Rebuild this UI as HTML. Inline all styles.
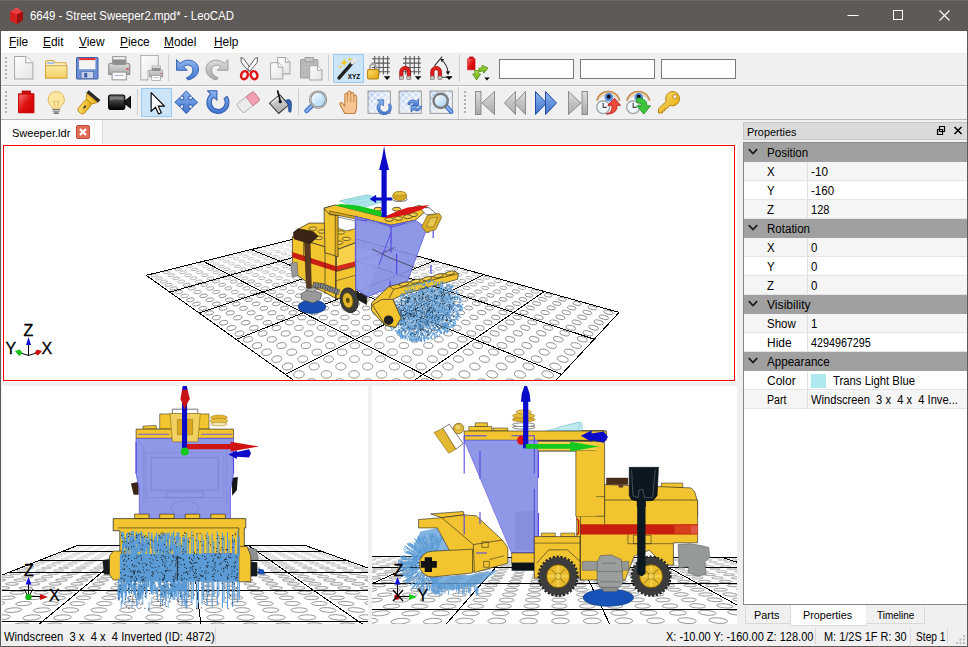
<!DOCTYPE html>
<html><head><meta charset="utf-8"><title>LeoCAD</title>
<style>
*{box-sizing:border-box;margin:0;padding:0}
html,body{width:968px;height:647px;overflow:hidden;background:#f0f0f0;font-family:"Liberation Sans","DejaVu Sans",sans-serif;font-size:12px;color:#000}
.abs{position:absolute}
#win{position:absolute;left:0;top:0;width:968px;height:647px;background:#f0f0f0;overflow:hidden}
.tx{position:absolute;white-space:nowrap;transform-origin:0 50%;transform:scaleX(.915);font-size:12.5px;line-height:15px}
#title{left:0;top:0;width:968px;height:31px;background:#5e5a58;color:#fff}
#menu{left:1px;top:31px;width:966px;height:21px;background:#fff}
.hl{position:absolute;left:1px;width:966px;height:1px}
.sep{position:absolute;width:1px;height:26px;background:#cdcdcd}
.btn{position:absolute;background:#cce4f7;border:1px solid #99c9ef}
.inp{position:absolute;top:59px;height:20px;background:#fff;border:1px solid #7a7a7a}
.ic{position:absolute;overflow:visible}
.grip{position:absolute;width:2px;height:24px;background:repeating-linear-gradient(#b0b0b0 0 2px,transparent 2px 4px)}
.vp{position:absolute;background:#fff;overflow:hidden}
.vp svg{position:absolute;left:0;top:0}
.row{position:absolute;left:744px;width:223px;height:19px;white-space:nowrap;border-bottom:1px solid #e4e4e4}
.row .k{left:23px;top:2px}
.row .v{left:67px;top:2px}
.row.h{background:#a0a0a0;border-bottom:1px solid #a0a0a0}
.row.a{background:#f5f5f5}
.row.b{background:#fff}
.row i{position:absolute;left:63px;top:0;width:1px;height:19px;background:#e0e0e0}
</style></head><body>

<svg width="0" height="0" style="position:absolute"><defs>
<linearGradient id="gPage" x1="0" y1="0" x2="1" y2="1"><stop offset="0" stop-color="#ffffff"/><stop offset="1" stop-color="#e4e4e4"/></linearGradient>
<linearGradient id="gFold" x1="0" y1="0" x2="0" y2="1"><stop offset="0" stop-color="#fbe9a4"/><stop offset="1" stop-color="#f3cf63"/></linearGradient>
<linearGradient id="gBlue" x1="0" y1="0" x2="0" y2="1"><stop offset="0" stop-color="#8db4ec"/><stop offset="1" stop-color="#3f74cf"/></linearGradient>
<linearGradient id="gGray" x1="0" y1="0" x2="0" y2="1"><stop offset="0" stop-color="#dcdcdc"/><stop offset="1" stop-color="#a9a9a9"/></linearGradient>
<linearGradient id="gRed" x1="0" y1="0" x2="1" y2="1"><stop offset="0" stop-color="#f87878"/><stop offset=".5" stop-color="#e01010"/><stop offset="1" stop-color="#c80000"/></linearGradient>
<linearGradient id="gGold" x1="0" y1="0" x2="1" y2="1"><stop offset="0" stop-color="#ffe27a"/><stop offset="1" stop-color="#e2a400"/></linearGradient>
<linearGradient id="gBlk" x1="0" y1="0" x2="0" y2="1"><stop offset="0" stop-color="#6a6a6a"/><stop offset="1" stop-color="#000"/></linearGradient>
<linearGradient id="gLens" x1="0" y1="0" x2="1" y2="1"><stop offset="0" stop-color="#ffffff"/><stop offset="1" stop-color="#9fd0f5"/></linearGradient>
<linearGradient id="gGrn" x1="0" y1="0" x2="0" y2="1"><stop offset="0" stop-color="#b6e34a"/><stop offset="1" stop-color="#5faa12"/></linearGradient>
<pattern id="chk" width="6" height="6" patternUnits="userSpaceOnUse"><rect width="6" height="6" fill="#eef4fc"/><rect width="3" height="3" fill="#a9c6f0"/><rect x="3" y="3" width="3" height="3" fill="#a9c6f0"/></pattern>
<linearGradient id="gFade" x1="0" y1="0" x2="1" y2="1"><stop offset="0" stop-color="#fff" stop-opacity="0"/><stop offset=".75" stop-color="#f4f4f4" stop-opacity=".9"/></linearGradient>
</defs></svg>

<div id="win">
<div id="title" class="abs">
<svg class="ic" style="left:8px;top:7px" width="18" height="18" viewBox="0 0 18 18"><path d="M2,5L8,2.500L15,4.500V13L9,17L2,13.500Z" fill="#c81818"/><path d="M2,5L9,7.500L15,4.500L8,2.500Z" fill="#e84040"/><path d="M9,7.500V17L2,13.500V5Z" fill="#d42020"/><path d="M9,7.500V17L15,13V4.500Z" fill="#a01010"/><ellipse cx="6" cy="3.500" rx="2" ry="1" fill="#e84040"/><ellipse cx="10.500" cy="3" rx="2" ry="1" fill="#e84040"/><ellipse cx="8.500" cy="1.800" rx="2" ry="1" fill="#f05050"/></svg>
<span class="tx" style="left:30px;top:9px;transform:scaleX(0.9146);">6649 - Street Sweeper2.mpd* - LeoCAD</span>
<svg class="ic" style="left:830px;top:0" width="138" height="31" viewBox="0 0 138 31"><path d="M17.500,15.500h11" stroke="#fff" stroke-width="1"/><rect x="63.500" y="10.500" width="9" height="9" fill="none" stroke="#fff"/><path d="M109.500,10.500l10,10m0,-10l-10,10" stroke="#fff" stroke-width="1.100"/></svg>
</div>
<div id="menu" class="abs">
<span class="tx" style="left:8px;top:4px;transform:scaleX(0.95);"><u>F</u>ile</span>
<span class="tx" style="left:42px;top:4px;transform:scaleX(0.95);"><u>E</u>dit</span>
<span class="tx" style="left:78px;top:4px;transform:scaleX(0.95);"><u>V</u>iew</span>
<span class="tx" style="left:119px;top:4px;transform:scaleX(0.95);"><u>P</u>iece</span>
<span class="tx" style="left:163px;top:4px;transform:scaleX(0.95);"><u>M</u>odel</span>
<span class="tx" style="left:213px;top:4px;transform:scaleX(0.95);"><u>H</u>elp</span>
</div>
<div class="hl" style="top:52px;background:#fafafa"></div>
<div class="hl" style="top:85px;background:#b9b9b9"></div>
<div class="hl" style="top:86px;background:#fbfbfb"></div>
<div class="hl" style="top:119px;background:#b9b9b9"></div>
<div class="grip" style="left:5px;top:57px"></div><div class="grip" style="left:5px;top:91px"></div>
<div class="btn" style="left:333px;top:54px;width:31px;height:29px"></div>
<div class="btn" style="left:141px;top:88px;width:31px;height:29px"></div>
<svg class="ic" style="left:11.75px;top:55.75px" width="24.5" height="24.5" viewBox="0 0 24 24"><path d="M2.5,.5H13.5L20.5,6.5V22.5H2.5Z" fill="url(#gPage)" stroke="#a8a8a8"/><path d="M13.5,.5V6.5H20.5" fill="#fff" stroke="#a8a8a8"/></svg>
<svg class="ic" style="left:44.25px;top:55.75px" width="24.5" height="24.5" viewBox="0 0 24 24"><path d="M1.5,6.5Q1.5,4.5 3.5,4.5H9L11,6.5H21.5V21.5H1.5Z" fill="#fdf3c8" stroke="#d1a640"/><rect x="3" y="6" width="7" height="2" fill="#9fc0ee"/><path d="M1.5,9.5H22.5V21.5H1.5Z" fill="url(#gFold)" stroke="#d1a640"/></svg>
<svg class="ic" style="left:75.25px;top:55.75px" width="24.5" height="24.5" viewBox="0 0 24 24"><path d="M1.5,2.5Q1.5,1.5 2.5,1.5H21.5Q22.5,1.5 22.5,2.5V21.5Q22.5,22.5 21.5,22.5H2.5Q1.5,22.5 1.5,21.5Z" fill="#6d8fd6" stroke="#3e5fa8"/><rect x="4" y="2" width="16" height="11" fill="#f4f4f4"/><rect x="4" y="2" width="16" height="2" fill="#e03030"/><rect x="6" y="15" width="12" height="7" fill="#c9d3e6" stroke="#3e5fa8" stroke-width=".6"/><rect x="9" y="16.5" width="3" height="4.5" fill="#3e5fa8"/></svg>
<svg class="ic" style="left:105.75px;top:54.75px" width="26.5" height="26.5" viewBox="0 0 24 24"><rect x="6" y="1.5" width="12" height="8" fill="#f4f4f4" stroke="#9a9a9a"/><path d="M2.5,9.5Q2.5,7.5 4.5,7.5H19.5Q21.5,7.5 21.5,9.5V17.5H2.5Z" fill="url(#gGray)" stroke="#8a8a8a"/><rect x="6" y="4" width="12" height="5" fill="#8f8f8f"/><rect x="5.5" y="15.5" width="13" height="7" fill="#fafafa" stroke="#9a9a9a"/><rect x="8" y="18" width="8" height="1" fill="#a9b7d0"/><rect x="18.5" y="12" width="2" height="1.2" fill="#e02020"/></svg>
<svg class="ic" style="left:137.75px;top:54.75px" width="26.5" height="26.5" viewBox="0 0 24 24"><path d="M2.5,.5H18.5V14H9V22.5H2.5Z" fill="url(#gPage)" stroke="#b4b4b4"/><g transform="translate(9,9) scale(.62)"><rect x="6" y="1.5" width="12" height="8" fill="#f4f4f4" stroke="#9a9a9a"/><path d="M2.5,9.5Q2.5,7.5 4.5,7.5H19.5Q21.5,7.5 21.5,9.5V17.5H2.5Z" fill="url(#gGray)" stroke="#8a8a8a"/><rect x="6" y="4" width="12" height="5" fill="#8f8f8f"/><rect x="5.5" y="15.5" width="13" height="7" fill="#fafafa" stroke="#9a9a9a"/><rect x="8" y="18" width="8" height="1" fill="#a9b7d0"/><rect x="18.5" y="12" width="2" height="1.2" fill="#e02020"/></g></svg>
<svg class="ic" style="left:175.25px;top:55.75px" width="24.5" height="24.5" viewBox="0 0 24 24"><path d="M1.500,3.500L1.500,14L12,14L8.300,10.500C12,7.500 18,9 17.500,14.500C17.200,17.500 14.500,20 11,21.500L13,23.500C19,22 23,18 23,13C23,4.500 12,1 5,7.200Z" fill="url(#gBlue)" stroke="#2e5cb0" stroke-width=".9" stroke-linejoin="round"/></svg>
<svg class="ic" style="left:205.25px;top:55.75px" width="24.5" height="24.5" viewBox="0 0 24 24"><g transform="translate(24,0) scale(-1,1)"><path d="M1.500,3.500L1.500,14L12,14L8.300,10.500C12,7.500 18,9 17.500,14.500C17.200,17.500 14.500,20 11,21.500L13,23.500C19,22 23,18 23,13C23,4.500 12,1 5,7.200Z" fill="url(#gGray)" stroke="#9a9a9a" stroke-width=".9" stroke-linejoin="round"/></g></svg>
<svg class="ic" style="left:236.75px;top:55.75px" width="24.5" height="24.5" viewBox="0 0 24 24"><path d="M3.800,1.500L6.500,2.500L13.500,12.500L11.500,15L4.300,6.500Z" fill="#f6f6f6" stroke="#444" stroke-width=".8" stroke-linejoin="round"/><path d="M20.200,1.500L17.500,2.500L10.500,12.500L12.500,15L19.700,6.500Z" fill="#fdfdfd" stroke="#444" stroke-width=".8" stroke-linejoin="round"/><ellipse cx="7.300" cy="18.800" rx="3.200" ry="4" fill="none" stroke="#e01414" stroke-width="2.400" transform="rotate(22 7.300 18.800)"/><ellipse cx="16.700" cy="18.800" rx="3.200" ry="4" fill="none" stroke="#e01414" stroke-width="2.400" transform="rotate(-22 16.700 18.800)"/></svg>
<svg class="ic" style="left:267.75px;top:55.75px" width="24.5" height="24.5" viewBox="0 0 24 24"><path d="M9.5,1.5H17L21.5,6V17.5H9.5Z" fill="url(#gPage)" stroke="#a8a8a8"/><path d="M17,1.5V6H21.5" fill="#fff" stroke="#a8a8a8"/><path d="M2.5,6.5H10L14.5,11V22.5H2.5Z" fill="url(#gPage)" stroke="#a8a8a8"/><path d="M10,6.5V11H14.5" fill="#fff" stroke="#a8a8a8"/></svg>
<svg class="ic" style="left:298.75px;top:55.75px" width="24.5" height="24.5" viewBox="0 0 24 24"><rect x="1.5" y="3.5" width="17" height="18" rx="1" fill="#b9b9b9" stroke="#a0a0a0"/><rect x="6" y="1.5" width="8" height="4" fill="#c9c9c9" stroke="#a0a0a0"/><path d="M10.5,9.5H18L22.5,14V23.5H10.5Z" fill="url(#gPage)" stroke="#a8a8a8"/><path d="M18,9.5V14H22.5" fill="#fff" stroke="#a8a8a8"/></svg>
<svg class="ic" style="left:336.25px;top:55.75px" width="24.5" height="24.5" viewBox="0 0 24 24"><path d="M3,21.5 L17,5.5" stroke="#222" stroke-width="3.4" stroke-linecap="round"/><path d="M16,6.6 L18.6,3.6" stroke="#e8e8e8" stroke-width="3.4" stroke-linecap="round"/><path d="M8,2.5l1,3 3,1 -3,1 -1,3 -1,-3 -3,-1 3,-1z" fill="#f7c518"/><path d="M13.5,1l.6,1.6 1.6,.6 -1.6,.6 -.6,1.6 -.6,-1.6 -1.600,-.6 1.600,-.6z" fill="#f7c518"/><path d="M4.5,9l.5,1.300 1.300,.5 -1.300,.5 -.5,1.300 -.5,-1.300 -1.300,-.5 1.300,-.5z" fill="#f7c518"/><text x="11.500" y="23" font-family="Liberation Sans,sans-serif" font-weight="bold" font-size="6.200" fill="#000">XYZ</text></svg>
<svg class="ic" style="left:366px;top:55px" width="26" height="26" viewBox="0 0 24 24"><path d="M5.500,3.500H22M5.500,7.500H22M5.500,11.500H22M5.500,15.500H22M8,1V18M12,1V18M16,1V18M20,1V18" stroke="#5a5a5a" stroke-width="1" fill="none"/><path d="M16.500,19.500h6l-3,3.500z" fill="#000"/><path d="M3.800,13.500V11a2.700,2.700 0 0 1 5.400,0V13.500" fill="none" stroke="#a8a8a8" stroke-width="1.700"/><rect x="1.500" y="13.500" width="10" height="8.500" rx="1" fill="url(#gGold)" stroke="#b8860b"/></svg>
<svg class="ic" style="left:396.5px;top:55px" width="26" height="26" viewBox="0 0 24 24"><path d="M5.500,3.500H22M5.500,7.500H22M5.500,11.500H22M5.500,15.500H22M8,1V18M12,1V18M16,1V18M20,1V18" stroke="#5a5a5a" stroke-width="1" fill="none"/><path d="M16.500,19.500h6l-3,3.500z" fill="#000"/><path d="M2.500,22V15.500a5,5 0 0 1 10,0V22H9.500V15.500a2,2 0 0 0 -4,0V22Z" fill="#e42020" stroke="#a00000" stroke-width=".7"/><rect x="2.200" y="19.500" width="3.600" height="3" fill="#c4c4c4" stroke="#777" stroke-width=".5"/><rect x="9.200" y="19.500" width="3.600" height="3" fill="#c4c4c4" stroke="#777" stroke-width=".5"/></svg>
<svg class="ic" style="left:428px;top:55px" width="26" height="26" viewBox="0 0 24 24"><path d="M6,10 L13,1.500 M12,20.500H22" stroke="#333" stroke-width="1" fill="none"/><path d="M12.500,4.500 Q18,9 18.500,16.500" stroke="#333" stroke-width="1" fill="none"/><path d="M11.500,3.500l3.500,.5 -2.500,2.500z M18.500,18.500l-2.200,-3.200 4.200,-.3z" fill="#111"/><path d="M16.500,19.500h6l-3,3.500z" fill="#000"/><path d="M2.500,22V15.500a5,5 0 0 1 10,0V22H9.500V15.500a2,2 0 0 0 -4,0V22Z" fill="#e42020" stroke="#a00000" stroke-width=".7"/><rect x="2.200" y="19.500" width="3.600" height="3" fill="#c4c4c4" stroke="#777" stroke-width=".5"/><rect x="9.200" y="19.500" width="3.600" height="3" fill="#c4c4c4" stroke="#777" stroke-width=".5"/></svg>
<svg class="ic" style="left:465px;top:55px" width="26" height="26" viewBox="0 0 24 24"><g transform="translate(.3,1.200) scale(.46,.56)"><rect x="8" y="1" width="8" height="3.500" fill="#d41010" stroke="#a00000" stroke-width=".8"/><rect x="4.500" y="3.800" width="15" height="18.500" rx=".3" fill="url(#gRed)" stroke="#c00000"/></g><path d="M7,17.500h2v-3.200h3.500v3.200h2l-3.750,5.500z" fill="url(#gGrn)" stroke="#4c8c10" stroke-width=".7" stroke-linejoin="round"/><path d="M13,11.500h3.500v-2.200l4.800,3.700 -4.800,3.700v-2.200h-3.500z" fill="url(#gGrn)" stroke="#4c8c10" stroke-width=".7" stroke-linejoin="round" transform="rotate(-12 17 13)"/><path d="M17.800,20.800h5l-2.500,2.700z" fill="#000"/></svg>
<div class="sep" style="left:168px;top:55px"></div>
<div class="sep" style="left:328px;top:55px"></div>
<div class="sep" style="left:459px;top:55px"></div>
<div class="inp" style="left:499px;width:75px"></div>
<div class="inp" style="left:580px;width:75px"></div>
<div class="inp" style="left:661px;width:75px"></div>
<svg class="ic" style="left:13.75px;top:90.25px" width="24.5" height="24.5" viewBox="0 0 24 24"><rect x="8" y="1" width="8" height="3.500" fill="#d41010" stroke="#a00000" stroke-width=".8"/><rect x="4.500" y="3.800" width="15" height="18.500" rx=".3" fill="url(#gRed)" stroke="#c00000"/></svg>
<svg class="ic" style="left:44.25px;top:90.25px" width="24.5" height="24.5" viewBox="0 0 24 24"><path d="M12,1.500a8,8 0 0 0 -4.500,14.500c.8,.8 1,2 1,3h7c0,-1 .2,-2.200 1,-3A8,8 0 0 0 12,1.500z" fill="#fbe7a0" stroke="#e0b050" stroke-width=".9"/><path d="M9.500,11l1.500,6M14.500,11l-1.500,6M9.500,11h5" stroke="#e6b85a" stroke-width=".8" fill="none"/><rect x="8.500" y="18.500" width="7" height="1.300" fill="#777"/><rect x="8.500" y="20.300" width="7" height="1.300" fill="#999"/><rect x="9.500" y="22" width="5" height="1.300" fill="#555"/></svg>
<svg class="ic" style="left:76.25px;top:90.75px" width="23.5" height="23.5" viewBox="0 0 24 24"><g transform="rotate(-50 12 12)"><rect x="-1" y="8.200" width="15.500" height="8" rx="3" fill="url(#gGold)" stroke="#b07a00" stroke-width=".8"/><path d="M14,8.200L19,5V19.500L14,16.200Z" fill="url(#gGold)" stroke="#b07a00" stroke-width=".8"/><rect x="19" y="4.500" width="3.500" height="15.500" fill="#2a2a2a"/><rect x="5" y="11.500" width="3.500" height="1.800" rx=".9" fill="#333"/></g></svg>
<svg class="ic" style="left:107.25px;top:90.25px" width="24.5" height="24.5" viewBox="0 0 24 24"><rect x="1.500" y="5" width="16" height="14" rx="2" fill="url(#gBlk)" stroke="#000"/><path d="M17.500,11L23,6.500V17.500L17.500,13.500Z" fill="#1a1a1a" stroke="#000"/><path d="M3,7Q9,6 16,7V10Q9,8.500 3,10Z" fill="#fff" opacity=".25"/></svg>
<svg class="ic" style="left:143.75px;top:90.25px" width="24.5" height="24.5" viewBox="0 0 24 24"><path transform="translate(.5,1)" d="M6.500,1.500V20L10.800,15.800L13.800,22.500L16.500,21.200L13.500,14.800H19.500Z" fill="#fff" stroke="#000" stroke-width="1.100" stroke-linejoin="round"/></svg>
<svg class="ic" style="left:173.75px;top:90.25px" width="24.5" height="24.5" viewBox="0 0 24 24"><path d="M12,.8L17,6.200H14.600V9.400H17.800V7L23.200,12L17.800,17V14.600H14.600V17.800H17L12,23.200L7,17.800H9.400V14.600H6.200V17L.8,12L6.200,7V9.400H9.400V6.200H7Z" fill="url(#gBlue)" stroke="#2e5cb0" stroke-width=".9" stroke-linejoin="round"/></svg>
<svg class="ic" style="left:203.5px;top:89px" width="27" height="27" viewBox="0 0 24 24"><path d="M3,1.500H11.500V10L8.700,7.200A6.200,6.200 0 1 0 17.800,8.500L20.500,6.500A9.800,9.800 0 1 1 6,4.500Z" fill="url(#gBlue)" stroke="#2e5cb0" stroke-width=".9" stroke-linejoin="round"/></svg>
<svg class="ic" style="left:236.25px;top:90.25px" width="24.5" height="24.5" viewBox="0 0 24 24"><g transform="rotate(-38 12 12)"><rect x="1.500" y="6.500" width="21" height="11" rx="2" fill="#ececec" stroke="#a8a8a8" stroke-width=".8"/><path d="M13.500,6.500H20.500a2,2 0 0 1 2,2v7a2,2 0 0 1 -2,2H13.500Z" fill="#f0a0b0" stroke="#d07888" stroke-width=".8"/></g></svg>
<svg class="ic" style="left:267.75px;top:90.25px" width="24.5" height="24.5" viewBox="0 0 24 24"><path d="M1.500,13L11.500,4.500L20.500,14.500L10.500,23Z" fill="url(#gGray)" stroke="#333" stroke-width="1"/><path d="M3.500,13L11.500,6" stroke="#fff" stroke-width="1.400" opacity=".8"/><path d="M17,10.500C21,7.500 23.500,10.500 23,15L22.500,21.500C20.500,22.500 20,20.500 20,18.500C20,15 19.500,13.500 18.500,12.500Z" fill="#2f5fb0" stroke="#1e4080" stroke-width=".6"/><path d="M9.500,1L12,11" stroke="#111" stroke-width="1.700" stroke-linecap="round"/><circle cx="12" cy="11.500" r="1.600" fill="#111"/></svg>
<svg class="ic" style="left:302.75px;top:90.25px" width="24.5" height="24.5" viewBox="0 0 24 24"><path d="M8.500,15.500L3.500,20.500" stroke="#3f74cf" stroke-width="4.600" stroke-linecap="round"/><path d="M8.500,15.500L3.500,20.500" stroke="#8db4ec" stroke-width="2" stroke-linecap="round"/><circle cx="14.800" cy="9.500" r="7.800" fill="url(#gLens)" stroke="#7a7a7a" stroke-width="2.200"/><circle cx="14.800" cy="9.500" r="7.800" fill="none" stroke="#dcdcdc" stroke-width=".8"/></svg>
<svg class="ic" style="left:336.25px;top:90.25px" width="24.5" height="24.5" viewBox="0 0 24 24"><g transform="translate(1.500,-1.200) scale(1.1)"><path d="M6.500,22C5,19 2.500,15.500 2,13.500C1.800,12 3.500,11.800 4.500,13L6.500,15.500V5.500C6.500,3.500 9,3.500 9,5.500V3.500C9,1.500 11.800,1.500 11.800,3.500V4.500C11.800,2.800 14.500,2.800 14.500,4.800V6.500C14.500,5 17,5 17,7V16C17,19 16,20.500 15.500,22Z" fill="#f6c592" stroke="#c08040" stroke-width=".9" stroke-linejoin="round"/><path d="M9,5.500V12M11.800,4.500V12M14.500,6.500V12" stroke="#c08040" stroke-width=".7"/></g></svg>
<svg class="ic" style="left:366.5px;top:89.5px" width="26" height="26" viewBox="0 0 24 24"><rect x="1" y="1" width="20.500" height="20.500" fill="url(#chk)" stroke="#9a9a9a"/><rect x="1.500" y="1.500" width="19.500" height="19.500" fill="url(#gFade)"/><g transform="translate(7.500,8) scale(.68)"><path d="M3,1.500H11.500V10L8.700,7.200A6.200,6.200 0 1 0 17.800,8.500L20.500,6.500A9.800,9.800 0 1 1 6,4.500Z" fill="url(#gBlue)" stroke="#2e5cb0" stroke-width=".9" stroke-linejoin="round"/></g></svg>
<svg class="ic" style="left:397.5px;top:89.5px" width="26" height="26" viewBox="0 0 24 24"><rect x="1" y="1" width="20.500" height="20.500" fill="url(#chk)" stroke="#9a9a9a"/><rect x="1.500" y="1.500" width="19.500" height="19.500" fill="url(#gFade)"/><path d="M9,13C10,9 14,8 17,10.500L19,8V14.500H12.500L15,12.500C13,11 11.500,12 11,14Z" fill="url(#gBlue)" stroke="#2e5cb0" stroke-width=".7"/><path d="M22,15C21,19.500 17,20.500 14,18L12,20.500V14.500H18.500L16,16.500C18,18 19.500,16.500 20,14.800Z" fill="url(#gBlue)" stroke="#2e5cb0" stroke-width=".7"/></svg>
<svg class="ic" style="left:428.5px;top:89.5px" width="26" height="26" viewBox="0 0 24 24"><rect x="1" y="1" width="20.500" height="20.500" fill="url(#chk)" stroke="#9a9a9a"/><rect x="1.500" y="1.500" width="19.500" height="19.500" fill="url(#gFade)"/><path d="M16,15L20.500,20" stroke="#3f74cf" stroke-width="4.200" stroke-linecap="round"/><path d="M16,15L20.500,20" stroke="#8db4ec" stroke-width="1.800" stroke-linecap="round"/><circle cx="10.800" cy="10" r="6.600" fill="url(#gLens)" stroke="#7a7a7a" stroke-width="2.200"/></svg>
<svg class="ic" style="left:472.5px;top:90.5px" width="24" height="24" viewBox="0 0 24 24"><rect x="2.500" y=".5" width="5.500" height="23" fill="url(#gGray)" stroke="#8c8c8c"/><path d="M21.500,.5V23.500L9,12Z" fill="url(#gGray)" stroke="#8c8c8c"/></svg>
<svg class="ic" style="left:503px;top:90.5px" width="24" height="24" viewBox="0 0 24 24"><path d="M12.500,.5V23.500L1.500,12Z" fill="url(#gGray)" stroke="#8c8c8c"/><path d="M22.500,.5V23.500L11.500,12Z" fill="url(#gGray)" stroke="#8c8c8c"/></svg>
<svg class="ic" style="left:533.5px;top:90.5px" width="24" height="24" viewBox="0 0 24 24"><path d="M1.500,.5V23.500L12.500,12Z" fill="url(#gBlue)" stroke="#2448a8"/><path d="M11.500,.5V23.500L22.500,12Z" fill="url(#gBlue)" stroke="#2448a8"/></svg>
<svg class="ic" style="left:566px;top:90.5px" width="24" height="24" viewBox="0 0 24 24"><rect x="16" y=".5" width="5.500" height="23" fill="url(#gGray)" stroke="#8c8c8c"/><path d="M2.500,.5V23.500L15,12Z" fill="url(#gGray)" stroke="#8c8c8c"/></svg>
<svg class="ic" style="left:595.75px;top:90.25px" width="24.5" height="24.5" viewBox="0 0 24 24"><path d="M.8,10.500C3,-1.500 21,-1.500 23.200,10.500" fill="#f6dcb4" stroke="#c48a50" stroke-width="1.500"/><path d="M2,10.500C5,3 19,3 22,10.500C18,14 6,14 2,10.500Z" fill="#f4f8fc" stroke="#b0b0b0" stroke-width=".5"/><circle cx="12.500" cy="7" r="4.200" fill="#5b8fdc"/><circle cx="12.500" cy="6.500" r="2" fill="#0a1020"/><circle cx="7" cy="16.800" r="6.300" fill="#f0f7fc" stroke="#a4a4a4" stroke-width="1.300"/><path d="M7,12.500V17H10.500" stroke="#444" stroke-width="1.100" fill="none"/><path d="M10,23.500C15,22.500 16,19 15.500,15H11.500L18,8L24,15H20.500C21,20.500 17,24 10,23.500Z" fill="#ec4c3c" stroke="#b01010" stroke-width=".8" stroke-linejoin="round"/></svg>
<svg class="ic" style="left:626.25px;top:90.25px" width="24.5" height="24.5" viewBox="0 0 24 24"><path d="M.8,10.500C3,-1.500 21,-1.500 23.200,10.500" fill="#f6dcb4" stroke="#c48a50" stroke-width="1.500"/><path d="M2,10.500C5,3 19,3 22,10.500C18,14 6,14 2,10.500Z" fill="#f4f8fc" stroke="#b0b0b0" stroke-width=".5"/><circle cx="12.500" cy="7" r="4.200" fill="#5b8fdc"/><circle cx="12.500" cy="6.500" r="2" fill="#0a1020"/><circle cx="7" cy="16.800" r="6.300" fill="#f0f7fc" stroke="#a4a4a4" stroke-width="1.300"/><path d="M7,12.500V17H10.500" stroke="#444" stroke-width="1.100" fill="none"/><path d="M10.500,8C16,7 20.500,10 20.500,15.500H24L17.500,23.500L10.500,15.500H15C15,13 13.500,12 10.500,12.500Z" fill="#3cc43c" stroke="#1c8c1c" stroke-width=".8" stroke-linejoin="round"/></svg>
<svg class="ic" style="left:656.75px;top:90.25px" width="24.5" height="24.5" viewBox="0 0 24 24"><path d="M15.500,1.500a7,7 0 0 0 -6.500,9.500L1.500,18.500V22.500H5.500V20.500H7.500V18.500H9.500L12.500,15a7,7 0 1 0 3,-13.500z" fill="url(#gGold)" stroke="#b07a00" stroke-width=".9" stroke-linejoin="round"/><circle cx="17.500" cy="6.500" r="2" fill="#f0f0f0" stroke="#b07a00" stroke-width=".8"/></svg>
<div class="sep" style="left:137px;top:89px"></div>
<div class="sep" style="left:298px;top:89px"></div>
<div class="sep" style="left:458px;top:87px;height:32px;background:#c4c4c4"></div><div class="sep" style="left:459px;top:87px;height:32px;background:#fbfbfb"></div><div class="grip" style="left:464px;top:91px"></div>
<div class="abs" style="left:1px;top:120px;width:102px;height:24px;background:#fbfbfb;border-right:1px solid #dcdcdc"></div>
<span class="tx" style="left:12px;top:125.8px;font-size:11.3px;transform:scaleX(0.9773);">Sweeper.ldr</span>
<svg class="ic" style="left:76px;top:125px" width="14" height="14" viewBox="0 0 14 14"><rect x=".5" y=".5" width="13" height="13" rx="1.500" fill="#e06c58" stroke="#c24a38"/><path d="M4,4l6,6m0,-6l-6,6" stroke="#fff" stroke-width="2.200"/></svg>
<div class="vp" style="left:2px;top:144px;width:735px;height:238px"><svg width="735" height="238" viewBox="2 144 735 238"><clipPath id="ct"><rect x="4" y="146" width="730" height="234"/></clipPath><g clip-path="url(#ct)"><g fill="none" stroke="#8c8c8c" stroke-width="0.9" opacity="0.17"><ellipse cx="326.9" cy="232.5" rx="2.4" ry="0.8"/></g><g fill="none" stroke="#8c8c8c" stroke-width="0.9" opacity="0.33"><ellipse cx="258.3" cy="249.5" rx="2.8" ry="1.0" transform="rotate(176 258.3 249.5)"/><ellipse cx="266.9" cy="247.4" rx="2.7" ry="0.9"/><ellipse cx="272.5" cy="249.5" rx="2.7" ry="1.0"/><ellipse cx="275.2" cy="245.4" rx="2.7" ry="0.9"/><ellipse cx="280.8" cy="247.4" rx="2.7" ry="1.0"/><ellipse cx="286.6" cy="249.5" rx="2.7" ry="1.0"/><ellipse cx="283.3" cy="243.4" rx="2.6" ry="0.9"/><ellipse cx="288.9" cy="245.3" rx="2.6" ry="0.9"/><ellipse cx="294.7" cy="247.3" rx="2.7" ry="1.0"/><ellipse cx="300.7" cy="249.4" rx="2.7" ry="1.0"/><ellipse cx="291.1" cy="241.4" rx="2.6" ry="0.9"/><ellipse cx="296.8" cy="243.3" rx="2.6" ry="0.9"/><ellipse cx="302.6" cy="245.3" rx="2.6" ry="0.9"/><ellipse cx="308.7" cy="247.3" rx="2.7" ry="1.0"/><ellipse cx="314.9" cy="249.4" rx="2.7" ry="1.0"/><ellipse cx="298.7" cy="239.5" rx="2.5" ry="0.8"/><ellipse cx="304.4" cy="241.4" rx="2.5" ry="0.9"/><ellipse cx="310.3" cy="243.3" rx="2.6" ry="0.9"/><ellipse cx="316.3" cy="245.2" rx="2.6" ry="0.9"/><ellipse cx="322.6" cy="247.3" rx="2.7" ry="1.0"/><ellipse cx="329.1" cy="249.4" rx="2.7" ry="1.0"/><ellipse cx="306.1" cy="237.7" rx="2.5" ry="0.8"/><ellipse cx="311.8" cy="239.5" rx="2.5" ry="0.9"/><ellipse cx="317.7" cy="241.3" rx="2.5" ry="0.9"/><ellipse cx="323.8" cy="243.2" rx="2.6" ry="0.9"/><ellipse cx="330.1" cy="245.2" rx="2.6" ry="0.9"/><ellipse cx="336.5" cy="247.2" rx="2.7" ry="1.0"/><ellipse cx="343.2" cy="249.3" rx="2.7" ry="1.0"/><ellipse cx="313.2" cy="235.9" rx="2.4" ry="0.8"/><ellipse cx="319.0" cy="237.7" rx="2.5" ry="0.8"/><ellipse cx="324.9" cy="239.5" rx="2.5" ry="0.9"/><ellipse cx="331.0" cy="241.3" rx="2.5" ry="0.9"/><ellipse cx="337.3" cy="243.2" rx="2.6" ry="0.9"/><ellipse cx="343.8" cy="245.2" rx="2.6" ry="0.9"/><ellipse cx="350.5" cy="247.2" rx="2.7" ry="1.0"/><ellipse cx="357.4" cy="249.3" rx="2.7" ry="1.0"/><ellipse cx="320.2" cy="234.2" rx="2.4" ry="0.8"/><ellipse cx="325.9" cy="235.9" rx="2.4" ry="0.8"/><ellipse cx="331.9" cy="237.6" rx="2.5" ry="0.8"/><ellipse cx="338.0" cy="239.4" rx="2.5" ry="0.9"/><ellipse cx="344.3" cy="241.3" rx="2.5" ry="0.9"/><ellipse cx="350.8" cy="243.2" rx="2.6" ry="0.9"/><ellipse cx="357.5" cy="245.1" rx="2.6" ry="0.9"/><ellipse cx="364.4" cy="247.2" rx="2.7" ry="1.0"/><ellipse cx="371.6" cy="249.3" rx="2.7" ry="1.0"/><ellipse cx="332.7" cy="234.2" rx="2.4" ry="0.8"/><ellipse cx="338.7" cy="235.9" rx="2.4" ry="0.8"/><ellipse cx="344.8" cy="237.6" rx="2.5" ry="0.8"/><ellipse cx="351.1" cy="239.4" rx="2.5" ry="0.9"/><ellipse cx="357.6" cy="241.2" rx="2.5" ry="0.9"/><ellipse cx="364.3" cy="243.1" rx="2.6" ry="0.9"/><ellipse cx="371.2" cy="245.1" rx="2.6" ry="0.9"/><ellipse cx="378.4" cy="247.1" rx="2.7" ry="1.0"/><ellipse cx="385.8" cy="249.2" rx="2.7" ry="1.0"/></g><g fill="none" stroke="#8c8c8c" stroke-width="0.9" opacity="0.50"><ellipse cx="189.6" cy="266.6" rx="3.3" ry="1.2" transform="rotate(173 189.6 266.6)"/><ellipse cx="200.5" cy="263.9" rx="3.2" ry="1.1" transform="rotate(173 200.5 263.9)"/><ellipse cx="205.5" cy="266.6" rx="3.2" ry="1.2" transform="rotate(173 205.5 266.6)"/><ellipse cx="211.0" cy="261.3" rx="3.1" ry="1.1" transform="rotate(174 211.0 261.3)"/><ellipse cx="216.1" cy="263.9" rx="3.1" ry="1.2" transform="rotate(174 216.1 263.9)"/><ellipse cx="221.1" cy="258.8" rx="3.0" ry="1.1" transform="rotate(174 221.1 258.8)"/><ellipse cx="226.3" cy="261.3" rx="3.1" ry="1.1" transform="rotate(174 226.3 261.3)"/><ellipse cx="231.7" cy="263.8" rx="3.1" ry="1.2" transform="rotate(174 231.7 263.8)"/><ellipse cx="230.9" cy="256.4" rx="3.0" ry="1.1" transform="rotate(174 230.9 256.4)"/><ellipse cx="236.2" cy="258.7" rx="3.0" ry="1.1" transform="rotate(174 236.2 258.7)"/><ellipse cx="241.7" cy="261.2" rx="3.0" ry="1.1" transform="rotate(175 241.7 261.2)"/><ellipse cx="247.3" cy="263.8" rx="3.1" ry="1.2" transform="rotate(175 247.3 263.8)"/><ellipse cx="240.3" cy="254.0" rx="2.9" ry="1.0" transform="rotate(175 240.3 254.0)"/><ellipse cx="245.7" cy="256.3" rx="2.9" ry="1.1" transform="rotate(175 245.7 256.3)"/><ellipse cx="251.3" cy="258.7" rx="3.0" ry="1.1" transform="rotate(175 251.3 258.7)"/><ellipse cx="257.0" cy="261.2" rx="3.0" ry="1.1" transform="rotate(175 257.0 261.2)"/><ellipse cx="263.0" cy="263.8" rx="3.1" ry="1.2" transform="rotate(175 263.0 263.8)"/><ellipse cx="249.5" cy="251.7" rx="2.8" ry="1.0" transform="rotate(175 249.5 251.7)"/><ellipse cx="254.9" cy="254.0" rx="2.9" ry="1.0" transform="rotate(175 254.9 254.0)"/><ellipse cx="260.5" cy="256.3" rx="2.9" ry="1.1" transform="rotate(175 260.5 256.3)"/><ellipse cx="266.4" cy="258.7" rx="2.9" ry="1.1" transform="rotate(176 266.4 258.7)"/><ellipse cx="272.4" cy="261.2" rx="3.0" ry="1.2" transform="rotate(176 272.4 261.2)"/><ellipse cx="278.6" cy="263.7" rx="3.0" ry="1.2" transform="rotate(176 278.6 263.7)"/><ellipse cx="263.8" cy="251.7" rx="2.8" ry="1.0" transform="rotate(176 263.8 251.7)"/><ellipse cx="269.5" cy="253.9" rx="2.8" ry="1.0" transform="rotate(176 269.5 253.9)"/><ellipse cx="275.4" cy="256.2" rx="2.9" ry="1.1"/><ellipse cx="281.5" cy="258.6" rx="2.9" ry="1.1"/><ellipse cx="287.8" cy="261.1" rx="3.0" ry="1.2"/><ellipse cx="294.3" cy="263.7" rx="3.0" ry="1.2"/><ellipse cx="278.2" cy="251.7" rx="2.8" ry="1.0"/><ellipse cx="284.1" cy="253.9" rx="2.8" ry="1.1"/><ellipse cx="290.2" cy="256.2" rx="2.9" ry="1.1"/><ellipse cx="296.6" cy="258.6" rx="2.9" ry="1.1"/><ellipse cx="303.1" cy="261.1" rx="3.0" ry="1.2"/><ellipse cx="310.0" cy="263.7" rx="3.0" ry="1.2"/><ellipse cx="292.6" cy="251.6" rx="2.8" ry="1.0"/><ellipse cx="298.7" cy="253.9" rx="2.8" ry="1.1"/><ellipse cx="305.1" cy="256.2" rx="2.9" ry="1.1"/><ellipse cx="311.7" cy="258.6" rx="2.9" ry="1.1"/><ellipse cx="318.5" cy="261.1" rx="2.9" ry="1.2"/><ellipse cx="325.6" cy="263.6" rx="3.0" ry="1.2"/><ellipse cx="306.9" cy="251.6" rx="2.8" ry="1.0"/><ellipse cx="313.4" cy="253.8" rx="2.8" ry="1.1"/><ellipse cx="320.0" cy="256.1" rx="2.8" ry="1.1"/><ellipse cx="326.8" cy="258.5" rx="2.9" ry="1.1"/><ellipse cx="334.0" cy="261.0" rx="2.9" ry="1.2"/><ellipse cx="341.3" cy="263.6" rx="3.0" ry="1.2"/><ellipse cx="321.3" cy="251.6" rx="2.7" ry="1.0"/><ellipse cx="328.0" cy="253.8" rx="2.8" ry="1.1"/><ellipse cx="334.9" cy="256.1" rx="2.8" ry="1.1"/><ellipse cx="342.0" cy="258.5" rx="2.9" ry="1.1"/><ellipse cx="349.4" cy="261.0" rx="2.9" ry="1.2"/><ellipse cx="357.0" cy="263.6" rx="3.0" ry="1.2"/><ellipse cx="335.7" cy="251.5" rx="2.7" ry="1.0"/><ellipse cx="342.6" cy="253.8" rx="2.8" ry="1.1"/><ellipse cx="349.8" cy="256.1" rx="2.8" ry="1.1"/><ellipse cx="357.1" cy="258.5" rx="2.9" ry="1.1"/><ellipse cx="364.8" cy="260.9" rx="2.9" ry="1.2"/><ellipse cx="372.7" cy="263.5" rx="3.0" ry="1.2"/><ellipse cx="350.1" cy="251.5" rx="2.7" ry="1.0"/><ellipse cx="357.3" cy="253.7" rx="2.8" ry="1.1"/><ellipse cx="364.7" cy="256.0" rx="2.8" ry="1.1"/><ellipse cx="372.3" cy="258.4" rx="2.9" ry="1.1"/><ellipse cx="380.2" cy="260.9" rx="2.9" ry="1.2"/><ellipse cx="388.4" cy="263.5" rx="3.0" ry="1.2"/><ellipse cx="364.5" cy="251.5" rx="2.7" ry="1.0"/><ellipse cx="371.9" cy="253.7" rx="2.8" ry="1.1"/><ellipse cx="379.6" cy="256.0" rx="2.8" ry="1.1"/><ellipse cx="387.5" cy="258.4" rx="2.9" ry="1.1"/><ellipse cx="395.7" cy="260.9" rx="2.9" ry="1.2"/><ellipse cx="404.2" cy="263.4" rx="3.0" ry="1.2"/><ellipse cx="379.0" cy="251.4" rx="2.7" ry="1.0"/><ellipse cx="386.6" cy="253.7" rx="2.8" ry="1.1"/><ellipse cx="394.5" cy="256.0" rx="2.8" ry="1.1"/><ellipse cx="402.7" cy="258.4" rx="2.9" ry="1.1"/><ellipse cx="411.1" cy="260.8" rx="3.0" ry="1.2"/><ellipse cx="419.9" cy="263.4" rx="3.0" ry="1.2"/><ellipse cx="393.4" cy="251.4" rx="2.8" ry="1.0"/><ellipse cx="401.3" cy="253.6" rx="2.8" ry="1.1"/><ellipse cx="409.4" cy="255.9" rx="2.9" ry="1.1"/><ellipse cx="417.9" cy="258.3" rx="2.9" ry="1.1"/><ellipse cx="426.6" cy="260.8" rx="3.0" ry="1.2"/><ellipse cx="435.7" cy="263.4" rx="3.0" ry="1.2"/></g><g fill="none" stroke="#8c8c8c" stroke-width="0.9" opacity="0.67"><ellipse cx="154.6" cy="275.3" rx="3.6" ry="1.3" transform="rotate(171 154.6 275.3)"/><ellipse cx="159.1" cy="278.4" rx="3.6" ry="1.3" transform="rotate(171 159.1 278.4)"/><ellipse cx="163.8" cy="281.6" rx="3.7" ry="1.4" transform="rotate(171 163.8 281.6)"/><ellipse cx="166.7" cy="272.3" rx="3.5" ry="1.2" transform="rotate(172 166.7 272.3)"/><ellipse cx="171.3" cy="275.2" rx="3.5" ry="1.3" transform="rotate(172 171.3 275.2)"/><ellipse cx="176.2" cy="278.3" rx="3.6" ry="1.3" transform="rotate(172 176.2 278.3)"/><ellipse cx="181.2" cy="281.6" rx="3.6" ry="1.4" transform="rotate(171 181.2 281.6)"/><ellipse cx="178.4" cy="269.4" rx="3.4" ry="1.2" transform="rotate(172 178.4 269.4)"/><ellipse cx="183.2" cy="272.2" rx="3.4" ry="1.3" transform="rotate(172 183.2 272.2)"/><ellipse cx="188.1" cy="275.2" rx="3.5" ry="1.3" transform="rotate(172 188.1 275.2)"/><ellipse cx="193.3" cy="278.3" rx="3.5" ry="1.4" transform="rotate(172 193.3 278.3)"/><ellipse cx="198.7" cy="281.5" rx="3.6" ry="1.4" transform="rotate(172 198.7 281.5)"/><ellipse cx="194.5" cy="269.3" rx="3.3" ry="1.2" transform="rotate(173 194.5 269.3)"/><ellipse cx="199.6" cy="272.2" rx="3.4" ry="1.3" transform="rotate(173 199.6 272.2)"/><ellipse cx="204.9" cy="275.2" rx="3.4" ry="1.3" transform="rotate(173 204.9 275.2)"/><ellipse cx="210.4" cy="278.3" rx="3.5" ry="1.4" transform="rotate(173 210.4 278.3)"/><ellipse cx="210.7" cy="269.3" rx="3.3" ry="1.2" transform="rotate(173 210.7 269.3)"/><ellipse cx="216.1" cy="272.2" rx="3.3" ry="1.3" transform="rotate(173 216.1 272.2)"/><ellipse cx="221.8" cy="275.2" rx="3.4" ry="1.3" transform="rotate(173 221.8 275.2)"/><ellipse cx="227.6" cy="278.2" rx="3.4" ry="1.4" transform="rotate(173 227.6 278.2)"/><ellipse cx="221.4" cy="266.5" rx="3.2" ry="1.2" transform="rotate(174 221.4 266.5)"/><ellipse cx="226.9" cy="269.3" rx="3.2" ry="1.3" transform="rotate(174 226.9 269.3)"/><ellipse cx="232.6" cy="272.1" rx="3.3" ry="1.3" transform="rotate(174 232.6 272.1)"/><ellipse cx="238.6" cy="275.1" rx="3.3" ry="1.4" transform="rotate(174 238.6 275.1)"/><ellipse cx="244.8" cy="278.2" rx="3.4" ry="1.4" transform="rotate(174 244.8 278.2)"/><ellipse cx="237.3" cy="266.5" rx="3.2" ry="1.2" transform="rotate(174 237.3 266.5)"/><ellipse cx="243.1" cy="269.2" rx="3.2" ry="1.3" transform="rotate(174 243.1 269.2)"/><ellipse cx="249.2" cy="272.1" rx="3.3" ry="1.3" transform="rotate(174 249.2 272.1)"/><ellipse cx="255.4" cy="275.1" rx="3.3" ry="1.4" transform="rotate(175 255.4 275.1)"/><ellipse cx="261.9" cy="278.2" rx="3.4" ry="1.4" transform="rotate(175 261.9 278.2)"/><ellipse cx="253.2" cy="266.4" rx="3.1" ry="1.2" transform="rotate(175 253.2 266.4)"/><ellipse cx="259.3" cy="269.2" rx="3.2" ry="1.3" transform="rotate(175 259.3 269.2)"/><ellipse cx="265.7" cy="272.1" rx="3.2" ry="1.3" transform="rotate(175 265.7 272.1)"/><ellipse cx="272.3" cy="275.1" rx="3.3" ry="1.4" transform="rotate(175 272.3 275.1)"/><ellipse cx="279.1" cy="278.1" rx="3.3" ry="1.5" transform="rotate(176 279.1 278.1)"/><ellipse cx="269.2" cy="266.4" rx="3.1" ry="1.2" transform="rotate(175 269.2 266.4)"/><ellipse cx="275.6" cy="269.2" rx="3.2" ry="1.3" transform="rotate(176 275.6 269.2)"/><ellipse cx="282.2" cy="272.0" rx="3.2" ry="1.3" transform="rotate(176 282.2 272.0)"/><ellipse cx="289.1" cy="275.0" rx="3.3" ry="1.4"/><ellipse cx="296.3" cy="278.1" rx="3.3" ry="1.5"/><ellipse cx="285.1" cy="266.4" rx="3.1" ry="1.3"/><ellipse cx="291.8" cy="269.1" rx="3.1" ry="1.3"/><ellipse cx="298.8" cy="272.0" rx="3.2" ry="1.4"/><ellipse cx="306.0" cy="275.0" rx="3.2" ry="1.4"/><ellipse cx="313.5" cy="278.1" rx="3.3" ry="1.5"/><ellipse cx="301.0" cy="266.3" rx="3.1" ry="1.3"/><ellipse cx="308.1" cy="269.1" rx="3.1" ry="1.3"/><ellipse cx="315.3" cy="272.0" rx="3.2" ry="1.4"/><ellipse cx="322.9" cy="275.0" rx="3.2" ry="1.4"/><ellipse cx="330.8" cy="278.0" rx="3.3" ry="1.5"/><ellipse cx="317.0" cy="266.3" rx="3.1" ry="1.3"/><ellipse cx="324.3" cy="269.1" rx="3.1" ry="1.3"/><ellipse cx="331.9" cy="271.9" rx="3.2" ry="1.4"/><ellipse cx="339.8" cy="274.9" rx="3.2" ry="1.4"/><ellipse cx="348.0" cy="278.0" rx="3.3" ry="1.5"/><ellipse cx="333.0" cy="266.3" rx="3.0" ry="1.3"/><ellipse cx="340.6" cy="269.0" rx="3.1" ry="1.3"/><ellipse cx="348.5" cy="271.9" rx="3.2" ry="1.4"/><ellipse cx="356.7" cy="274.9" rx="3.2" ry="1.4"/><ellipse cx="365.3" cy="278.0" rx="3.3" ry="1.5"/><ellipse cx="348.9" cy="266.2" rx="3.0" ry="1.3"/><ellipse cx="356.9" cy="269.0" rx="3.1" ry="1.3"/><ellipse cx="365.1" cy="271.9" rx="3.2" ry="1.4"/><ellipse cx="373.6" cy="274.9" rx="3.2" ry="1.4"/><ellipse cx="382.5" cy="278.0" rx="3.3" ry="1.5"/><ellipse cx="364.9" cy="266.2" rx="3.0" ry="1.3"/><ellipse cx="373.2" cy="269.0" rx="3.1" ry="1.3"/><ellipse cx="381.7" cy="271.8" rx="3.2" ry="1.4"/><ellipse cx="390.6" cy="274.8" rx="3.2" ry="1.4"/><ellipse cx="399.8" cy="277.9" rx="3.3" ry="1.5"/><ellipse cx="380.9" cy="266.2" rx="3.0" ry="1.3"/><ellipse cx="389.5" cy="268.9" rx="3.1" ry="1.3"/><ellipse cx="398.3" cy="271.8" rx="3.2" ry="1.4"/><ellipse cx="407.5" cy="274.8" rx="3.2" ry="1.4"/><ellipse cx="417.1" cy="277.9" rx="3.3" ry="1.5"/><ellipse cx="396.9" cy="266.1" rx="3.1" ry="1.3"/><ellipse cx="405.8" cy="268.9" rx="3.1" ry="1.3"/><ellipse cx="414.9" cy="271.8" rx="3.2" ry="1.4"/><ellipse cx="424.5" cy="274.8" rx="3.3" ry="1.4"/><ellipse cx="434.4" cy="277.9" rx="3.3" ry="1.5"/><ellipse cx="413.0" cy="266.1" rx="3.1" ry="1.3"/><ellipse cx="422.1" cy="268.9" rx="3.1" ry="1.3"/><ellipse cx="431.6" cy="271.7" rx="3.2" ry="1.4"/><ellipse cx="441.4" cy="274.7" rx="3.3" ry="1.4" transform="rotate(-176 441.4 274.7)"/><ellipse cx="451.7" cy="277.8" rx="3.4" ry="1.5" transform="rotate(-175 451.7 277.8)"/><ellipse cx="429.0" cy="266.1" rx="3.1" ry="1.3"/><ellipse cx="438.4" cy="268.8" rx="3.2" ry="1.3"/><ellipse cx="448.2" cy="271.7" rx="3.2" ry="1.3" transform="rotate(-176 448.2 271.7)"/><ellipse cx="458.4" cy="274.7" rx="3.3" ry="1.4" transform="rotate(-175 458.4 274.7)"/><ellipse cx="469.0" cy="277.8" rx="3.4" ry="1.4" transform="rotate(-175 469.0 277.8)"/><ellipse cx="445.0" cy="266.0" rx="3.1" ry="1.3"/><ellipse cx="454.8" cy="268.8" rx="3.2" ry="1.3" transform="rotate(-176 454.8 268.8)"/><ellipse cx="464.9" cy="271.7" rx="3.3" ry="1.3" transform="rotate(-175 464.9 271.7)"/><ellipse cx="475.4" cy="274.7" rx="3.4" ry="1.4" transform="rotate(-174 475.4 274.7)"/><ellipse cx="486.3" cy="277.8" rx="3.4" ry="1.4" transform="rotate(-174 486.3 277.8)"/></g><g fill="none" stroke="#8c8c8c" stroke-width="0.9" opacity="0.83"><ellipse cx="168.6" cy="284.9" rx="3.7" ry="1.4" transform="rotate(171 168.6 284.9)"/><ellipse cx="173.7" cy="288.4" rx="3.8" ry="1.5" transform="rotate(171 173.7 288.4)"/><ellipse cx="179.0" cy="292.1" rx="3.9" ry="1.6" transform="rotate(171 179.0 292.1)"/><ellipse cx="184.6" cy="295.9" rx="3.9" ry="1.7" transform="rotate(171 184.6 295.9)"/><ellipse cx="186.5" cy="284.9" rx="3.7" ry="1.5" transform="rotate(171 186.5 284.9)"/><ellipse cx="191.9" cy="288.4" rx="3.7" ry="1.5" transform="rotate(171 191.9 288.4)"/><ellipse cx="197.6" cy="292.0" rx="3.8" ry="1.6" transform="rotate(171 197.6 292.0)"/><ellipse cx="204.3" cy="284.9" rx="3.6" ry="1.5" transform="rotate(172 204.3 284.9)"/><ellipse cx="210.1" cy="288.4" rx="3.7" ry="1.6" transform="rotate(172 210.1 288.4)"/><ellipse cx="216.2" cy="292.0" rx="3.8" ry="1.6" transform="rotate(172 216.2 292.0)"/><ellipse cx="216.2" cy="281.5" rx="3.5" ry="1.5" transform="rotate(173 216.2 281.5)"/><ellipse cx="222.2" cy="284.8" rx="3.6" ry="1.5" transform="rotate(173 222.2 284.8)"/><ellipse cx="228.4" cy="288.3" rx="3.6" ry="1.6" transform="rotate(173 228.4 288.3)"/><ellipse cx="234.9" cy="292.0" rx="3.7" ry="1.7" transform="rotate(173 234.9 292.0)"/><ellipse cx="233.7" cy="281.5" rx="3.5" ry="1.5" transform="rotate(173 233.7 281.5)"/><ellipse cx="240.0" cy="284.8" rx="3.5" ry="1.5" transform="rotate(173 240.0 284.8)"/><ellipse cx="246.6" cy="288.3" rx="3.6" ry="1.6" transform="rotate(174 246.6 288.3)"/><ellipse cx="253.5" cy="292.0" rx="3.7" ry="1.7" transform="rotate(174 253.5 292.0)"/><ellipse cx="251.2" cy="281.4" rx="3.4" ry="1.5" transform="rotate(174 251.2 281.4)"/><ellipse cx="257.9" cy="284.8" rx="3.5" ry="1.6" transform="rotate(174 257.9 284.8)"/><ellipse cx="264.9" cy="288.3" rx="3.6" ry="1.6" transform="rotate(174 264.9 288.3)"/><ellipse cx="272.2" cy="291.9" rx="3.6" ry="1.7" transform="rotate(175 272.2 291.9)"/><ellipse cx="268.7" cy="281.4" rx="3.4" ry="1.5" transform="rotate(175 268.7 281.4)"/><ellipse cx="275.8" cy="284.8" rx="3.5" ry="1.6" transform="rotate(175 275.8 284.8)"/><ellipse cx="283.1" cy="288.2" rx="3.5" ry="1.6" transform="rotate(175 283.1 288.2)"/><ellipse cx="290.8" cy="291.9" rx="3.6" ry="1.7" transform="rotate(176 290.8 291.9)"/><ellipse cx="286.3" cy="281.4" rx="3.4" ry="1.5" transform="rotate(176 286.3 281.4)"/><ellipse cx="293.7" cy="284.7" rx="3.5" ry="1.6"/><ellipse cx="301.4" cy="288.2" rx="3.5" ry="1.7"/><ellipse cx="309.5" cy="291.9" rx="3.6" ry="1.7"/><ellipse cx="303.8" cy="281.3" rx="3.4" ry="1.5"/><ellipse cx="311.6" cy="284.7" rx="3.4" ry="1.6"/><ellipse cx="319.7" cy="288.2" rx="3.5" ry="1.7"/><ellipse cx="328.2" cy="291.8" rx="3.6" ry="1.7"/><ellipse cx="321.4" cy="281.3" rx="3.4" ry="1.5"/><ellipse cx="329.5" cy="284.7" rx="3.4" ry="1.6"/><ellipse cx="338.0" cy="288.2" rx="3.5" ry="1.7"/><ellipse cx="346.9" cy="291.8" rx="3.6" ry="1.7"/><ellipse cx="339.0" cy="281.3" rx="3.3" ry="1.5"/><ellipse cx="347.5" cy="284.6" rx="3.4" ry="1.6"/><ellipse cx="356.4" cy="288.1" rx="3.5" ry="1.7"/><ellipse cx="365.6" cy="291.8" rx="3.6" ry="1.7"/><ellipse cx="356.5" cy="281.2" rx="3.3" ry="1.5"/><ellipse cx="365.4" cy="284.6" rx="3.4" ry="1.6"/><ellipse cx="374.7" cy="288.1" rx="3.5" ry="1.7"/><ellipse cx="384.4" cy="291.7" rx="3.6" ry="1.7"/><ellipse cx="374.1" cy="281.2" rx="3.3" ry="1.5"/><ellipse cx="383.4" cy="284.6" rx="3.4" ry="1.6"/><ellipse cx="393.0" cy="288.1" rx="3.5" ry="1.7"/><ellipse cx="403.1" cy="291.7" rx="3.6" ry="1.7"/><ellipse cx="391.8" cy="281.2" rx="3.4" ry="1.5"/><ellipse cx="401.4" cy="284.5" rx="3.4" ry="1.6"/><ellipse cx="411.4" cy="288.0" rx="3.5" ry="1.7"/><ellipse cx="421.9" cy="291.7" rx="3.6" ry="1.7"/><ellipse cx="409.4" cy="281.1" rx="3.4" ry="1.5"/><ellipse cx="419.4" cy="284.5" rx="3.5" ry="1.6"/><ellipse cx="429.8" cy="288.0" rx="3.5" ry="1.7"/><ellipse cx="440.7" cy="291.6" rx="3.6" ry="1.7" transform="rotate(-175 440.7 291.6)"/><ellipse cx="427.0" cy="281.1" rx="3.4" ry="1.5"/><ellipse cx="437.4" cy="284.5" rx="3.5" ry="1.6" transform="rotate(-176 437.4 284.5)"/><ellipse cx="448.2" cy="288.0" rx="3.6" ry="1.6" transform="rotate(-175 448.2 288.0)"/><ellipse cx="459.5" cy="291.6" rx="3.7" ry="1.7" transform="rotate(-174 459.5 291.6)"/><ellipse cx="444.7" cy="281.1" rx="3.4" ry="1.5" transform="rotate(-176 444.7 281.1)"/><ellipse cx="455.4" cy="284.4" rx="3.5" ry="1.6" transform="rotate(-175 455.4 284.4)"/><ellipse cx="466.6" cy="287.9" rx="3.6" ry="1.6" transform="rotate(-174 466.6 287.9)"/><ellipse cx="478.3" cy="291.6" rx="3.7" ry="1.7" transform="rotate(-174 478.3 291.6)"/><ellipse cx="462.3" cy="281.0" rx="3.5" ry="1.5" transform="rotate(-175 462.3 281.0)"/><ellipse cx="473.4" cy="284.4" rx="3.6" ry="1.6" transform="rotate(-174 473.4 284.4)"/><ellipse cx="485.0" cy="287.9" rx="3.7" ry="1.6" transform="rotate(-173 485.0 287.9)"/><ellipse cx="497.1" cy="291.6" rx="3.8" ry="1.7" transform="rotate(-173 497.1 291.6)"/><ellipse cx="480.0" cy="281.0" rx="3.5" ry="1.5" transform="rotate(-174 480.0 281.0)"/><ellipse cx="491.5" cy="284.4" rx="3.6" ry="1.5" transform="rotate(-173 491.5 284.4)"/><ellipse cx="503.4" cy="287.9" rx="3.7" ry="1.6" transform="rotate(-173 503.4 287.9)"/><ellipse cx="515.9" cy="291.5" rx="3.8" ry="1.6" transform="rotate(-172 515.9 291.5)"/><ellipse cx="497.7" cy="281.0" rx="3.5" ry="1.5" transform="rotate(-173 497.7 281.0)"/><ellipse cx="509.5" cy="284.3" rx="3.7" ry="1.5" transform="rotate(-173 509.5 284.3)"/><ellipse cx="521.9" cy="287.8" rx="3.8" ry="1.6" transform="rotate(-172 521.9 287.8)"/><ellipse cx="534.8" cy="291.5" rx="3.9" ry="1.6" transform="rotate(-171 534.8 291.5)"/></g><g fill="none" stroke="#8c8c8c" stroke-width="0.9" opacity="1.00"><ellipse cx="190.4" cy="299.8" rx="4.0" ry="1.8" transform="rotate(171 190.4 299.8)"/><ellipse cx="196.4" cy="304.0" rx="4.1" ry="1.8" transform="rotate(171 196.4 304.0)"/><ellipse cx="202.8" cy="308.3" rx="4.2" ry="1.9" transform="rotate(171 202.8 308.3)"/><ellipse cx="209.4" cy="312.9" rx="4.2" ry="2.0" transform="rotate(171 209.4 312.9)"/><ellipse cx="216.4" cy="317.7" rx="4.3" ry="2.2" transform="rotate(171 216.4 317.7)"/><ellipse cx="223.7" cy="322.7" rx="4.4" ry="2.3" transform="rotate(171 223.7 322.7)"/><ellipse cx="231.4" cy="328.0" rx="4.5" ry="2.4" transform="rotate(171 231.4 328.0)"/><ellipse cx="239.5" cy="333.6" rx="4.6" ry="2.5" transform="rotate(171 239.5 333.6)"/><ellipse cx="248.1" cy="339.4" rx="4.7" ry="2.7" transform="rotate(171 248.1 339.4)"/><ellipse cx="257.1" cy="345.6" rx="4.8" ry="2.9" transform="rotate(171 257.1 345.6)"/><ellipse cx="266.7" cy="352.2" rx="4.9" ry="3.1" transform="rotate(171 266.7 352.2)"/><ellipse cx="276.8" cy="359.1" rx="5.0" ry="3.3" transform="rotate(172 276.8 359.1)"/><ellipse cx="287.6" cy="366.5" rx="5.2" ry="3.5" transform="rotate(172 287.6 366.5)"/><ellipse cx="299.0" cy="374.4" rx="5.3" ry="3.7" transform="rotate(173 299.0 374.4)"/><ellipse cx="311.2" cy="382.7" rx="5.5" ry="4.0" transform="rotate(174 311.2 382.7)"/><ellipse cx="203.6" cy="295.8" rx="3.9" ry="1.7" transform="rotate(171 203.6 295.8)"/><ellipse cx="209.8" cy="299.8" rx="3.9" ry="1.8" transform="rotate(171 209.8 299.8)"/><ellipse cx="216.3" cy="304.0" rx="4.0" ry="1.9" transform="rotate(171 216.3 304.0)"/><ellipse cx="223.1" cy="308.3" rx="4.1" ry="2.0" transform="rotate(171 223.1 308.3)"/><ellipse cx="230.2" cy="312.9" rx="4.2" ry="2.1" transform="rotate(172 230.2 312.9)"/><ellipse cx="237.7" cy="317.7" rx="4.3" ry="2.2" transform="rotate(172 237.7 317.7)"/><ellipse cx="245.6" cy="322.7" rx="4.3" ry="2.3" transform="rotate(172 245.6 322.7)"/><ellipse cx="253.9" cy="328.0" rx="4.4" ry="2.4" transform="rotate(172 253.9 328.0)"/><ellipse cx="262.6" cy="333.5" rx="4.5" ry="2.6" transform="rotate(172 262.6 333.5)"/><ellipse cx="271.8" cy="339.4" rx="4.6" ry="2.7" transform="rotate(173 271.8 339.4)"/><ellipse cx="281.5" cy="345.6" rx="4.7" ry="2.9" transform="rotate(173 281.5 345.6)"/><ellipse cx="291.8" cy="352.2" rx="4.9" ry="3.1" transform="rotate(173 291.8 352.2)"/><ellipse cx="302.7" cy="359.1" rx="5.0" ry="3.3" transform="rotate(174 302.7 359.1)"/><ellipse cx="314.2" cy="366.5" rx="5.1" ry="3.5" transform="rotate(175 314.2 366.5)"/><ellipse cx="326.5" cy="374.4" rx="5.3" ry="3.8"/><ellipse cx="339.6" cy="382.7" rx="5.4" ry="4.0"/><ellipse cx="222.6" cy="295.8" rx="3.8" ry="1.7" transform="rotate(172 222.6 295.8)"/><ellipse cx="229.2" cy="299.8" rx="3.9" ry="1.8" transform="rotate(172 229.2 299.8)"/><ellipse cx="236.2" cy="303.9" rx="4.0" ry="1.9" transform="rotate(172 236.2 303.9)"/><ellipse cx="243.5" cy="308.3" rx="4.0" ry="2.0" transform="rotate(172 243.5 308.3)"/><ellipse cx="251.1" cy="312.8" rx="4.1" ry="2.1" transform="rotate(173 251.1 312.8)"/><ellipse cx="259.1" cy="317.6" rx="4.2" ry="2.2" transform="rotate(173 259.1 317.6)"/><ellipse cx="267.5" cy="322.7" rx="4.3" ry="2.3" transform="rotate(173 267.5 322.7)"/><ellipse cx="276.4" cy="328.0" rx="4.4" ry="2.5" transform="rotate(173 276.4 328.0)"/><ellipse cx="285.7" cy="333.5" rx="4.5" ry="2.6" transform="rotate(174 285.7 333.5)"/><ellipse cx="295.5" cy="339.4" rx="4.6" ry="2.8" transform="rotate(174 295.5 339.4)"/><ellipse cx="305.9" cy="345.6" rx="4.7" ry="3.0" transform="rotate(175 305.9 345.6)"/><ellipse cx="316.9" cy="352.2" rx="4.8" ry="3.1" transform="rotate(176 316.9 352.2)"/><ellipse cx="328.6" cy="359.1" rx="4.9" ry="3.3"/><ellipse cx="340.9" cy="366.5" rx="5.1" ry="3.6"/><ellipse cx="354.1" cy="374.4" rx="5.2" ry="3.8"/><ellipse cx="368.1" cy="382.7" rx="5.4" ry="4.0"/><ellipse cx="241.6" cy="295.8" rx="3.8" ry="1.7" transform="rotate(173 241.6 295.8)"/><ellipse cx="248.7" cy="299.8" rx="3.8" ry="1.8" transform="rotate(173 248.7 299.8)"/><ellipse cx="256.1" cy="303.9" rx="3.9" ry="1.9" transform="rotate(173 256.1 303.9)"/><ellipse cx="263.9" cy="308.3" rx="4.0" ry="2.0" transform="rotate(174 263.9 308.3)"/><ellipse cx="272.0" cy="312.8" rx="4.1" ry="2.1" transform="rotate(174 272.0 312.8)"/><ellipse cx="280.5" cy="317.6" rx="4.2" ry="2.2" transform="rotate(174 280.5 317.6)"/><ellipse cx="289.5" cy="322.6" rx="4.2" ry="2.4" transform="rotate(175 289.5 322.6)"/><ellipse cx="298.9" cy="327.9" rx="4.3" ry="2.5" transform="rotate(175 298.9 327.9)"/><ellipse cx="308.8" cy="333.5" rx="4.4" ry="2.7" transform="rotate(176 308.8 333.5)"/><ellipse cx="319.3" cy="339.4" rx="4.5" ry="2.8"/><ellipse cx="330.4" cy="345.6" rx="4.7" ry="3.0"/><ellipse cx="342.1" cy="352.2" rx="4.8" ry="3.2"/><ellipse cx="354.5" cy="359.1" rx="4.9" ry="3.4"/><ellipse cx="367.6" cy="366.5" rx="5.1" ry="3.6"/><ellipse cx="381.6" cy="374.4" rx="5.3" ry="3.8"/><ellipse cx="396.6" cy="382.7" rx="5.4" ry="4.0" transform="rotate(-176 396.6 382.7)"/><ellipse cx="260.7" cy="295.8" rx="3.7" ry="1.8" transform="rotate(174 260.7 295.8)"/><ellipse cx="268.2" cy="299.7" rx="3.8" ry="1.9" transform="rotate(174 268.2 299.7)"/><ellipse cx="276.1" cy="303.9" rx="3.9" ry="1.9" transform="rotate(174 276.1 303.9)"/><ellipse cx="284.3" cy="308.2" rx="4.0" ry="2.0" transform="rotate(175 284.3 308.2)"/><ellipse cx="292.9" cy="312.8" rx="4.0" ry="2.2" transform="rotate(175 292.9 312.8)"/><ellipse cx="301.9" cy="317.6" rx="4.1" ry="2.3" transform="rotate(176 301.9 317.6)"/><ellipse cx="311.4" cy="322.6" rx="4.2" ry="2.4"/><ellipse cx="321.4" cy="327.9" rx="4.3" ry="2.5"/><ellipse cx="332.0" cy="333.5" rx="4.4" ry="2.7"/><ellipse cx="343.1" cy="339.4" rx="4.5" ry="2.8"/><ellipse cx="354.8" cy="345.6" rx="4.7" ry="3.0"/><ellipse cx="367.2" cy="352.1" rx="4.8" ry="3.2"/><ellipse cx="380.4" cy="359.1" rx="4.9" ry="3.3"/><ellipse cx="394.4" cy="366.5" rx="5.1" ry="3.5"/><ellipse cx="409.2" cy="374.4" rx="5.3" ry="3.8" transform="rotate(-175 409.2 374.4)"/><ellipse cx="425.1" cy="382.7" rx="5.5" ry="4.0" transform="rotate(-172 425.1 382.7)"/><ellipse cx="279.8" cy="295.7" rx="3.7" ry="1.8" transform="rotate(175 279.8 295.7)"/><ellipse cx="287.7" cy="299.7" rx="3.8" ry="1.9" transform="rotate(175 287.7 299.7)"/><ellipse cx="296.0" cy="303.9" rx="3.8" ry="2.0" transform="rotate(176 296.0 303.9)"/><ellipse cx="304.7" cy="308.2" rx="3.9" ry="2.1"/><ellipse cx="313.8" cy="312.8" rx="4.0" ry="2.2"/><ellipse cx="323.4" cy="317.6" rx="4.1" ry="2.3"/><ellipse cx="333.4" cy="322.6" rx="4.2" ry="2.4"/><ellipse cx="344.0" cy="327.9" rx="4.3" ry="2.5"/><ellipse cx="355.2" cy="333.5" rx="4.4" ry="2.7"/><ellipse cx="366.9" cy="339.3" rx="4.5" ry="2.8"/><ellipse cx="379.3" cy="345.6" rx="4.7" ry="3.0"/><ellipse cx="392.5" cy="352.1" rx="4.8" ry="3.2"/><ellipse cx="406.4" cy="359.1" rx="5.0" ry="3.3" transform="rotate(-175 406.4 359.1)"/><ellipse cx="421.1" cy="366.5" rx="5.2" ry="3.5" transform="rotate(-174 421.1 366.5)"/><ellipse cx="436.9" cy="374.4" rx="5.4" ry="3.7" transform="rotate(-172 436.9 374.4)"/><ellipse cx="453.6" cy="382.8" rx="5.6" ry="3.9" transform="rotate(-170 453.6 382.8)"/><ellipse cx="298.8" cy="295.7" rx="3.7" ry="1.8"/><ellipse cx="307.2" cy="299.7" rx="3.7" ry="1.9"/><ellipse cx="316.0" cy="303.8" rx="3.8" ry="2.0"/><ellipse cx="325.1" cy="308.2" rx="3.9" ry="2.1"/><ellipse cx="334.8" cy="312.8" rx="4.0" ry="2.2"/><ellipse cx="344.8" cy="317.5" rx="4.1" ry="2.3"/><ellipse cx="355.4" cy="322.6" rx="4.2" ry="2.4"/><ellipse cx="366.6" cy="327.9" rx="4.3" ry="2.5"/><ellipse cx="378.3" cy="333.4" rx="4.4" ry="2.7"/><ellipse cx="390.7" cy="339.3" rx="4.5" ry="2.8"/><ellipse cx="403.8" cy="345.6" rx="4.7" ry="3.0"/><ellipse cx="417.7" cy="352.1" rx="4.9" ry="3.1" transform="rotate(-175 417.7 352.1)"/><ellipse cx="432.4" cy="359.1" rx="5.0" ry="3.3" transform="rotate(-173 432.4 359.1)"/><ellipse cx="447.9" cy="366.5" rx="5.2" ry="3.5" transform="rotate(-171 447.9 366.5)"/><ellipse cx="464.5" cy="374.4" rx="5.5" ry="3.6" transform="rotate(-169 464.5 374.4)"/><ellipse cx="482.2" cy="382.8" rx="5.7" ry="3.8" transform="rotate(-167 482.2 382.8)"/><ellipse cx="317.9" cy="295.7" rx="3.7" ry="1.8"/><ellipse cx="326.7" cy="299.6" rx="3.7" ry="1.9"/><ellipse cx="335.9" cy="303.8" rx="3.8" ry="2.0"/><ellipse cx="345.6" cy="308.2" rx="3.9" ry="2.1"/><ellipse cx="355.7" cy="312.7" rx="4.0" ry="2.2"/><ellipse cx="366.3" cy="317.5" rx="4.1" ry="2.3"/><ellipse cx="377.5" cy="322.6" rx="4.2" ry="2.4"/><ellipse cx="389.2" cy="327.9" rx="4.3" ry="2.5"/><ellipse cx="401.6" cy="333.4" rx="4.4" ry="2.7"/><ellipse cx="414.6" cy="339.3" rx="4.6" ry="2.8" transform="rotate(-175 414.6 339.3)"/><ellipse cx="428.4" cy="345.5" rx="4.7" ry="2.9" transform="rotate(-174 428.4 345.5)"/><ellipse cx="442.9" cy="352.1" rx="4.9" ry="3.1" transform="rotate(-173 442.9 352.1)"/><ellipse cx="458.4" cy="359.1" rx="5.1" ry="3.2" transform="rotate(-171 458.4 359.1)"/><ellipse cx="474.8" cy="366.5" rx="5.3" ry="3.4" transform="rotate(-169 474.8 366.5)"/><ellipse cx="492.2" cy="374.4" rx="5.6" ry="3.6" transform="rotate(-167 492.2 374.4)"/><ellipse cx="510.8" cy="382.8" rx="5.9" ry="3.7" transform="rotate(-166 510.8 382.8)"/><ellipse cx="337.0" cy="295.6" rx="3.6" ry="1.8"/><ellipse cx="346.3" cy="299.6" rx="3.7" ry="1.9"/><ellipse cx="355.9" cy="303.8" rx="3.8" ry="2.0"/><ellipse cx="366.1" cy="308.1" rx="3.9" ry="2.1"/><ellipse cx="376.7" cy="312.7" rx="4.0" ry="2.2"/><ellipse cx="387.8" cy="317.5" rx="4.1" ry="2.3"/><ellipse cx="399.5" cy="322.5" rx="4.2" ry="2.4"/><ellipse cx="411.8" cy="327.8" rx="4.3" ry="2.5" transform="rotate(-176 411.8 327.8)"/><ellipse cx="424.8" cy="333.4" rx="4.5" ry="2.6" transform="rotate(-175 424.8 333.4)"/><ellipse cx="438.5" cy="339.3" rx="4.6" ry="2.8" transform="rotate(-174 438.5 339.3)"/><ellipse cx="452.9" cy="345.5" rx="4.8" ry="2.9" transform="rotate(-172 452.9 345.5)"/><ellipse cx="468.2" cy="352.1" rx="5.0" ry="3.0" transform="rotate(-171 468.2 352.1)"/><ellipse cx="484.4" cy="359.1" rx="5.2" ry="3.2" transform="rotate(-169 484.4 359.1)"/><ellipse cx="501.6" cy="366.5" rx="5.5" ry="3.3" transform="rotate(-167 501.6 366.5)"/><ellipse cx="519.9" cy="374.4" rx="5.7" ry="3.5" transform="rotate(-166 519.9 374.4)"/><ellipse cx="539.5" cy="382.8" rx="6.1" ry="3.6" transform="rotate(-164 539.5 382.8)"/><ellipse cx="356.2" cy="295.6" rx="3.6" ry="1.8"/><ellipse cx="365.8" cy="299.6" rx="3.7" ry="1.9"/><ellipse cx="376.0" cy="303.7" rx="3.8" ry="2.0"/><ellipse cx="386.6" cy="308.1" rx="3.9" ry="2.1"/><ellipse cx="397.7" cy="312.7" rx="4.0" ry="2.2"/><ellipse cx="409.3" cy="317.5" rx="4.1" ry="2.3"/><ellipse cx="421.6" cy="322.5" rx="4.2" ry="2.4" transform="rotate(-175 421.6 322.5)"/><ellipse cx="434.5" cy="327.8" rx="4.4" ry="2.5" transform="rotate(-174 434.5 327.8)"/><ellipse cx="448.0" cy="333.4" rx="4.5" ry="2.6" transform="rotate(-173 448.0 333.4)"/><ellipse cx="462.4" cy="339.3" rx="4.7" ry="2.7" transform="rotate(-172 462.4 339.3)"/><ellipse cx="477.5" cy="345.5" rx="4.9" ry="2.9" transform="rotate(-170 477.5 345.5)"/><ellipse cx="493.5" cy="352.1" rx="5.1" ry="3.0" transform="rotate(-169 493.5 352.1)"/><ellipse cx="510.5" cy="359.1" rx="5.3" ry="3.1" transform="rotate(-168 510.5 359.1)"/><ellipse cx="528.5" cy="366.5" rx="5.6" ry="3.3" transform="rotate(-166 528.5 366.5)"/><ellipse cx="547.7" cy="374.4" rx="5.9" ry="3.4" transform="rotate(-165 547.7 374.4)"/><ellipse cx="375.3" cy="295.6" rx="3.6" ry="1.8"/><ellipse cx="385.4" cy="299.6" rx="3.7" ry="1.9"/><ellipse cx="396.0" cy="303.7" rx="3.8" ry="2.0"/><ellipse cx="407.1" cy="308.1" rx="3.9" ry="2.1"/><ellipse cx="418.7" cy="312.7" rx="4.0" ry="2.2" transform="rotate(-176 418.7 312.7)"/><ellipse cx="430.9" cy="317.4" rx="4.2" ry="2.3" transform="rotate(-175 430.9 317.4)"/><ellipse cx="443.7" cy="322.5" rx="4.3" ry="2.4" transform="rotate(-174 443.7 322.5)"/><ellipse cx="457.1" cy="327.8" rx="4.4" ry="2.5" transform="rotate(-173 457.1 327.8)"/><ellipse cx="471.3" cy="333.4" rx="4.6" ry="2.6" transform="rotate(-172 471.3 333.4)"/><ellipse cx="486.3" cy="339.3" rx="4.8" ry="2.7" transform="rotate(-170 486.3 339.3)"/><ellipse cx="502.1" cy="345.5" rx="5.0" ry="2.8" transform="rotate(-169 502.1 345.5)"/><ellipse cx="518.9" cy="352.1" rx="5.2" ry="2.9" transform="rotate(-168 518.9 352.1)"/><ellipse cx="536.6" cy="359.1" rx="5.5" ry="3.1" transform="rotate(-166 536.6 359.1)"/><ellipse cx="555.4" cy="366.5" rx="5.8" ry="3.2" transform="rotate(-165 555.4 366.5)"/><ellipse cx="394.5" cy="295.5" rx="3.7" ry="1.8"/><ellipse cx="405.0" cy="299.5" rx="3.7" ry="1.9"/><ellipse cx="416.0" cy="303.7" rx="3.8" ry="2.0"/><ellipse cx="427.6" cy="308.1" rx="4.0" ry="2.1" transform="rotate(-176 427.6 308.1)"/><ellipse cx="439.7" cy="312.6" rx="4.1" ry="2.2" transform="rotate(-175 439.7 312.6)"/><ellipse cx="452.4" cy="317.4" rx="4.2" ry="2.2" transform="rotate(-174 452.4 317.4)"/><ellipse cx="465.8" cy="322.5" rx="4.4" ry="2.3" transform="rotate(-173 465.8 322.5)"/><ellipse cx="479.8" cy="327.8" rx="4.5" ry="2.4" transform="rotate(-171 479.8 327.8)"/><ellipse cx="494.6" cy="333.4" rx="4.7" ry="2.5" transform="rotate(-170 494.6 333.4)"/><ellipse cx="510.2" cy="339.3" rx="4.9" ry="2.6" transform="rotate(-169 510.2 339.3)"/><ellipse cx="526.8" cy="345.5" rx="5.1" ry="2.8" transform="rotate(-168 526.8 345.5)"/><ellipse cx="544.2" cy="352.1" rx="5.3" ry="2.9" transform="rotate(-167 544.2 352.1)"/><ellipse cx="562.7" cy="359.1" rx="5.6" ry="3.0" transform="rotate(-165 562.7 359.1)"/><ellipse cx="413.6" cy="295.5" rx="3.7" ry="1.8"/><ellipse cx="424.6" cy="299.5" rx="3.8" ry="1.9"/><ellipse cx="436.1" cy="303.7" rx="3.9" ry="2.0" transform="rotate(-175 436.1 303.7)"/><ellipse cx="448.1" cy="308.0" rx="4.0" ry="2.0" transform="rotate(-174 448.1 308.0)"/><ellipse cx="460.7" cy="312.6" rx="4.1" ry="2.1" transform="rotate(-173 460.7 312.6)"/><ellipse cx="474.0" cy="317.4" rx="4.3" ry="2.2" transform="rotate(-172 474.0 317.4)"/><ellipse cx="487.9" cy="322.4" rx="4.4" ry="2.3" transform="rotate(-171 487.9 322.4)"/><ellipse cx="502.5" cy="327.8" rx="4.6" ry="2.4" transform="rotate(-170 502.5 327.8)"/><ellipse cx="517.9" cy="333.3" rx="4.8" ry="2.5" transform="rotate(-169 517.9 333.3)"/><ellipse cx="534.2" cy="339.2" rx="5.0" ry="2.6" transform="rotate(-168 534.2 339.2)"/><ellipse cx="551.4" cy="345.5" rx="5.2" ry="2.7" transform="rotate(-167 551.4 345.5)"/><ellipse cx="569.6" cy="352.1" rx="5.5" ry="2.8" transform="rotate(-166 569.6 352.1)"/><ellipse cx="432.8" cy="295.5" rx="3.7" ry="1.8" transform="rotate(-176 432.8 295.5)"/><ellipse cx="444.2" cy="299.5" rx="3.8" ry="1.9" transform="rotate(-175 444.2 299.5)"/><ellipse cx="456.2" cy="303.6" rx="3.9" ry="1.9" transform="rotate(-174 456.2 303.6)"/><ellipse cx="468.7" cy="308.0" rx="4.0" ry="2.0" transform="rotate(-173 468.7 308.0)"/><ellipse cx="481.8" cy="312.6" rx="4.2" ry="2.1" transform="rotate(-172 481.8 312.6)"/><ellipse cx="495.6" cy="317.4" rx="4.3" ry="2.2" transform="rotate(-171 495.6 317.4)"/><ellipse cx="510.0" cy="322.4" rx="4.5" ry="2.3" transform="rotate(-170 510.0 322.4)"/><ellipse cx="525.3" cy="327.7" rx="4.7" ry="2.4" transform="rotate(-169 525.3 327.7)"/><ellipse cx="541.3" cy="333.3" rx="4.9" ry="2.4" transform="rotate(-168 541.3 333.3)"/><ellipse cx="558.2" cy="339.2" rx="5.1" ry="2.5" transform="rotate(-167 558.2 339.2)"/><ellipse cx="576.1" cy="345.5" rx="5.4" ry="2.6" transform="rotate(-166 576.1 345.5)"/><ellipse cx="452.0" cy="295.5" rx="3.7" ry="1.8" transform="rotate(-175 452.0 295.5)"/><ellipse cx="463.9" cy="299.4" rx="3.9" ry="1.9" transform="rotate(-174 463.9 299.4)"/><ellipse cx="476.3" cy="303.6" rx="4.0" ry="1.9" transform="rotate(-173 476.3 303.6)"/><ellipse cx="489.3" cy="308.0" rx="4.1" ry="2.0" transform="rotate(-172 489.3 308.0)"/><ellipse cx="502.9" cy="312.6" rx="4.3" ry="2.1" transform="rotate(-171 502.9 312.6)"/><ellipse cx="517.2" cy="317.4" rx="4.4" ry="2.1" transform="rotate(-170 517.2 317.4)"/><ellipse cx="532.2" cy="322.4" rx="4.6" ry="2.2" transform="rotate(-169 532.2 322.4)"/><ellipse cx="548.0" cy="327.7" rx="4.8" ry="2.3" transform="rotate(-168 548.0 327.7)"/><ellipse cx="564.7" cy="333.3" rx="5.0" ry="2.4" transform="rotate(-167 564.7 333.3)"/><ellipse cx="582.2" cy="339.2" rx="5.2" ry="2.5" transform="rotate(-167 582.2 339.2)"/><ellipse cx="471.2" cy="295.4" rx="3.8" ry="1.8" transform="rotate(-174 471.2 295.4)"/><ellipse cx="483.5" cy="299.4" rx="3.9" ry="1.8" transform="rotate(-173 483.5 299.4)"/><ellipse cx="496.4" cy="303.6" rx="4.0" ry="1.9" transform="rotate(-172 496.4 303.6)"/><ellipse cx="509.8" cy="307.9" rx="4.2" ry="2.0" transform="rotate(-171 509.8 307.9)"/><ellipse cx="524.0" cy="312.5" rx="4.3" ry="2.0" transform="rotate(-170 524.0 312.5)"/><ellipse cx="538.8" cy="317.3" rx="4.5" ry="2.1" transform="rotate(-169 538.8 317.3)"/><ellipse cx="554.4" cy="322.4" rx="4.7" ry="2.2" transform="rotate(-169 554.4 322.4)"/><ellipse cx="570.8" cy="327.7" rx="4.9" ry="2.3" transform="rotate(-168 570.8 327.7)"/><ellipse cx="588.0" cy="333.3" rx="5.1" ry="2.3" transform="rotate(-167 588.0 333.3)"/><ellipse cx="490.4" cy="295.4" rx="3.8" ry="1.7" transform="rotate(-173 490.4 295.4)"/><ellipse cx="503.2" cy="299.4" rx="4.0" ry="1.8" transform="rotate(-172 503.2 299.4)"/><ellipse cx="516.5" cy="303.6" rx="4.1" ry="1.9" transform="rotate(-171 516.5 303.6)"/><ellipse cx="530.5" cy="307.9" rx="4.3" ry="1.9" transform="rotate(-170 530.5 307.9)"/><ellipse cx="545.1" cy="312.5" rx="4.4" ry="2.0" transform="rotate(-170 545.1 312.5)"/><ellipse cx="560.4" cy="317.3" rx="4.6" ry="2.1" transform="rotate(-169 560.4 317.3)"/><ellipse cx="576.6" cy="322.4" rx="4.8" ry="2.1" transform="rotate(-168 576.6 322.4)"/><ellipse cx="593.6" cy="327.7" rx="5.0" ry="2.2" transform="rotate(-167 593.6 327.7)"/><ellipse cx="509.7" cy="295.4" rx="3.9" ry="1.7" transform="rotate(-172 509.7 295.4)"/><ellipse cx="522.9" cy="299.4" rx="4.0" ry="1.8" transform="rotate(-171 522.9 299.4)"/><ellipse cx="536.6" cy="303.5" rx="4.2" ry="1.8" transform="rotate(-171 536.6 303.5)"/><ellipse cx="551.1" cy="307.9" rx="4.3" ry="1.9" transform="rotate(-170 551.1 307.9)"/><ellipse cx="566.2" cy="312.5" rx="4.5" ry="2.0" transform="rotate(-169 566.2 312.5)"/><ellipse cx="582.1" cy="317.3" rx="4.7" ry="2.0" transform="rotate(-168 582.1 317.3)"/><ellipse cx="598.8" cy="322.3" rx="4.9" ry="2.1" transform="rotate(-167 598.8 322.3)"/><ellipse cx="528.9" cy="295.3" rx="4.0" ry="1.7" transform="rotate(-171 528.9 295.3)"/><ellipse cx="542.6" cy="299.3" rx="4.1" ry="1.7" transform="rotate(-171 542.6 299.3)"/><ellipse cx="556.8" cy="303.5" rx="4.3" ry="1.8" transform="rotate(-170 556.8 303.5)"/><ellipse cx="571.7" cy="307.9" rx="4.4" ry="1.9" transform="rotate(-169 571.7 307.9)"/><ellipse cx="587.4" cy="312.5" rx="4.6" ry="1.9" transform="rotate(-168 587.4 312.5)"/><ellipse cx="603.8" cy="317.3" rx="4.8" ry="2.0" transform="rotate(-168 603.8 317.3)"/><ellipse cx="548.2" cy="295.3" rx="4.0" ry="1.7" transform="rotate(-171 548.2 295.3)"/><ellipse cx="562.3" cy="299.3" rx="4.2" ry="1.7" transform="rotate(-170 562.3 299.3)"/><ellipse cx="577.0" cy="303.5" rx="4.3" ry="1.8" transform="rotate(-169 577.0 303.5)"/><ellipse cx="592.4" cy="307.8" rx="4.5" ry="1.8" transform="rotate(-169 592.4 307.8)"/><ellipse cx="608.5" cy="312.4" rx="4.7" ry="1.9" transform="rotate(-168 608.5 312.4)"/></g><path d="M146.2,275.3L451.6,492.8M203.3,261.3L516.8,422.6M251.3,249.6L561.6,374.4M292.2,239.5L594.2,339.2M327.4,230.9L619.1,312.4M146.2,275.3L327.4,230.9M169.7,292.1L357.7,239.4M199.0,312.9L392.9,249.2M236.2,339.4L434.3,260.8M285.3,374.4L483.9,274.6M352.8,422.4L544.2,291.5M451.6,492.8L619.1,312.4" stroke="#000" stroke-width="1.0" fill="none" shape-rendering="crispEdges"/></g><polygon points="292.4,237.1 298.9,228.7 309.2,223.1 355.7,223.1 355.7,242.7 336.1,250.1" fill="#f2c530" stroke="#2a2a2a" stroke-width="0.7" stroke-linejoin="round" /><polygon points="292.4,237.1 336.1,250.1 336.1,298.4 312.9,286.4 292.4,271.5" fill="#f2c530" stroke="#2a2a2a" stroke-width="0.7" stroke-linejoin="round" /><polygon points="336.1,250.1 355.7,242.7 355.7,292.9 336.1,298.4" fill="#f7d24a" stroke="#2a2a2a" stroke-width="0.7" stroke-linejoin="round" /><polygon points="292.4,252.0 336.1,266.3 336.1,271.5 292.4,257.5" fill="#c81e14" stroke="none" stroke-width="0.7" stroke-linejoin="round" /><polygon points="336.1,266.3 355.7,261.3 355.7,266.3 336.1,271.5" fill="#d42a1c" stroke="none" stroke-width="0.7" stroke-linejoin="round" /><ellipse cx="312.9" cy="228.7" rx="4.1" ry="1.7" fill="#f7d24a" stroke="#1c1c1c" stroke-width="0.6" /><ellipse cx="322.2" cy="231.5" rx="4.1" ry="1.7" fill="#f7d24a" stroke="#1c1c1c" stroke-width="0.6" /><ellipse cx="331.5" cy="234.3" rx="4.1" ry="1.7" fill="#f7d24a" stroke="#1c1c1c" stroke-width="0.6" /><ellipse cx="340.8" cy="232.4" rx="4.1" ry="1.7" fill="#f7d24a" stroke="#1c1c1c" stroke-width="0.6" /><ellipse cx="346.4" cy="238.9" rx="4.1" ry="1.7" fill="#f7d24a" stroke="#1c1c1c" stroke-width="0.6" /><ellipse cx="338.9" cy="242.7" rx="4.1" ry="1.7" fill="#f7d24a" stroke="#1c1c1c" stroke-width="0.6" /><ellipse cx="318.5" cy="238.0" rx="4.1" ry="1.7" fill="#f7d24a" stroke="#1c1c1c" stroke-width="0.6" /><ellipse cx="307.3" cy="233.4" rx="4.1" ry="1.7" fill="#f7d24a" stroke="#1c1c1c" stroke-width="0.6" /><ellipse cx="348.2" cy="228.7" rx="4.1" ry="1.7" fill="#f7d24a" stroke="#1c1c1c" stroke-width="0.6" /><polyline points="325.0,247.3 325.0,293.8" fill="none" stroke="#1c1c1c" stroke-width="0.6" /><polyline points="336.1,250.1 336.1,298.4" fill="none" stroke="#1c1c1c" stroke-width="0.7" /><polyline points="303.6,241.7 303.6,256.6" fill="none" stroke="#1c1c1c" stroke-width="0.5" /><polygon points="336.1,271.5 355.7,266.3 355.7,291.9 366.8,296.6 366.8,303.1 357.5,299.4 336.1,298.4" fill="#f2c530" stroke="#2a2a2a" stroke-width="0.7" stroke-linejoin="round" /><polyline points="336.1,280.8 355.7,275.2" fill="none" stroke="#1c1c1c" stroke-width="0.5" /><ellipse cx="349.2" cy="300.3" rx="8.9" ry="12.6" fill="#3c3c3c" stroke="#222" stroke-width="0.8" transform="rotate(-12 349.2 300.3)" /><ellipse cx="347.8" cy="300.3" rx="5.2" ry="7.8" fill="#e0b428" stroke="#5a4500" stroke-width="0.8" transform="rotate(-12 347.8 300.3)" /><ellipse cx="347.8" cy="300.3" rx="1.9" ry="2.6" fill="#5a4500" stroke="none" stroke-width="0" transform="rotate(-12 347.8 300.3)" /><polygon points="355.7,291.9 366.8,296.6 366.8,305.0 358.4,300.3" fill="#1c1c1c" stroke="none" stroke-width="0.7" stroke-linejoin="round" /><polygon points="338.0,217.1 355.3,220.9 355.3,228.7 346.4,230.9 338.0,228.3" fill="#fff" stroke="#1c1c1c" stroke-width="0.5" stroke-linejoin="round" /><polygon points="324.0,208.2 335.2,205.4 338.0,256.6 325.0,252.8" fill="#f2c530" stroke="#2a2a2a" stroke-width="0.7" stroke-linejoin="round" /><polygon points="335.2,205.4 338.0,206.4 338.0,256.6 335.2,256.6" fill="#d9a91f" stroke="#1c1c1c" stroke-width="0.5" stroke-linejoin="round" /><polygon points="324.0,208.2 335.2,204.9 383.5,217.1 418.9,205.4 429.1,208.2 415.2,220.3 391.0,225.3 355.7,216.6 329.6,214.7" fill="#f2c530" stroke="#2a2a2a" stroke-width="0.7" stroke-linejoin="round" /><polygon points="329.6,211.0 355.7,216.6 391.0,225.3 415.2,220.3 415.2,222.2 391.0,227.7 355.7,219.0 329.6,213.8" fill="#d9a91f" stroke="#1c1c1c" stroke-width="0.5" stroke-linejoin="round" /><ellipse cx="396.6" cy="209.2" rx="4.1" ry="1.9" fill="#f7d24a" stroke="#1c1c1c" stroke-width="0.7" /><ellipse cx="405.9" cy="211.9" rx="4.1" ry="1.9" fill="#f7d24a" stroke="#1c1c1c" stroke-width="0.7" /><ellipse cx="413.3" cy="214.7" rx="4.1" ry="1.9" fill="#f7d24a" stroke="#1c1c1c" stroke-width="0.7" /><ellipse cx="389.1" cy="219.4" rx="4.1" ry="1.9" fill="#f7d24a" stroke="#1c1c1c" stroke-width="0.7" /><ellipse cx="398.4" cy="218.4" rx="4.1" ry="1.9" fill="#f7d24a" stroke="#1c1c1c" stroke-width="0.7" /><ellipse cx="407.7" cy="216.6" rx="4.1" ry="1.9" fill="#f7d24a" stroke="#1c1c1c" stroke-width="0.7" /><ellipse cx="378.0" cy="209.2" rx="4.1" ry="1.9" fill="#f7d24a" stroke="#1c1c1c" stroke-width="0.7" /><polygon points="339.9,200.8 367.7,194.8 386.3,200.8 359.4,208.6" fill="#a9e4ea" stroke="#5fb3bd" stroke-width="0.6" stroke-linejoin="round" opacity=".95"/><polyline points="346.4,201.7 370.5,197.1" fill="none" stroke="#7cc6cf" stroke-width="0.5" /><polyline points="351.9,204.5 378.0,199.3" fill="none" stroke="#7cc6cf" stroke-width="0.5" /><ellipse cx="399.7" cy="199.3" rx="7.4" ry="2.2" fill="#fff" stroke="#333" stroke-width="0.7" /><ellipse cx="399.7" cy="196.1" rx="7.1" ry="4.5" fill="#d8a820" stroke="#8a6a10" stroke-width="0.7" /><ellipse cx="399.7" cy="193.7" rx="6.3" ry="2.2" fill="#e8c040" stroke="#8a6a10" stroke-width="0.5" /><polygon points="355.3,216.6 391.0,225.3 415.2,220.3 426.3,227.7 429.1,232.4 425.4,232.4 413.3,265.0 407.7,280.8 367.7,296.6 355.7,289.2 355.7,215.7" fill="#8690e4" fill-opacity=".93" stroke="#5a5ae0" stroke-width=".8"/><polyline points="372.4,249.2 389.1,257.5 415.2,267.8" fill="none" stroke="#222" stroke-width="0.9" opacity=".7"/><polyline points="377.0,255.7 394.7,247.3" fill="none" stroke="#222" stroke-width="0.8" opacity=".6"/><polyline points="391.0,225.3 391.0,252.8" fill="none" stroke="#5548e0" stroke-width="1.2" /><polyline points="391.0,232.4 378.9,264.9" fill="none" stroke="#5548e0" stroke-width="0.9" /><polyline points="396.6,253.8 396.6,274.3" fill="none" stroke="#5548e0" stroke-width="1.2" /><polyline points="390.1,280.8 390.1,287.3" fill="none" stroke="#5548e0" stroke-width="1.2" /><polyline points="431.0,265.0 431.0,273.7" fill="none" stroke="#5548e0" stroke-width="1.2" /><polyline points="433.2,223.1 433.2,238.0" fill="none" stroke="#5548e0" stroke-width="1.2" /><polyline points="355.3,216.6 355.3,264.0" fill="none" stroke="#6a60e0" stroke-width="0.8" /><polyline points="355.7,219.4 366.8,220.9 366.8,218.4" fill="none" stroke="#5548e0" stroke-width="0.9" /><polyline points="378.9,222.7 391.9,226.8 405.9,223.1" fill="none" stroke="#5548e0" stroke-width="0.9" /><polygon points="356.6,247.3 381.7,252.9 366.8,294.7 356.6,288.2" fill="#9aa2ee" stroke="none" stroke-width="0" stroke-linejoin="round" opacity=".5"/><polygon points="418.9,207.3 429.1,207.8 436.5,213.8 426.3,214.7" fill="#fff" stroke="#1c1c1c" stroke-width="0.6" stroke-linejoin="round" /><polygon points="421.7,226.8 427.2,215.7 439.3,213.4 441.6,217.5 435.6,229.6 426.3,232.4" fill="#d9ae2a" stroke="#7a5c10" stroke-width="0.7" stroke-linejoin="round" /><polygon points="426.3,226.8 430.0,218.4 437.5,217.1 433.8,226.8" fill="#e8c850" stroke="#7a5c10" stroke-width="0.5" stroke-linejoin="round" /><polygon points="383.5,217.1 372.4,214.2 335.2,205.2 340.8,204.1 357.5,205.6 380.8,211.2" fill="#14c81e" stroke="none" stroke-width="0.7" stroke-linejoin="round" /><polygon points="383.5,217.5 396.6,211.6 407.7,207.5 429.1,204.9 421.7,209.7 405.9,214.7 389.1,217.9" fill="#d81414" stroke="none" stroke-width="0.7" stroke-linejoin="round" /><polygon points="381.5,217.1 381.5,170.1 379.1,170.1 382.4,156.2 384.1,145.9 385.8,156.2 389.1,170.1 386.7,170.1 386.7,217.1" fill="#0a0ac8" stroke="none" stroke-width="0.7" stroke-linejoin="round" /><polygon points="369.6,198.9 376.1,194.8 376.1,197.4 391.9,197.4 391.9,200.4 376.1,200.4 376.1,203.0" fill="#0a0ac8" stroke="none" stroke-width="0.7" stroke-linejoin="round" /><polygon points="371.5,303.1 389.1,286.4 455.1,271.1 458.3,273.7 457.6,279.3 404.0,294.2 392.8,299.4 396.6,306.8 401.2,318.0 395.6,327.3 385.4,325.4 378.0,318.0 371.5,310.5" fill="#f2c530" stroke="#2a2a2a" stroke-width="0.7" stroke-linejoin="round" /><polyline points="389.1,286.4 393.8,289.2 458.3,273.7" fill="none" stroke="#1c1c1c" stroke-width="0.6" /><polyline points="393.8,289.2 389.1,298.4" fill="none" stroke="#1c1c1c" stroke-width="0.6" /><ellipse cx="404.0" cy="284.1" rx="4.8" ry="1.7" fill="#f7d24a" stroke="#1c1c1c" stroke-width="0.6" transform="rotate(-12 404.0 284.1)" /><ellipse cx="415.5" cy="281.3" rx="4.8" ry="1.7" fill="#f7d24a" stroke="#1c1c1c" stroke-width="0.6" transform="rotate(-12 415.5 281.3)" /><ellipse cx="427.1" cy="278.6" rx="4.8" ry="1.7" fill="#f7d24a" stroke="#1c1c1c" stroke-width="0.6" transform="rotate(-12 427.1 278.6)" /><ellipse cx="438.6" cy="275.8" rx="4.8" ry="1.7" fill="#f7d24a" stroke="#1c1c1c" stroke-width="0.6" transform="rotate(-12 438.6 275.8)" /><ellipse cx="450.1" cy="273.0" rx="4.8" ry="1.7" fill="#f7d24a" stroke="#1c1c1c" stroke-width="0.6" transform="rotate(-12 450.1 273.0)" /><ellipse cx="425.4" cy="308.7" rx="30" ry="19" fill="#5b9bd5" opacity=".55" transform="rotate(-22 425.4 308.7)"/><g transform="rotate(-22 424.8 310.9)"><path d="M447.9,330.0l1.7,1.9M400.4,311.4l-1.9,0.2M429.3,313.1l2.0,1.8M424.9,310.0l0.4,-1.0M429.4,308.5l0.7,0.1M445.6,304.8l1.1,0.1M441.1,313.1l1.6,0.9M429.7,328.8l0.7,1.7M439.2,293.6l0.6,-1.3M459.8,309.7l1.0,0.4M419.2,288.1l-0.6,-1.8M439.5,291.2l0.7,-0.5M450.5,293.7l1.3,-0.5M441.9,313.7l2.2,0.9M437.5,328.7l0.7,2.5M407.8,323.5l-1.4,1.5M419.4,311.2l-0.9,0.5M453.2,308.7l1.4,0.1M387.2,310.5l-2.2,0.5M435.7,301.3l1.5,-0.3M403.0,302.3l-1.1,-0.0M427.0,310.5l2.2,0.6M434.4,292.7l0.6,-1.1M457.9,319.9l1.8,0.8M399.3,310.3l-1.4,0.7M406.0,299.1l-0.8,0.2M437.3,329.6l0.5,2.9M434.7,286.9l0.7,-0.5M420.3,304.6l-0.6,0.1M425.5,297.9l0.1,-0.4M419.9,316.3l-0.6,1.5M418.9,293.3l-0.4,-0.7M447.1,313.4l1.5,0.4M452.6,327.6l1.5,1.3M398.0,295.5l-0.8,0.4M444.0,329.5l0.5,1.6M413.0,292.9l-0.1,-0.6M429.8,332.7l0.2,2.1M412.1,330.5l-0.3,1.5M459.4,305.7l1.3,0.7M411.2,336.0l-0.7,2.6M424.8,312.9l0.8,2.8M440.5,286.1l0.3,-1.2M450.1,290.5l1.4,-0.9M409.5,321.8l-0.9,1.3M410.8,315.6l-0.9,0.9M408.8,334.0l-0.2,3.0M431.1,325.3l0.2,3.2M416.2,321.0l-1.5,2.0M447.7,295.6l1.6,0.0M427.9,334.3l0.3,1.5M438.6,304.6l1.9,-0.4M414.5,322.9l-1.4,2.5M459.0,303.5l1.0,0.3M429.9,313.8l0.5,1.4M409.1,328.9l-1.0,2.6M409.8,305.6l-0.9,0.4M446.3,298.0l1.9,-1.0M426.4,308.7l0.3,-1.4M451.5,328.2l0.8,1.0M448.4,309.6l1.0,0.3M453.6,326.9l0.8,1.9M441.1,303.2l1.0,-0.1M449.1,323.9l0.8,0.8M404.7,300.6l-1.3,0.3M456.8,296.7l1.7,-1.3M431.2,331.9l0.5,3.1M423.3,330.9l0.2,1.9M441.3,317.7l2.3,1.8M407.6,293.0l-1.6,-1.3M410.7,334.2l-0.6,2.9M411.1,328.2l-1.1,2.1M425.0,314.2l0.5,1.8M451.2,320.8l1.0,1.5M389.8,312.0l-1.1,0.6M427.4,304.3l0.1,-1.9M433.6,297.4l0.4,-0.3M441.8,304.0l1.7,-1.1M429.7,308.7l1.3,0.3M442.3,290.8l0.6,-1.3M412.3,315.1l-2.0,1.2M424.7,317.1l-0.7,3.0M439.4,296.3l0.7,-0.7M424.6,314.5l0.0,2.6M417.4,308.3l-1.4,0.4M435.7,296.1l0.8,-0.7M425.1,312.8l0.2,2.3M410.5,296.6l-0.9,-1.2M408.2,312.5l-1.5,0.7M455.1,296.2l1.2,0.0M433.3,312.9l1.4,1.6M439.7,301.0l1.8,-0.3M403.2,327.5l-1.6,2.0M447.0,290.2l1.7,-1.3M432.8,322.6l0.5,1.7M425.2,305.4l0.4,-1.4M409.6,326.8l-0.8,1.4M435.3,290.6l0.8,-0.4M437.3,308.5l2.2,0.6M408.0,291.5l-0.4,-1.0M432.6,294.2l0.2,-0.5M450.1,329.8l2.2,1.8M406.1,300.8l-0.9,0.1M440.1,311.2l1.5,0.0M404.8,295.6l-1.9,-0.6M418.9,330.4l-0.4,1.8M433.5,286.8l0.7,-1.8M390.0,312.4l-2.2,0.6M410.7,320.3l-0.9,1.1M389.1,303.2l-1.7,-0.7M441.8,325.4l1.4,1.8M403.3,310.6l-1.6,1.2M417.1,326.8l-1.0,2.5M394.9,312.0l-1.4,1.0M443.6,311.2l1.8,1.2M449.6,309.4l2.3,0.2M423.6,283.1l-0.4,-0.7M405.3,297.4l-1.4,0.1M395.8,325.4l-1.7,1.3M450.8,296.6l1.5,-0.1M405.8,293.9l-1.3,-0.8M455.5,301.5l2.3,0.2M436.3,291.4l0.3,-0.8M415.6,285.8l-0.9,-0.9M437.5,294.6l0.3,-1.0M392.6,309.4l-1.6,0.7M422.4,308.2l-0.4,-1.1M414.0,291.2l-0.7,-0.4M438.8,302.0l0.8,0.2M403.1,308.6l-1.6,0.0M417.1,286.5l-0.2,-0.7M427.9,331.2l-0.1,1.7M438.6,299.6l1.1,0.1M460.0,315.9l1.9,0.7M395.1,320.9l-1.7,2.0M414.9,303.5l-1.9,-1.1M410.5,302.6l-1.6,-0.0M445.3,328.7l0.7,1.9M426.7,334.2l0.4,2.6M414.1,311.3l-1.0,1.0M395.7,295.8l-1.2,0.3M415.1,286.9l-0.5,-1.9M405.9,332.1l-0.7,1.4M443.8,320.4l1.5,1.4M433.2,321.8l1.2,2.6M420.3,296.1l0.2,-1.3M431.8,310.7l2.2,1.2M415.3,325.9l-1.3,1.9M425.6,301.0l-0.8,-1.7M443.4,328.6l0.6,1.3M441.9,324.3l1.0,2.7M428.5,306.7l0.3,-0.6M429.3,313.0l1.4,2.0M411.4,287.4l-0.9,-1.2M399.4,290.7l-1.6,-0.5M458.9,320.9l1.8,1.1M403.0,298.4l-1.7,0.1M435.9,335.7l0.3,2.1M417.5,287.7l-0.1,-1.5M424.5,338.5l-0.4,1.6M446.1,290.6l0.3,-0.2M434.5,293.9l1.0,-0.4M450.8,315.8l1.6,0.5M428.5,308.4l0.8,-0.9M427.9,304.0l0.2,-0.2M422.6,296.2l0.1,-0.4M417.0,327.4l-0.5,1.8M414.7,324.4l-1.7,2.0M415.3,306.8l-1.7,-0.3M440.7,291.1l1.3,-0.6M434.3,298.5l0.4,-0.4M414.4,309.9l-1.4,0.3M413.1,298.9l-0.9,-0.4M410.1,332.2l-0.8,2.1M446.3,332.3l1.0,1.6M458.9,322.5l1.2,1.7M458.4,298.8l2.3,0.3M454.5,299.3l0.9,0.1M391.2,298.2l-1.8,-0.7M424.4,294.9l0.2,-1.9M404.4,321.5l-2.1,2.0M414.2,292.1l-1.5,-1.3M397.8,323.4l-0.6,1.3M407.2,307.1l-1.0,0.5M432.8,314.0l1.9,1.9M441.0,333.8l0.5,1.3M443.0,291.9l1.0,-0.2M443.4,300.0l1.6,-0.6M456.4,302.5l2.1,0.4M442.8,310.8l1.1,0.8M401.8,312.3l-2.4,0.2M419.2,308.5l-2.0,-0.5M432.1,324.3l1.4,2.1M449.4,295.4l2.0,-1.0M400.2,302.1l-1.5,-0.2M440.3,286.1l0.8,-0.7M417.8,324.5l-0.7,2.2M389.2,302.4l-1.0,0.2M456.9,310.1l1.8,0.3M449.0,297.2l2.3,-0.2M437.6,297.3l1.2,-0.5M402.2,328.0l-1.0,1.9M413.6,313.2l-1.4,1.1M439.2,312.1l1.2,1.1M408.6,303.4l-2.4,-0.3M416.2,294.4l-0.8,-1.4M419.3,292.4l-0.1,-1.9M435.2,315.8l2.4,1.5M388.1,314.4l-1.5,0.5M429.9,304.5l1.5,-0.5M399.2,304.8l-1.1,-0.3M402.5,305.2l-2.0,0.5M423.0,324.7l-0.5,2.2M445.7,291.8l0.7,-1.3M401.4,325.2l-1.0,1.4M434.5,306.1l1.4,-1.2M397.6,328.3l-0.9,1.3M394.0,324.0l-2.0,2.3M389.1,312.2l-1.7,1.1M426.1,295.5l-0.5,-1.0M458.2,298.5l1.2,0.1M394.4,319.7l-1.9,1.9M420.0,333.8l0.2,2.1M394.6,295.0l-1.3,-0.5M438.7,324.8l0.6,1.8M423.1,322.8l-0.1,2.1M439.7,334.6l0.8,2.5M444.0,316.3l1.8,1.5M438.4,286.6l0.5,-0.7M418.9,318.8l-0.3,1.6M447.8,321.4l1.7,1.8M418.1,299.6l-0.4,-0.5M429.3,311.0l1.3,0.8M439.2,317.1l1.2,2.2M409.3,328.7l-0.3,2.3M424.7,335.2l0.7,2.5M453.0,321.9l0.9,0.9M423.9,316.2l0.1,1.4M413.6,301.1l-1.6,-0.7M404.6,309.5l-2.5,0.7M434.7,290.2l0.9,-1.5M412.2,291.5l-0.7,-1.0M402.6,307.2l-2.3,-0.2M417.6,309.2l-1.7,0.5M407.8,307.2l-1.2,0.2M402.1,313.7l-1.0,0.9M409.5,294.4l-0.6,-1.1M444.4,313.7l2.0,0.4M435.9,306.0l1.7,-1.1M443.7,289.4l1.1,-0.3M443.5,332.5l0.9,1.8M446.0,325.2l0.8,1.6M433.6,290.7l0.5,-0.0M404.7,324.9l-1.7,2.3M430.1,290.1l0.8,-0.7M400.6,322.5l-0.7,1.1M431.5,310.9l1.0,0.3M403.3,310.1l-1.2,0.1M450.1,298.9l2.1,-0.1M426.6,331.3l0.5,2.0M430.9,284.6l0.6,-0.6M407.7,329.2l-1.9,2.4M411.0,320.9l-1.5,2.3M415.5,290.2l-1.1,-0.8M408.2,287.6l-0.4,-0.4M403.9,312.1l-2.0,-0.0M460.3,314.5l1.4,1.2M439.2,331.7l0.6,1.4M430.2,293.0l0.3,-1.0M429.4,287.7l0.1,-0.5M397.9,305.5l-2.1,-0.7M428.8,313.3l0.8,1.0M427.9,288.6l-0.2,-1.6M445.8,333.8l0.5,2.8M447.5,312.9l1.9,1.2M447.9,300.5l0.9,-0.6M437.3,284.8l1.1,-1.6M415.3,321.6l-1.8,1.9M439.0,308.3l1.8,0.2M394.8,321.8l-2.4,1.3M415.3,289.2l-0.6,-1.3M425.3,335.3l-0.1,1.6M403.9,324.2l-1.5,1.9M461.8,313.0l1.4,0.5M400.2,321.6l-2.4,1.5M413.6,328.9l-0.7,2.1M406.9,321.1l-1.1,1.1M416.3,318.5l-1.5,1.6M430.4,289.7l0.1,-1.5M413.8,322.2l-0.6,2.1M437.0,320.5l0.6,1.6M409.7,308.2l-1.4,-0.2M412.8,318.1l-1.0,2.2M426.6,305.2l0.3,-1.5M413.1,291.8l-0.4,-0.4M410.8,320.4l-1.9,1.3M403.4,330.8l-0.9,1.4M409.3,327.1l-0.7,1.2M416.4,335.0l-0.6,2.4M425.4,297.7l0.3,-0.3M411.2,333.8l-1.2,2.8M452.6,326.4l1.8,1.4M431.7,329.5l-0.1,1.6M415.9,286.7l0.1,-0.9M445.9,328.3l1.1,1.1M436.2,318.9l1.7,1.9M396.0,313.3l-1.3,0.6M390.0,310.4l-2.5,0.0M408.5,317.4l-1.0,0.8M443.8,325.7l1.5,1.3M389.5,304.5l-2.4,0.8M421.9,306.5l-0.7,-0.8M452.4,305.3l1.1,0.3M402.3,331.0l-2.0,2.2M457.9,321.4l1.3,1.6M430.7,319.7l1.4,2.6M459.2,309.4l1.4,1.1M434.8,286.5l0.4,-1.3M445.7,300.6l2.1,-0.7M399.4,320.2l-1.0,1.5M395.4,297.3l-0.9,-0.4M432.5,287.2l0.9,-0.6M432.0,290.9l0.3,-0.4M460.6,313.3l1.4,0.6M396.7,304.0l-1.8,0.0M400.3,317.2l-1.7,2.1M435.7,323.7l0.3,1.7M431.5,317.5l0.8,1.7M442.1,293.8l0.2,-0.2M401.6,292.5l-0.5,-0.6M398.2,304.5l-1.9,0.6M423.8,318.0l-0.4,1.9M423.5,322.8l-0.1,1.9M423.3,296.5l0.7,-1.7M410.3,335.5l-0.3,2.9M404.5,316.6l-1.6,2.0M411.9,332.8l-0.1,3.0M399.1,299.1l-2.1,-0.5M440.2,309.0l0.9,0.1M414.6,306.3l-1.2,0.2M405.9,334.5l-0.6,2.6M427.5,310.0l1.8,-1.2M424.3,331.1l-0.2,1.4M450.9,315.2l1.2,0.7M402.8,311.9l-1.5,0.5M429.8,321.2l1.0,2.4M420.1,311.5l-0.7,1.0M403.5,295.0l-1.9,-1.1M419.3,295.9l-0.3,-0.3M457.6,303.4l1.8,0.1M399.5,310.8l-2.0,0.5M440.1,296.8l1.3,-0.4M393.7,301.3l-1.9,0.2M414.2,330.6l-0.3,1.4M438.1,303.0l1.4,-0.2M409.0,299.2l-1.0,-0.6M404.2,330.1l-0.6,1.1M423.8,296.3l-0.1,-0.2M435.8,302.3l0.4,-0.3M454.6,309.4l1.0,0.7M452.8,305.5l1.2,0.7M427.5,291.8l-0.0,-1.2M418.4,327.6l-0.4,2.3M430.9,305.9l1.0,0.1M412.8,301.5l-1.3,-0.2M446.7,333.6l0.7,2.6M456.2,311.1l1.4,0.6M405.9,325.6l-1.7,2.3M413.0,330.2l-0.5,2.4M407.0,306.8l-0.8,0.5M389.6,310.7l-2.1,0.2M443.1,310.0l1.4,0.2M445.9,322.6l1.6,1.2M426.3,311.4l0.7,1.1M430.0,305.9l0.5,-0.0M422.7,313.6l-0.2,1.4M407.9,306.8l-1.2,0.5M437.9,302.6l1.3,-0.6M413.5,325.8l-0.2,1.4M427.7,321.5l1.2,2.7M434.7,285.9l0.6,-0.3M428.8,314.9l0.9,1.6M433.0,289.4l0.0,-0.4M424.5,302.3l0.6,-1.9M428.4,324.7l0.3,1.8M424.7,322.3l0.0,2.0M446.1,295.1l1.7,-0.3M406.8,322.4l-1.1,1.1M415.7,305.7l-0.6,-0.1M445.0,297.9l2.3,-0.3M425.5,294.7l-0.1,-1.0M437.0,311.9l1.1,0.8M446.6,294.1l0.7,-0.2M416.0,304.2l-0.6,-0.1M441.3,333.5l0.7,1.8M391.0,302.8l-2.0,-0.8M421.3,305.0l-0.4,-0.5M432.5,325.7l0.9,3.0M448.8,292.2l1.7,-0.8M414.2,297.5l-0.2,-0.4M396.7,292.9l-1.0,0.0M436.7,298.5l0.7,-0.7M459.8,319.2l2.0,0.4M435.2,316.3l0.9,1.8M435.5,320.5l0.9,1.7M446.8,299.3l2.0,-0.7M402.8,301.9l-1.6,-0.1M416.5,313.6l-1.1,0.8M435.5,319.7l0.8,1.3M401.1,296.5l-2.2,-0.2M415.2,301.9l-0.8,-0.6M440.8,291.8l0.4,-1.9M432.1,312.2l1.4,1.0M430.6,315.7l0.7,1.8M390.2,299.5l-1.4,-0.7M402.0,302.6l-1.5,0.4M452.7,319.5l2.3,0.6M433.6,324.6l0.2,1.9M388.0,313.0l-1.3,0.6M447.7,316.2l2.5,0.8M406.2,328.3l-1.2,2.0M415.4,325.1l-0.7,1.9M392.6,300.3l-1.4,0.0M443.4,287.0l0.8,-0.3M425.3,334.6l0.0,1.5M396.6,301.1l-1.9,-0.9M401.0,303.5l-0.7,0.3M439.2,328.9l0.3,1.4M435.3,294.9l1.1,-1.1M421.5,317.9l-0.5,2.7M443.3,287.2l1.4,-0.5M436.7,327.7l0.5,1.2M430.6,306.8l1.4,-0.8M437.8,320.3l2.1,2.1M440.1,335.0l1.1,2.2M402.4,305.0l-1.5,-0.0M452.2,305.1l2.0,-0.4M426.2,312.3l2.0,2.2M402.9,326.1l-1.7,1.9M392.6,319.9l-0.9,0.8M443.3,320.4l1.5,1.2M391.8,319.0l-0.7,1.1M449.0,308.2l1.5,0.9M427.2,300.4l-0.2,-1.3M429.3,290.9l-0.4,-1.6M439.1,296.4l0.7,-1.7M448.4,317.0l2.4,1.4M410.8,310.4l-1.8,0.6M411.6,312.3l-1.0,0.4M412.0,303.0l-2.0,-0.4M390.9,318.3l-0.8,1.2M437.6,314.1l1.4,0.9M424.1,313.6l-0.2,2.3M423.7,296.4l-0.4,-1.2M400.5,312.1l-1.6,0.7M405.2,307.6l-1.9,-0.7M397.2,303.0l-2.0,0.1M402.2,312.5l-1.7,1.2M425.7,322.4l0.5,2.4M431.7,284.9l0.1,-1.6M444.6,305.4l1.4,0.2M412.5,296.4l-0.6,-1.5M420.8,322.9l-0.6,2.0M397.4,327.9l-2.1,2.1M431.3,285.9l-0.2,-0.6M407.6,300.2l-1.8,-0.5M444.2,320.4l0.9,1.2M420.8,283.3l-0.8,-1.4M399.8,318.6l-1.9,1.1M428.4,320.7l1.3,2.8M436.4,309.2l1.6,-0.3M438.7,322.3l1.2,2.5M415.7,319.2l-0.8,1.6M388.6,312.8l-1.0,0.6M412.9,307.1l-1.4,0.4M448.0,318.3l1.3,1.8M421.8,299.4l-1.4,-1.4M422.7,306.3l-1.2,-1.3M426.3,302.7l-0.3,-0.9M417.4,283.5l-0.1,-1.1M418.3,302.6l-0.9,-0.6M406.4,325.8l-0.4,1.7M425.2,314.2l0.2,2.6M404.1,297.2l-0.5,-0.1M394.7,321.3l-1.5,0.8M414.6,289.9l-0.3,-1.8M418.7,308.2l-1.3,-0.4M404.6,331.6l-0.8,1.5M412.5,314.7l-0.6,1.1M418.8,328.9l0.1,1.4M402.1,318.7l-1.4,1.9M395.1,305.5l-2.3,-0.3M402.5,306.1l-2.3,-0.1M416.9,313.3l-1.9,0.8M417.7,316.6l-0.9,1.1M447.9,325.2l0.7,1.2M414.6,330.9l-0.7,2.3M419.7,313.9l-1.2,2.0M407.3,298.7l-0.5,-0.6M398.2,313.7l-1.2,1.1M418.1,293.4l-0.9,-1.0M394.7,309.5l-2.1,0.2M404.1,300.2l-1.7,-0.2M437.1,314.7l1.9,2.3M433.2,299.1l1.5,-1.1M454.5,328.3l1.5,2.7M394.7,318.8l-2.3,1.3M451.3,330.5l1.0,2.1M418.8,306.6l-1.5,-0.0M421.1,338.2l-0.3,2.6M448.4,325.6l1.3,2.0M397.4,317.8l-1.7,1.0M418.3,300.8l-0.6,-0.1M451.3,316.3l1.2,1.2M431.5,305.3l1.1,-0.3M407.9,305.7l-0.9,0.1M425.2,336.6l-0.4,1.8M453.5,313.8l1.3,0.8M393.7,320.6l-1.1,0.8M453.8,315.5l2.3,1.0M402.7,331.9l-2.0,2.2M429.6,337.8l-0.2,2.0M417.7,321.8l-0.7,1.6M448.9,325.1l1.5,2.5M444.9,311.1l2.2,1.0M460.6,310.3l2.2,0.9M420.4,313.9l-1.5,2.1M433.1,304.0l1.7,-1.0M448.4,295.8l1.2,-0.4M411.7,306.0l-1.2,-0.2M395.2,296.1l-1.3,-0.3M396.1,322.2l-1.9,0.9M432.5,317.9l0.7,1.7M414.7,302.0l-0.8,-0.4M421.7,336.1l-0.3,1.5M442.9,330.0l0.6,2.7M428.9,308.8l1.9,0.0M428.0,292.9l-0.1,-1.5M430.0,310.2l1.6,-0.3M428.6,283.5l0.6,-1.0M425.4,314.8l0.4,2.8M432.7,306.7l1.4,-0.7M433.5,312.7l0.9,0.7M415.2,329.5l-1.2,2.1M400.3,292.2l-0.8,-0.4M454.3,309.3l2.0,0.1M459.1,309.7l1.4,0.3M450.2,311.5l2.3,1.2M435.3,321.2l0.8,1.3M429.0,320.8l-0.1,2.4M410.3,335.2l-0.1,1.8M431.9,334.9l0.7,2.5M430.4,332.4l-0.1,2.3M440.2,316.3l1.4,1.6M422.0,310.1l-2.4,-0.2M410.0,308.1l-1.2,0.6M422.9,326.5l0.4,1.9M457.9,312.5l2.4,-0.2M446.6,319.3l1.3,1.0M437.1,335.8l0.4,2.5M422.3,307.6l-2.0,-1.0M428.4,329.3l-0.5,2.9M437.5,311.8l2.4,0.0M409.8,308.1l-0.8,0.5M423.3,330.9l-0.2,3.0M435.6,327.8l0.2,2.1M426.1,314.5l0.4,1.4M429.3,327.4l0.0,3.0M431.0,306.6l1.0,-1.2M405.7,319.8l-0.8,1.6M435.6,332.6l0.1,3.1M434.5,329.1l1.1,2.0M446.4,320.7l0.6,1.3M427.7,309.1l2.0,-0.3M410.4,312.6l-2.3,0.8M438.8,286.0l1.3,-1.6M430.6,306.5l1.0,-0.4M436.4,291.9l0.9,-1.6M444.9,305.2l2.5,-0.2M403.9,325.9l-0.8,1.2M445.8,318.9l1.8,0.8M427.7,284.6l0.6,-1.2M448.0,304.7l1.7,0.5M397.0,298.0l-2.2,-0.0M440.2,330.7l0.7,2.6M402.4,312.0l-2.4,1.3M450.1,321.9l1.9,1.2M423.9,300.3l0.1,-0.9M429.0,293.1l0.3,-1.6M399.3,303.1l-2.5,0.5M430.9,311.4l1.3,0.8M402.1,295.6l-0.4,-0.1M405.2,331.9l-0.5,2.6M402.1,309.6l-2.6,1.0M413.3,317.5l-0.7,1.1M433.5,300.5l1.6,-1.3M448.6,307.7l2.3,0.4M419.7,294.2l-0.7,-1.0M455.1,322.9l2.1,1.1M393.6,321.6l-1.6,1.3M410.4,310.7l-2.5,0.0M415.6,285.9l-0.8,-1.0M407.6,326.4l-1.8,2.2M425.5,314.1l0.7,2.5M458.4,310.3l1.1,0.1M429.7,303.4l0.4,-0.4M429.7,317.7l0.6,2.3M448.7,316.8l2.1,0.8M415.5,306.2l-1.5,-1.3M445.7,304.4l0.9,0.5M396.6,321.1l-1.8,1.6M423.4,320.7l-0.4,1.4M433.3,309.6l1.8,0.9M444.2,329.4l1.9,1.9M435.3,337.0l0.2,1.8M451.6,298.7l1.7,-0.8M404.1,322.0l-1.1,2.3M444.4,318.3l0.8,1.4M398.2,318.2l-1.6,0.7M450.1,321.3l1.5,2.2M401.3,304.5l-1.1,0.6M443.4,313.0l2.1,0.8M460.6,306.4l1.2,0.3M442.8,321.2l0.8,1.5M413.0,331.9l-0.4,1.3M429.5,285.3l0.7,-1.7M398.6,318.7l-1.9,1.7M449.6,294.5l1.8,-0.4M457.0,318.8l1.4,1.3M411.0,296.7l-0.7,-1.4M428.9,310.8l2.4,1.1M411.5,324.8l-0.7,1.1M434.1,292.7l1.1,-0.9M438.9,328.7l0.9,2.5M410.6,288.9l-0.1,-0.9M413.6,316.0l-0.9,1.3M460.9,308.7l2.4,0.7M395.0,310.4l-1.8,-0.1M407.1,321.3l-1.9,1.5M423.9,300.7l-0.5,-1.3M436.6,311.4l1.9,1.2M453.7,327.8l1.0,1.9M434.0,312.7l2.3,0.5M447.4,315.6l2.3,0.5M444.7,288.7l1.6,-1.4M430.8,301.7l1.2,-0.7M435.7,296.1l1.2,-0.7M414.7,297.7l-0.4,-1.7M427.5,305.9l0.3,-0.2M429.7,307.1l0.7,-0.5M458.4,299.7l2.0,-0.4M452.4,329.3l0.8,1.5M429.5,291.9l1.2,-1.5M403.9,328.2l-0.6,1.4M416.1,298.8l-0.4,-0.8M435.4,320.4l1.5,1.8M436.4,297.4l0.7,-0.2M398.5,320.4l-0.7,1.3M429.9,322.1l1.2,2.6M404.7,332.2l-1.9,2.4M445.6,329.6l0.4,1.5M422.1,322.9l0.2,2.2M407.8,289.1l-0.6,-1.3M434.7,322.5l1.5,2.4M434.6,320.8l0.8,2.9M421.6,309.3l-0.5,-0.1M434.2,289.0l0.7,-0.4M416.5,295.9l-1.3,-1.2M460.4,304.6l1.3,0.1M430.7,296.0l0.8,-1.1M421.4,326.5l-0.4,1.5M434.2,300.7l0.7,-0.9M423.7,314.8l-1.0,2.2M428.7,291.3l0.2,-1.7M418.6,306.5l-0.7,-0.2M438.6,295.4l1.3,-1.5M456.3,298.3l1.5,-0.7M414.9,329.8l-0.2,1.4M429.0,298.2l0.2,-1.4M416.7,323.4l-1.0,1.6M401.8,302.3l-1.2,0.2M431.2,296.3l0.2,-0.4M437.7,294.4l0.8,-0.1M452.2,316.0l2.5,0.9M405.2,308.8l-1.5,0.9M427.0,312.6l0.9,1.4M395.9,320.2l-1.2,1.8M449.0,313.0l1.0,1.0M412.9,303.0l-1.9,-0.6M428.1,314.9l0.3,2.1M412.7,290.5l-0.7,-0.7M410.6,329.0l-0.5,2.2M414.8,310.4l-2.2,0.6M406.1,290.8l-0.3,-0.6M450.3,309.4l0.9,0.6M417.7,300.0l-1.3,-1.2M424.2,318.1l-0.5,2.4M422.6,316.3l-0.1,1.7M426.5,315.6l0.9,1.8M423.4,310.9l-1.4,1.0M454.6,321.7l1.7,1.7M393.6,306.4l-1.2,0.5M426.7,311.1l1.5,0.9M459.0,319.7l1.5,1.0M430.3,317.2l0.8,2.0M443.0,293.0l0.8,-0.3M420.1,323.7l0.0,3.1M410.2,299.1l-1.4,-1.0M431.6,336.2l1.0,2.1M427.6,321.2l0.6,1.8M407.1,294.1l-1.1,-0.4M410.2,298.6l-0.9,-1.4M413.8,335.2l-0.9,1.9M410.7,301.4l-0.7,-0.5M411.4,311.9l-1.7,1.3M427.3,299.2l-0.5,-1.7M423.8,312.1l-1.2,2.2M432.1,286.5l0.4,-1.8M405.5,326.7l-0.8,2.1M404.1,317.8l-1.7,2.3M420.3,288.0l-0.2,-1.8M430.1,307.0l0.9,-1.1M428.9,333.5l-0.0,2.1M426.8,318.5l0.3,2.0M398.3,329.7l-1.0,2.1M394.1,310.4l-2.1,1.2M452.0,307.4l0.8,0.3M413.2,331.8l-0.5,1.5M409.2,303.7l-2.2,0.1M436.3,333.5l1.0,2.2M397.7,326.9l-0.6,1.5M409.0,311.0l-2.0,1.0M435.6,330.8l0.8,3.0M425.1,290.3l-0.5,-0.8M410.3,309.0l-1.8,0.4M398.5,303.7l-1.4,-0.6M448.9,295.1l1.0,-0.4M403.8,304.5l-1.4,-0.8M459.1,319.5l2.1,2.1M395.3,316.0l-1.6,1.1M433.6,320.5l1.1,1.8M432.4,331.5l-0.0,1.9M410.3,316.4l-2.0,1.7M439.5,315.3l2.0,1.1M419.9,322.2l-0.4,1.3M445.4,322.7l1.1,2.4M428.5,309.7l1.5,-0.1M402.2,305.6l-2.3,-0.3M422.2,310.7l-1.7,-0.3M415.9,301.4l-1.9,-0.7M432.1,303.3l0.8,-1.6M393.8,310.3l-1.6,1.1M457.4,302.6l1.1,-0.3M393.5,325.7l-1.7,2.5M437.1,337.0l0.2,2.0M455.7,300.0l2.1,-0.2M430.9,299.1l0.3,-1.8M457.4,309.6l1.8,-0.1M410.3,309.0l-1.8,0.4M442.1,326.4l1.1,2.5M444.5,304.3l2.0,-1.0M396.8,325.8l-0.7,1.2M441.0,311.6l1.4,1.1M434.2,287.9l0.0,-0.8M421.3,284.0l-0.3,-0.6M406.4,334.8l-0.1,1.5M435.1,327.6l1.8,2.4M432.7,292.1l1.5,-1.3M421.3,298.1l-1.4,-1.4M420.4,336.8l-0.1,2.3M416.8,327.2l-0.4,1.8M408.0,316.2l-0.6,1.1M436.7,306.4l2.4,0.2M403.0,333.0l-2.0,2.2M391.8,301.8l-1.1,0.5M444.8,328.5l2.0,2.1M448.0,330.7l2.0,1.9M443.2,313.8l1.3,0.4M447.6,318.0l1.8,1.7M420.2,319.5l-0.4,2.1M406.5,315.5l-1.7,0.5M440.0,295.4l0.6,-1.5M426.2,310.8l2.1,0.0M416.8,286.8l0.3,-1.5M430.8,336.2l0.8,2.3M426.8,318.2l0.8,2.9M418.0,318.1l-1.4,2.4M392.3,305.3l-2.0,0.2M402.7,331.6l-0.4,1.7M444.3,293.2l1.7,-1.2M452.8,319.6l1.2,1.0M410.9,322.0l-1.3,1.8M457.1,322.2l1.1,1.4M418.1,318.1l-0.5,1.9M414.7,332.1l-0.2,2.6M416.8,290.3l-0.2,-0.5M422.0,331.7l-0.6,3.0M398.8,303.6l-1.2,0.2M449.1,317.3l2.4,1.5M413.5,307.2l-2.4,-0.5M417.4,313.6l-2.1,1.0M410.1,308.7l-2.1,0.7M395.3,307.2l-1.8,0.8M426.4,323.0l-0.5,2.3M405.3,289.5l-0.8,0.1M408.6,307.5l-1.3,-0.0M454.2,325.4l1.2,1.6M432.8,312.5l2.0,0.4M413.3,336.9l-0.4,2.9M410.3,320.4l-1.0,1.0M406.4,292.0l-1.2,-0.4M456.4,296.9l1.8,-1.2M414.8,335.6l-0.5,2.1M421.2,299.3l-0.9,-0.8M419.7,289.7l-0.4,-0.5M458.0,297.4l1.9,0.3M397.5,326.6l-1.3,2.2M428.0,309.6l1.1,-0.0M444.6,304.9l1.0,0.4M419.1,303.3l-1.1,-1.1M443.4,286.9l0.9,-1.3M415.7,317.7l-0.7,1.3M440.0,328.4l0.6,1.6M442.3,304.3l1.0,0.3M397.0,320.0l-1.6,1.4M414.1,320.1l-1.2,2.9M440.1,285.5l0.5,-1.3M430.6,306.3l1.6,-1.3M410.0,286.9l-0.3,-1.1M438.7,294.5l0.8,-1.7M442.2,330.2l1.4,2.4M448.3,314.2l1.2,0.4M400.5,327.9l-0.9,1.3M422.6,324.8l-0.3,1.6M418.8,332.9l-0.5,2.6M451.8,324.9l1.1,1.9M430.9,314.6l1.7,1.6M444.6,309.5l1.6,0.2M442.9,307.5l2.4,0.9M406.9,332.2l-0.4,3.0M446.9,307.9l1.4,0.7M428.9,310.3l1.9,0.3M394.8,323.0l-1.4,2.4M399.1,293.5l-1.4,-0.0M421.3,309.6l-1.3,-0.1M431.0,331.3l0.6,2.8M410.1,308.0l-0.8,0.4M444.7,321.6l1.1,1.9M458.6,319.3l0.8,1.3M438.3,286.6l0.1,-1.9M406.4,326.9l-1.0,1.5M435.7,302.4l1.2,-0.1M420.2,317.1l-0.7,2.6M393.7,301.0l-1.5,0.1M428.1,291.4l-0.2,-1.0M410.0,288.1l-0.5,-0.1M417.1,302.9l-1.9,-0.8M425.8,329.1l-0.3,1.6M402.2,310.2l-1.8,0.2M414.8,294.8l-0.9,-0.4M413.2,296.9l-1.7,-1.3M429.8,293.4l0.1,-0.5M415.2,321.0l-0.7,1.4M409.5,287.0l-0.9,-0.8M433.8,290.1l-0.1,-1.5M420.5,305.1l-0.6,0.1M433.7,314.2l2.1,1.7M460.0,321.4l1.4,1.4M413.6,297.4l-0.4,-1.7M406.7,319.4l-1.5,1.1M414.0,310.8l-0.8,0.5M411.7,303.9l-0.7,-0.0M444.9,334.3l1.1,1.9M434.6,290.7l1.1,-1.1M445.2,334.4l1.6,1.7M431.5,317.5l0.6,1.7M449.9,301.8l1.7,0.4M414.1,301.0l-1.8,-0.7M404.1,300.9l-0.6,-0.2M432.2,326.1l1.0,2.3M400.7,328.3l-1.6,1.4M446.8,330.3l0.8,3.1M421.6,318.4l-0.6,2.7M447.1,307.1l2.1,-0.9M418.0,328.7l-0.1,2.1M451.9,308.4l2.5,0.3M445.0,328.4l1.1,2.4M417.6,311.2l-2.2,-0.1M430.9,312.9l1.3,1.5M445.7,296.5l1.5,-0.5M413.9,319.4l-1.3,2.7M437.1,293.6l1.4,-1.0M408.7,333.3l-1.3,2.6M436.8,337.2l0.9,2.6M413.7,334.5l-0.5,2.5M456.3,295.5l1.9,-0.0M408.6,302.6l-1.6,-1.0M440.4,300.3l2.1,-0.8M391.7,318.0l-2.4,0.4M418.2,307.4l-1.1,0.1M439.0,323.6l0.5,2.4M392.6,303.7l-2.3,0.2M415.4,288.1l0.1,-0.8M427.2,309.3l1.6,-1.1M439.3,294.7l0.7,-0.5M436.9,295.7l1.2,-0.5M433.7,300.6l0.8,-0.9M435.7,317.7l1.4,1.4M423.2,303.4l0.3,-0.6M411.3,306.2l-2.3,0.5M403.6,320.6l-2.1,1.9M454.7,294.7l0.5,-0.1M432.0,297.6l0.8,-0.8M442.8,313.1l0.9,0.6M430.2,310.6l1.7,0.1M424.1,300.6l-0.1,-1.5M389.1,307.0l-1.7,0.4M455.2,299.2l1.9,-0.6M415.9,323.2l-0.4,3.1M452.8,292.4l1.7,-0.2M407.5,325.6l-1.0,2.6M417.8,294.2l-0.4,-0.2M412.1,289.4l-0.8,-0.6M405.4,321.5l-1.3,1.0M420.7,301.5l-0.3,-0.4M399.6,320.1l-1.5,1.7M432.0,296.3l0.1,-0.4M409.8,296.0l-0.8,-1.6M413.5,292.3l-1.6,-1.4M404.4,319.2l-1.2,1.1M440.5,296.2l0.4,-0.2M441.9,314.6l1.7,0.9M430.9,326.8l-0.0,1.6M414.0,327.5l-0.7,2.2M411.2,311.3l-0.9,0.5M408.5,331.4l-0.3,2.3M429.4,312.8l1.7,1.4M392.9,321.6l-2.4,1.0M424.5,302.2l0.3,-0.8M434.0,333.4l0.0,1.6M435.9,309.1l2.2,-0.3M422.4,320.4l-0.1,1.5M406.0,316.0l-0.8,0.6M433.6,318.4l1.4,1.5M421.6,322.8l-0.7,2.7M434.6,337.1l0.1,2.5M413.0,294.8l-0.9,-0.8M458.3,322.2l1.4,0.7M442.6,321.0l1.7,1.9M441.6,316.6l2.2,1.5M415.6,312.4l-1.9,0.7M430.9,303.7l1.3,-0.7M447.0,331.8l1.0,1.7M423.1,298.9l-0.1,-0.5M397.7,292.8l-0.6,-0.1M444.9,325.6l1.5,1.9M406.4,321.5l-2.1,1.5M394.0,318.1l-1.5,1.2M400.4,315.9l-2.2,1.5M415.8,304.1l-2.3,-0.5M427.5,300.7l-0.4,-1.3M399.1,321.0l-0.7,1.0M396.1,325.9l-0.8,1.9M427.0,336.9l0.2,2.3M417.3,323.9l-0.5,1.5M433.1,318.3l0.8,1.3M437.1,303.8l0.8,0.3M430.7,292.9l-0.3,-0.9M409.7,317.0l-1.4,0.9M397.9,292.5l-1.1,-1.3M445.2,323.2l1.4,2.4M434.9,295.0l0.5,-0.3M395.0,301.0l-1.1,-0.4M448.0,294.2l2.0,-0.2M442.8,319.4l1.4,1.4M414.0,295.0l-1.1,-0.4M417.3,322.1l-0.1,1.4M435.6,327.7l0.6,1.7M424.3,304.2l0.3,-1.3M427.4,315.5l0.7,2.4M448.5,299.2l1.3,-1.3M409.5,313.1l-1.0,1.2M434.4,287.6l0.3,-1.6M427.6,292.9l0.6,-1.8M454.5,294.6l1.0,-0.4M459.2,311.4l1.9,0.1M398.4,292.0l-1.0,-1.7M415.6,322.1l-0.2,1.4M461.3,312.0l1.9,1.2M419.1,330.1l0.2,3.0M436.6,315.5l1.1,0.9M405.9,316.4l-1.5,1.2M417.4,290.9l0.2,-1.9M446.2,299.3l1.0,-0.2M453.2,302.6l2.0,-0.9M413.2,300.5l-0.7,0.2M414.5,318.9l-0.5,1.9M420.9,292.4l0.4,-1.5M396.5,311.0l-1.2,0.7M424.5,286.4l-0.3,-0.4M401.1,315.2l-1.9,0.5M425.0,318.6l0.2,1.5M416.7,317.3l-1.4,2.4M446.7,296.4l1.2,-1.3M436.3,325.7l1.2,1.7M427.9,317.5l0.5,1.4M394.4,294.2l-1.5,-0.5M416.4,316.3l-1.5,2.0M412.5,296.8l-0.8,-0.3M439.6,307.5l1.9,0.7M408.2,319.5l-0.6,1.4M447.4,302.8l0.9,-0.4M392.3,311.1l-2.2,-0.0M424.2,321.0l0.1,1.6M416.4,320.5l-0.5,1.5M429.1,304.2l0.5,-0.8M401.9,324.2l-1.4,1.6M423.7,303.4l-0.2,-1.9M392.4,315.0l-1.4,0.8M443.4,296.7l1.4,-0.4M440.8,304.6l2.4,-0.2M423.4,327.9l0.0,2.7M433.9,313.2l2.5,0.6M454.5,295.6l1.7,-0.3M445.7,290.7l1.6,-0.8M440.2,304.9l1.5,0.2M415.5,295.4l-1.8,-1.2M405.4,333.8l-1.8,2.4M392.8,323.8l-1.2,1.2M420.5,295.5l0.3,-1.5M457.3,322.4l1.6,1.1M434.7,308.9l1.7,0.8M411.7,320.3l-1.3,1.6M453.5,298.5l1.5,-0.4M426.7,326.6l0.4,2.2M421.6,310.6l-2.1,-0.1M422.5,323.1l-0.9,2.2M403.3,330.7l-0.6,1.2M408.4,321.1l-1.8,1.4M400.1,309.9l-0.9,0.5M423.1,284.2l-0.0,-0.6M429.3,299.8l0.3,-0.7M417.2,331.4l-1.5,2.6M435.5,295.6l0.9,-1.2M403.3,309.4l-2.5,-0.1M409.3,334.0l-0.7,1.3M415.7,313.5l-1.6,0.8M449.4,316.8l2.0,1.1M413.5,308.5l-2.0,-0.7M389.4,305.2l-1.9,0.9M453.2,302.9l0.8,-0.1M445.4,327.5l0.8,2.2M405.2,300.1l-0.7,-0.6M432.8,309.1l2.6,0.4M407.5,293.4l-1.7,-1.1M436.2,292.2l1.1,-0.4M450.1,320.5l2.3,0.9M405.9,306.1l-2.2,0.5M403.0,312.4l-1.7,1.2M421.3,310.2l-1.8,-0.0M392.7,320.0l-2.5,1.3M429.6,295.1l1.3,-1.4M454.0,310.0l0.9,0.3M411.0,325.4l-0.6,2.7M441.6,313.2l2.0,0.6M448.9,302.3l1.6,-0.2M397.9,298.9l-0.9,-0.5M395.6,322.1l-0.7,0.9M438.2,306.3l0.5,0.0M430.8,332.7l0.9,2.7M446.9,297.8l1.1,-0.5M441.2,333.2l1.5,2.3M437.2,314.4l1.5,1.0M455.0,301.6l1.1,0.5M460.9,304.2l1.7,0.4M437.3,304.8l1.9,-1.2M414.6,321.3l-1.5,2.0M427.0,322.9l-0.3,3.2M417.9,294.1l-0.3,-1.9M418.1,337.0l-0.6,1.9M401.6,312.0l-1.2,0.7M427.8,330.7l0.1,2.2M427.5,284.1l0.3,-1.1M437.9,317.4l1.2,1.5M423.9,287.6l0.1,-1.7M425.3,289.0l0.1,-0.4M416.4,298.1l-1.2,-1.3M395.3,322.6l-0.9,1.4M430.9,305.2l1.5,-0.7M406.9,311.5l-0.9,0.7M430.2,324.4l0.7,1.6M406.5,333.1l-1.3,2.6M412.0,291.8l-0.9,-1.0M418.3,322.3l-0.8,1.9M457.0,316.7l2.1,1.4M418.0,303.0l-1.1,-0.3M394.5,327.3l-1.5,1.1M418.2,321.6l-0.5,2.0M414.7,310.4l-1.8,-0.2M416.5,316.6l-2.0,1.4M419.7,286.4l0.2,-1.7M399.9,314.8l-0.9,0.6M448.3,305.0l2.0,-0.3M433.7,301.8l0.3,-0.2M422.0,321.6l-0.6,2.2M426.5,312.8l0.6,1.8M426.8,314.2l0.1,1.9M421.7,321.2l-0.3,1.9M441.1,297.4l0.5,-0.4M452.1,317.7l1.4,0.9M419.8,314.3l-0.8,1.9M437.9,331.7l0.9,2.0M450.8,307.3l2.3,-0.4M408.1,307.4l-2.2,0.8M400.5,306.9l-1.2,-0.2M450.2,307.7l1.5,-0.2M411.4,316.0l-1.5,1.6M435.0,289.2l0.4,-0.6M411.8,326.0l-0.7,1.2M460.8,305.2l0.9,0.0M390.5,315.3l-1.9,0.7M430.6,312.1l2.4,1.2M400.7,315.6l-1.5,1.1M426.2,319.0l-0.0,2.2M451.9,297.6l1.6,-0.9M416.1,304.0l-1.1,-0.2M440.0,313.4l1.5,1.2M433.8,300.6l0.6,0.1M443.1,322.2l1.2,1.1M409.9,321.9l-2.1,1.8M457.5,319.1l1.1,0.7M395.8,313.6l-1.6,1.4M396.4,292.9l-1.8,-1.2M397.5,319.6l-1.5,2.1M416.9,293.2l-1.1,-0.9M414.1,334.5l-0.9,3.0M440.7,304.6l1.2,-0.2M420.9,314.2l-1.0,1.8M424.1,338.3l0.7,2.6M423.7,325.1l0.2,2.8M452.6,300.2l2.3,0.1M438.0,304.7l1.6,-0.4M418.7,330.7l-0.4,1.7M444.2,329.4l0.6,2.5M398.8,295.9l-1.0,-1.1M449.4,294.9l0.4,-0.2M432.5,285.1l0.5,-0.4M448.6,311.4l1.2,1.0M441.7,321.5l1.6,2.2M441.1,295.4l0.5,-0.2M452.5,310.3l1.6,0.7M409.8,321.8l-0.9,1.6M446.1,306.9l2.2,-0.1M417.3,296.7l-0.0,-0.5M412.0,333.3l-0.7,2.9M418.7,316.2l-0.9,2.6M445.0,329.2l1.1,1.2M436.9,320.1l2.2,2.0M433.4,320.5l1.0,1.7M396.2,300.3l-1.9,0.4M444.0,328.1l1.4,1.7M447.9,298.3l1.4,-0.4M421.4,288.2l-0.2,-1.2M393.3,298.2l-1.8,0.3M414.6,334.1l-0.1,1.8M438.8,332.5l0.3,2.7M401.9,292.2l-0.7,-0.4M393.9,312.6l-2.3,1.4M442.9,322.9l0.9,2.4M435.0,290.4l0.3,-1.6M436.5,304.5l1.0,-1.0M440.1,290.9l0.6,-1.0M412.3,293.1l-1.1,-1.0M440.4,326.2l1.6,1.9M433.6,310.9l1.7,1.2M458.4,318.6l1.9,1.2M397.9,316.1l-2.1,2.1M438.3,315.2l1.6,1.4M435.4,332.0l0.9,2.9M404.7,331.9l-1.4,2.6M452.8,326.5l1.6,1.3M433.9,306.9l1.3,0.3M404.6,296.7l-1.2,-0.7M425.9,293.1l0.2,-1.6M408.1,303.2l-0.9,-0.4M442.5,286.3l0.6,-0.0M419.5,292.4l0.1,-1.9M420.9,287.8l0.5,-1.3M403.6,302.6l-1.1,-0.0M424.1,333.6l0.2,2.8M444.2,302.7l1.0,0.5M414.4,326.2l-0.5,1.4M402.9,323.6l-1.8,1.8M425.4,301.7l1.0,-1.5M454.4,313.4l0.9,0.7M409.2,332.9l-1.5,2.0M420.4,289.6l-0.5,-0.5M399.5,326.5l-1.3,2.2M440.9,330.0l1.0,2.5M451.2,320.1l1.6,1.4M425.9,330.0l0.0,2.2M410.5,331.7l-0.4,2.0M445.0,321.1l0.7,1.3M442.6,310.2l1.7,0.2M415.4,295.9l-0.7,-0.8M400.9,316.8l-1.3,0.8M431.3,290.8l-0.1,-0.3M421.0,336.4l0.0,1.6M401.0,325.1l-2.2,1.8M406.5,293.6l-1.1,-0.4M455.3,313.1l1.7,0.2M415.7,315.6l-2.1,1.2M448.7,305.8l1.4,0.1M429.0,292.3l0.6,-0.8M431.6,320.9l0.9,1.8M458.4,299.4l1.6,-0.3M447.7,332.9l0.7,1.8M420.0,308.8l-1.6,-0.0M388.3,313.0l-2.1,0.3M425.2,294.4l0.0,-1.5M437.9,288.4l0.4,-0.9M440.4,300.3l0.8,-0.6M436.1,316.5l1.1,1.4M450.0,310.9l1.5,0.6M427.4,330.5l-0.4,2.3M427.5,310.4l2.3,0.1M406.2,305.2l-1.7,-0.8M445.2,295.3l0.8,-0.3M421.4,296.8l-0.5,-1.8M428.0,291.4l0.9,-1.6M413.8,301.1l-0.4,-0.3M412.1,303.2l-2.0,-0.3M428.3,305.7l1.0,-0.5M410.3,301.1l-0.7,0.0M437.6,329.0l0.7,2.7M393.0,311.1l-1.3,1.0M411.6,293.7l-0.5,-1.4M426.7,338.5l-0.4,2.0M405.9,329.5l-1.0,1.6M408.7,291.5l-0.4,-0.2M417.0,316.0l-0.4,1.3M429.7,318.4l0.6,1.9M405.2,321.3l-1.5,1.7M437.3,331.2l0.8,3.1M457.2,323.6l1.1,0.9M416.8,335.9l0.3,3.0M423.0,309.9l-2.0,0.1M445.5,301.5l0.9,-0.1M437.2,323.4l1.6,1.7M412.2,325.7l-0.6,2.6M399.8,310.8l-2.3,1.4M431.1,331.6l0.4,1.6M407.7,325.9l-0.8,2.2M435.2,312.5l1.4,1.3M434.8,293.1l0.0,-0.6M412.6,295.7l-1.2,-0.7M425.0,284.5l0.1,-1.6M420.0,323.1l-0.3,2.4M401.6,321.3l-1.8,1.0M429.5,291.4l0.1,-0.2M427.8,318.4l0.3,2.2M393.9,303.3l-1.4,-0.1M436.3,333.4l0.5,2.5M396.9,295.0l-0.5,-0.0M413.7,296.5l-1.1,-1.4M420.7,331.1l-0.4,2.7M403.5,315.8l-1.2,1.5M421.3,292.8l-0.8,-0.8M439.9,309.1l1.4,0.8M413.6,336.6l-0.2,2.7M420.7,301.2l-0.6,-1.7M410.7,287.1l-1.0,-0.5M416.1,294.7l-0.2,-1.0M400.7,298.7l-1.6,0.1M396.3,326.0l-1.4,2.2M412.9,292.2l-1.3,-1.5M435.6,291.5l0.4,-0.6M410.9,302.1l-0.5,-0.4M428.3,299.2l-0.1,-0.8M450.6,327.7l1.9,1.2M421.7,320.3l-0.6,2.3M413.4,308.3l-2.0,0.5M418.9,290.1l-0.1,-0.5M438.4,336.3l1.5,2.5M393.4,297.7l-1.3,0.4M404.3,293.2l-1.8,-0.9M402.4,306.8l-1.4,0.7M446.0,296.4l0.8,-0.2M413.7,314.0l-1.1,0.6M446.5,291.7l1.1,-1.2M405.4,328.9l-1.6,1.8M403.6,291.2l-1.2,-0.4M389.6,305.2l-1.9,0.6M407.7,289.6l-0.6,-1.3M455.7,318.6l2.0,2.0M422.6,305.3l-1.2,-1.0M431.0,310.7l1.4,0.9M437.8,334.0l1.3,2.0M402.7,297.0l-1.0,-1.0M413.8,293.7l-0.8,-1.2M425.5,319.1l0.4,1.9M446.7,300.0l1.1,-0.4M443.0,303.1l1.4,-0.2M453.9,319.5l1.3,1.2M438.1,312.8l1.0,1.1M405.5,299.2l-1.1,0.2M397.8,316.9l-1.9,2.1M452.8,317.1l0.8,1.0M395.7,326.0l-2.0,1.6M433.8,297.0l0.3,-0.3M413.2,330.2l-0.8,1.4M456.0,309.9l2.0,0.7M410.9,310.6l-1.0,0.2M397.2,301.9l-1.8,-0.3M394.1,320.6l-1.9,2.3M399.7,318.8l-1.6,1.3M422.8,288.6l-0.0,-1.7M438.2,336.8l0.2,2.7M409.8,335.7l-0.1,1.6M450.9,317.3l1.2,1.5M453.0,327.1l0.8,1.1M393.3,320.5l-1.3,1.6M413.6,309.2l-1.6,-0.4M445.6,319.5l1.7,0.9M438.6,328.9l0.7,2.2M437.8,294.1l1.6,-0.8M425.1,292.5l0.3,-0.5M424.2,313.5l-0.2,2.2M416.8,300.7l-1.5,-1.3M454.2,323.7l1.4,1.7M431.7,320.1l0.6,1.6M424.2,335.2l-0.1,1.7M443.8,305.1l2.2,0.5M428.4,332.5l0.3,1.5M414.3,295.2l-0.6,0.1M413.5,291.4l-1.0,-1.4M438.0,323.7l1.0,2.7M393.1,301.1l-2.3,-0.5M420.1,329.7l-0.0,1.9M445.5,316.4l0.9,0.9M420.0,333.8l-0.5,1.4M413.6,324.2l-1.8,1.9M446.0,318.0l1.3,1.6M404.3,320.1l-1.4,1.4M447.6,320.4l1.4,1.0M448.3,332.6l0.6,1.9M459.2,306.3l2.0,-0.5M435.4,300.7l0.7,-1.9M422.8,326.3l0.5,2.6M424.3,297.3l0.5,-0.9M459.1,310.6l2.3,0.3M400.7,294.5l-0.7,-0.4M438.6,330.9l0.3,3.1M433.9,301.7l0.8,-1.2M443.7,328.6l0.6,2.1M396.2,296.2l-1.7,-1.3M422.3,303.2l-0.6,-0.3M415.4,326.1l-0.3,1.7M418.4,336.6l0.1,1.8M437.2,307.8l2.2,-0.5M446.5,299.5l0.8,0.0M410.7,327.6l-1.4,1.6M405.9,309.2l-1.7,0.6M417.6,302.5l-0.8,-0.3M393.1,323.4l-1.2,1.1M399.9,292.7l-0.8,-1.2M417.5,312.9l-1.3,1.8M443.1,305.8l1.6,0.2M441.4,321.3l0.7,1.9M409.5,290.3l-1.1,-1.4M451.2,305.9l1.2,-0.2M444.0,323.7l1.9,1.4M427.7,311.9l1.3,2.0M396.8,292.9l-0.8,-0.3M403.0,305.2l-1.6,-0.3M429.1,306.1l0.7,0.1M412.3,295.3l-0.3,-0.2M431.2,295.1l0.9,-1.1M436.5,330.5l0.9,1.6M411.5,305.8l-1.7,-0.2M426.1,297.8l0.3,-1.8M436.2,320.2l1.0,1.6M405.8,330.6l-0.5,2.6M453.0,299.7l1.8,0.2M425.4,284.6l0.5,-0.6M398.2,291.2l-0.8,-1.0M401.8,302.0l-1.9,-0.8M404.0,313.6l-1.5,0.6M452.6,325.5l2.1,1.4M416.3,290.7l-1.1,-0.9M451.5,291.2l1.4,-1.1M431.8,312.6l1.8,1.9M448.8,294.8l1.2,0.0M397.5,299.9l-0.7,-0.1M410.4,325.9l-1.1,2.4M414.9,285.6l-1.5,-1.4M424.6,283.2l0.3,-1.7M428.7,317.3l0.4,2.4M420.9,308.5l-0.6,-0.4M421.9,328.2l-1.0,2.8M416.5,312.8l-0.9,1.3M395.5,324.3l-1.1,1.8M428.5,318.0l0.9,2.4M452.0,300.3l1.6,-0.1M443.6,311.6l1.4,0.1M404.0,327.4l-1.5,2.3M417.4,287.8l-0.0,-0.4M427.6,284.9l-0.1,-0.6M396.4,320.6l-1.6,2.2M441.4,319.1l1.7,2.5M418.6,316.4l-0.8,1.7M409.6,308.5l-2.5,0.4M401.7,299.0l-0.8,-0.7M412.4,297.3l-1.2,-0.8M431.4,302.7l0.6,-1.0M431.5,305.0l0.9,-0.8M397.7,326.1l-1.1,2.3M460.6,306.1l0.8,0.2M392.2,297.7l-1.1,0.4M412.8,317.9l-1.1,1.7M394.3,325.8l-1.1,1.1M404.3,326.0l-0.7,1.0M418.4,297.6l-1.1,-1.3M425.3,306.2l-0.5,-1.5M421.4,306.0l-0.9,-1.1M395.8,312.7l-1.2,0.5M461.3,307.3l0.9,0.5M416.1,301.7l-1.5,-0.6M425.8,314.0l-0.3,2.5M418.1,319.5l-0.9,1.7M410.9,299.9l-0.7,-0.9M443.8,333.7l1.1,2.4M456.3,299.7l1.1,0.2M395.6,324.2l-0.9,1.1M456.1,317.4l1.1,1.0M414.3,287.1l-0.7,-0.8M455.3,296.6l1.5,0.2M440.6,303.8l1.4,-1.3M394.3,300.8l-1.8,-0.3M438.8,313.0l2.4,1.4M421.7,311.5l-1.8,0.5M395.1,309.5l-1.8,0.0M455.6,306.5l2.0,0.2M408.9,331.1l-0.4,1.7M434.8,323.4l0.7,1.3M433.2,308.2l2.1,0.2M423.7,326.9l-0.1,1.6M410.5,309.0l-0.9,0.4M461.4,318.4l1.7,1.2M401.6,313.4l-1.7,1.4M392.5,310.3l-2.1,0.3M423.1,334.6l-0.4,1.9M417.2,329.4l-0.6,2.2M441.3,302.5l2.3,-0.6M405.3,325.8l-1.9,1.4M449.1,291.6l2.1,-0.9M408.1,310.6l-2.3,1.0M398.9,322.3l-0.7,1.4M420.2,293.5l0.0,-1.5M439.5,321.0l2.2,1.8M422.9,292.9l0.5,-1.6M397.1,311.1l-1.3,1.1M426.6,338.1l-0.2,1.5M459.7,321.4l2.0,1.1M401.8,294.4l-2.0,-0.5M432.6,307.8l2.4,-0.1M439.5,332.5l1.0,2.4M417.0,298.8l-0.5,-0.3M426.5,329.2l-0.5,2.4M410.3,302.0l-0.9,-0.4M457.4,298.7l1.5,-0.5M433.6,301.5l1.0,-1.6M428.0,313.8l1.1,1.7M417.8,285.6l0.2,-1.0M446.4,310.4l1.0,0.2M423.2,326.2l0.2,3.2M445.5,333.5l0.9,2.3M434.0,293.8l1.0,-1.4M427.1,312.0l2.2,1.0M428.1,294.9l-0.5,-1.8M434.9,334.0l0.3,1.7M433.4,329.7l0.6,2.6M437.8,299.6l1.3,-0.6M449.9,313.6l0.8,0.6M442.6,301.8l1.5,0.2M421.6,303.0l-0.4,-1.9M439.0,310.5l0.8,0.2M424.4,310.9l-2.1,1.2M429.9,296.8l-0.2,-1.0M419.7,308.3l-0.9,0.1M450.9,306.7l1.7,-0.1M429.5,311.1l1.6,1.3M400.5,331.6l-1.0,1.2M396.2,321.0l-1.2,1.8M448.1,329.0l1.2,2.1M456.9,301.0l1.5,0.5M396.2,311.6l-1.1,0.5M424.8,316.9l0.6,2.3M424.9,300.8l-0.2,-1.1M449.8,295.3l1.2,0.1M434.1,323.7l0.5,1.3M415.3,334.9l-0.6,1.4M430.8,334.6l0.3,2.0M412.8,328.9l-0.6,2.1M410.2,303.2l-1.4,-0.2M441.8,319.7l1.9,1.0M441.5,334.6l1.2,1.6M421.3,288.3l-0.9,-1.1M430.0,310.9l2.0,0.5M439.5,294.4l1.1,-0.6M445.0,301.6l1.4,-0.4M402.0,324.6l-1.6,1.5M418.0,304.7l-1.3,-1.1M431.8,334.1l0.1,2.0M417.8,304.8l-1.0,-1.0M388.2,312.1l-0.9,0.5M445.9,321.8l0.7,1.4M412.6,323.0l-0.7,1.5M431.4,331.9l0.9,2.1M454.6,317.2l1.6,1.2M395.1,298.4l-1.3,-1.0M410.7,289.6l-1.2,-0.7M399.9,321.4l-0.9,1.3M435.1,286.3l0.1,-1.6M401.2,329.8l-1.8,2.1M454.1,295.7l2.1,0.0M393.9,323.7l-1.0,1.1M406.9,297.6l-0.8,-0.4M425.6,291.8l0.4,-1.0M447.3,293.6l1.9,-0.8M442.4,309.4l1.0,0.2M458.6,320.2l1.8,0.6M399.9,311.1l-0.8,0.6M418.2,334.0l-0.8,2.1M447.0,289.3l1.1,-0.0M458.7,322.5l2.0,1.1M427.8,303.3l-0.0,-1.6M423.0,283.3l0.3,-0.3M430.5,322.8l1.3,2.1M407.3,333.5l-0.6,2.0M400.7,296.1l-1.7,-0.7M416.3,297.0l-1.6,-0.9M412.5,310.3l-0.8,0.3M455.5,308.5l2.0,1.2M401.0,289.8l-0.5,-0.8M387.6,306.6l-1.2,0.7M412.1,333.4l-1.3,2.3M423.1,327.6l-0.5,1.9M434.3,332.5l0.9,2.0M426.7,329.3l-0.6,2.6M445.6,307.0l2.3,0.8M412.2,326.2l-1.3,2.1M421.7,305.4l-1.1,-0.6M457.9,298.7l0.8,-0.1M435.1,323.3l0.3,2.1M454.3,312.8l2.1,0.4M416.1,308.6l-2.4,-0.0M390.9,299.2l-0.9,0.4M387.9,315.6l-1.1,1.0M398.6,312.5l-2.0,1.2M437.1,325.3l0.6,2.9M404.5,320.9l-1.6,1.9M440.1,311.0l1.4,0.2M449.3,315.2l1.1,1.0M408.9,310.5l-2.1,-0.2M397.2,307.5l-1.1,-0.0M427.0,313.0l0.9,2.6M430.7,319.4l0.6,1.5M424.0,310.6l-1.3,-0.7M439.4,286.3l0.4,-1.5M453.1,322.3l1.1,1.8M442.3,334.6l2.0,2.2M395.1,324.0l-1.6,1.4M429.3,318.0l0.3,2.4M420.7,299.7l-1.1,-0.8M440.7,286.5l1.0,-1.3M433.1,329.0l0.4,2.1M418.8,283.8l-0.3,-0.8M416.9,311.8l-1.4,0.6M411.4,318.6l-1.0,1.5M438.8,301.8l1.1,-1.2M396.8,305.7l-1.6,0.3M411.1,300.7l-0.7,-0.0M420.3,312.6l-1.0,1.4M444.0,329.0l0.9,1.8M426.9,294.8l0.3,-1.0M415.4,315.0l-0.7,1.3M461.6,313.4l0.9,0.7M411.2,306.2l-1.5,-0.2M437.2,304.7l1.5,-1.5M426.0,311.6l1.8,1.8M435.9,320.6l0.4,1.9M446.6,299.4l1.6,-0.5M447.4,304.5l1.8,0.5M438.9,306.0l1.7,0.5M432.3,326.9l0.5,1.9M450.2,293.4l0.6,-0.4M422.1,308.9l-0.8,-0.2M419.7,292.2l-0.6,-0.5M444.0,317.6l1.1,1.0" stroke="#5b9bd5" stroke-width=".9" fill="none"/><path d="M423.8,311.7h.8M440.1,312.0h.8M407.9,323.1h.8M428.5,311.4h.8M399.5,310.8h.8M418.6,315.4h.8M414.2,292.9h.8M409.9,315.6h.8M417.9,320.4h.8M440.0,304.0h.8M431.1,315.1h.8M445.4,299.1h.8M447.3,310.6h.8M451.0,323.1h.8M431.9,332.5h.8M406.8,292.3h.8M425.2,312.5h.8M428.5,306.3h.8M430.9,310.3h.8M424.9,317.3h.8M415.9,307.3h.8M409.5,296.6h.8M432.0,313.9h.8M407.8,328.7h.8M409.9,291.0h.8M405.1,301.8h.8M417.9,331.2h.8M409.2,321.3h.8M403.0,310.4h.8M444.9,311.3h.8M404.8,297.1h.8M406.3,294.4h.8M423.2,307.8h.8M401.8,309.2h.8M439.5,301.0h.8M416.5,304.4h.8M425.1,333.8h.8M433.5,320.7h.8M414.9,327.4h.8M440.0,322.5h.8M402.4,298.0h.8M450.4,316.7h.8M423.9,297.6h.8M417.3,307.7h.8M412.5,311.1h.8M403.1,320.1h.8M407.8,307.2h.8M443.3,293.4h.8M443.9,310.8h.8M430.5,323.5h.8M456.5,311.8h.8M408.7,304.3h.8M433.3,314.9h.8M401.1,303.2h.8M428.1,296.2h.8M418.8,334.0h.8M422.4,323.3h.8M419.7,299.3h.8M408.6,327.3h.8M423.5,318.0h.8M436.1,289.8h.8M416.4,308.9h.8M410.4,295.1h.8M435.3,291.3h.8M398.8,323.3h.8M449.1,300.1h.8M405.9,328.9h.8M441.1,332.3h.8M396.5,305.0h.8M405.8,323.1h.8M413.3,327.6h.8M429.0,288.8h.8M410.0,308.4h.8M411.4,290.8h.8M408.1,327.0h.8M396.7,315.0h.8M442.6,327.0h.8M452.4,304.1h.8M428.9,319.7h.8M447.3,300.5h.8M397.2,305.4h.8M432.8,319.5h.8M396.9,306.2h.8M424.6,294.8h.8M412.8,308.2h.8M422.6,332.4h.8M431.6,320.9h.8M420.1,297.1h.8M440.8,296.9h.8M439.8,303.8h.8M424.2,297.5h.8M453.6,304.3h.8M431.3,306.4h.8M456.9,309.2h.8M405.3,306.8h.8M447.6,324.5h.8M421.5,312.8h.8M414.0,326.8h.8M429.1,314.7h.8M427.4,322.9h.8M408.4,324.0h.8M425.1,294.6h.8M415.0,304.8h.8M423.3,305.9h.8M412.3,296.6h.8M446.6,300.8h.8M433.7,319.1h.8M440.1,291.7h.8M432.6,323.9h.8M406.6,329.0h.8M401.2,304.5h.8M420.2,317.6h.8M432.5,308.7h.8M401.1,305.5h.8M402.6,327.3h.8M431.0,289.8h.8M412.3,311.4h.8M424.7,295.1h.8M397.6,302.8h.8M421.5,321.6h.8M407.4,301.5h.8M401.7,320.4h.8M438.0,320.9h.8M414.4,306.5h.8M423.8,307.5h.8M419.3,302.2h.8M405.4,295.2h.8M418.8,308.6h.8M420.0,330.8h.8M402.4,307.1h.8M449.5,324.1h.8M406.6,300.6h.8M394.3,310.3h.8M433.4,298.3h.8M449.1,327.3h.8M450.0,314.9h.8M455.2,315.0h.8M419.6,321.9h.8M446.8,294.8h.8M429.2,292.5h.8M423.7,315.5h.8M416.6,328.2h.8M430.4,321.3h.8M430.2,330.7h.8M410.4,309.7h.8M448.1,318.1h.8M426.4,327.9h.8M423.4,330.0h.8M429.6,328.8h.8M433.7,332.9h.8M425.9,309.5h.8M430.7,306.0h.8M404.3,327.1h.8M448.7,303.8h.8M401.6,310.1h.8M429.7,294.4h.8M401.1,297.5h.8M413.8,316.1h.8M419.1,295.9h.8M409.5,310.0h.8M427.0,312.8h.8M430.8,315.9h.8M445.4,303.8h.8M433.6,311.5h.8M453.0,297.2h.8M399.9,319.8h.8M443.6,312.1h.8M413.5,331.1h.8M429.3,311.8h.8M440.8,327.7h.8M423.0,299.7h.8M432.1,313.3h.8M432.3,300.4h.8M425.9,304.2h.8M414.9,300.4h.8M397.7,320.5h.8M435.7,322.8h.8M432.5,289.7h.8M432.5,297.0h.8M422.4,315.9h.8M438.3,296.5h.8M427.6,297.5h.8M431.9,298.1h.8M405.7,309.6h.8M449.9,314.3h.8M414.3,292.5h.8M425.0,317.3h.8M422.0,311.7h.8M428.6,312.4h.8M444.3,292.0h.8M411.1,300.4h.8M409.6,311.0h.8M421.1,286.5h.8M428.0,319.9h.8M453.3,305.6h.8M437.5,332.7h.8M398.8,302.2h.8M430.7,330.4h.8M419.2,321.2h.8M401.9,307.4h.8M430.6,302.3h.8M429.4,300.2h.8M440.7,328.1h.8M441.5,310.0h.8M423.2,297.8h.8M409.1,317.0h.8M441.8,315.1h.8M404.6,314.4h.8M416.8,319.3h.8M446.3,293.0h.8M415.0,290.9h.8M450.1,318.9h.8M409.5,307.6h.8M433.3,311.8h.8M406.9,291.0h.8M419.3,301.2h.8M418.8,305.0h.8M441.6,328.3h.8M413.9,321.6h.8M446.9,314.6h.8M419.4,333.7h.8M444.8,308.4h.8M445.6,306.0h.8M409.2,308.5h.8M420.5,315.3h.8M402.4,310.8h.8M430.3,294.1h.8M435.0,289.7h.8M412.6,311.9h.8M434.4,288.8h.8M448.4,303.4h.8M430.5,325.3h.8M422.1,316.8h.8M453.1,309.0h.8M430.7,314.2h.8M438.6,295.0h.8M441.4,301.6h.8M437.3,325.4h.8M429.0,307.6h.8M432.5,299.5h.8M410.5,304.7h.8M431.7,299.1h.8M425.9,298.9h.8M414.5,323.8h.8M418.8,295.4h.8M421.3,302.2h.8M408.7,297.1h.8M441.3,296.0h.8M415.7,326.2h.8M428.5,312.0h.8M433.1,332.4h.8M407.3,316.5h.8M442.0,322.6h.8M432.5,302.1h.8M394.5,318.5h.8M426.8,298.8h.8M437.1,305.7h.8M412.2,294.9h.8M425.9,306.1h.8M411.3,312.6h.8M414.6,322.6h.8M434.7,314.2h.8M446.2,299.3h.8M412.6,317.9h.8M415.7,316.5h.8M426.9,316.7h.8M411.1,295.8h.8M448.3,301.4h.8M416.1,319.0h.8M424.7,302.2h.8M440.4,303.3h.8M414.3,294.0h.8M419.9,296.6h.8M410.8,322.0h.8M422.7,309.0h.8M410.2,320.7h.8M430.0,301.2h.8M403.5,307.6h.8M448.5,317.2h.8M454.2,302.4h.8M431.8,310.2h.8M451.5,320.6h.8M419.9,309.5h.8M452.9,310.4h.8M447.2,302.8h.8M437.6,307.6h.8M426.1,324.2h.8M401.7,311.2h.8M436.8,317.5h.8M417.8,299.6h.8M406.5,311.4h.8M412.7,291.3h.8M418.0,302.8h.8M413.2,311.7h.8M401.5,316.6h.8M422.1,323.2h.8M422.9,321.9h.8M418.4,315.9h.8M407.0,309.2h.8M412.9,316.6h.8M399.1,314.8h.8M416.5,305.9h.8M443.9,322.2h.8M397.7,314.6h.8M415.1,293.3h.8M422.8,313.6h.8M453.3,300.3h.8M444.7,330.2h.8M441.6,295.3h.8M445.8,308.6h.8M419.3,314.4h.8M433.8,320.4h.8M449.6,299.1h.8M395.8,313.2h.8M437.9,302.9h.8M441.5,326.7h.8M397.3,314.4h.8M404.9,296.5h.8M401.9,303.3h.8M416.3,325.9h.8M453.8,314.6h.8M424.3,331.9h.8M440.7,310.7h.8M430.8,289.2h.8M407.2,293.2h.8M446.8,305.0h.8M442.2,301.6h.8M427.1,330.0h.8M443.9,295.5h.8M413.1,301.7h.8M412.2,302.0h.8M412.6,293.4h.8M410.4,291.6h.8M404.3,321.2h.8M438.5,323.8h.8M430.0,333.0h.8M433.4,294.3h.8M420.2,324.0h.8M429.5,318.4h.8M401.7,315.2h.8M415.0,293.4h.8M413.3,292.4h.8M430.3,298.4h.8M413.9,309.5h.8M445.5,294.8h.8M406.4,329.1h.8M429.7,309.4h.8M412.7,295.6h.8M443.9,301.8h.8M406.0,297.8h.8M455.2,309.1h.8M445.0,321.3h.8M423.8,290.7h.8M444.9,306.1h.8M414.5,293.2h.8M420.2,328.0h.8M413.5,325.3h.8M448.1,318.5h.8M436.1,300.5h.8M433.5,302.7h.8M422.6,302.1h.8M437.5,308.2h.8M404.5,307.6h.8M440.0,322.6h.8M442.2,324.7h.8M401.6,305.9h.8M429.4,295.2h.8M427.3,298.5h.8M451.1,299.9h.8M402.0,302.0h.8M418.3,289.5h.8M419.2,308.1h.8M445.6,311.3h.8M417.3,316.7h.8M411.6,296.7h.8M413.1,316.6h.8M420.1,296.4h.8M395.5,310.9h.8M425.4,313.5h.8M440.4,302.1h.8M420.6,311.6h.8M409.5,332.7h.8M422.7,325.2h.8M402.4,314.8h.8M415.7,327.7h.8M422.1,292.9h.8M395.5,310.1h.8M403.5,295.4h.8M418.4,297.5h.8M426.2,296.5h.8M439.5,300.2h.8M423.1,304.3h.8M428.5,294.8h.8M430.1,310.2h.8M426.6,318.8h.8M435.0,322.0h.8M412.9,327.4h.8M437.8,295.3h.8M416.6,306.5h.8M430.0,330.4h.8M411.0,288.6h.8M406.9,297.9h.8M443.2,307.8h.8M417.4,334.5h.8M427.3,301.9h.8M411.5,311.3h.8M433.8,331.7h.8M412.9,326.1h.8M433.8,323.7h.8M438.3,324.2h.8M448.5,315.9h.8M427.4,311.9h.8M415.8,310.3h.8M397.7,303.8h.8M444.8,330.1h.8M426.9,311.9h.8M446.0,302.7h.8M443.7,316.6h.8" stroke="#111" stroke-width=".8" fill="none"/></g><polygon points="372.4,305.0 381.7,299.4 392.8,299.4 401.2,318.0 395.6,327.3 385.4,325.4" fill="#f2c530" stroke="#2a2a2a" stroke-width="0.7" stroke-linejoin="round" /><ellipse cx="388.6" cy="320.2" rx="4.8" ry="4.8" fill="#222" stroke="none" stroke-width="0" /><ellipse cx="312.0" cy="306.8" rx="13.9" ry="6.7" fill="#1a50b4" stroke="#0c3480" stroke-width="0.7" /><polygon points="300.8,293.8 309.2,289.2 321.3,292.9 320.3,299.4 312.9,303.1 301.7,299.4" fill="#9a9a9a" stroke="#444" stroke-width="0.6" stroke-linejoin="round" /><polygon points="305.5,290.1 311.0,287.3 317.5,289.2 312.9,291.9" fill="#b4b4b4" stroke="#444" stroke-width="0.5" stroke-linejoin="round" /><polyline points="312.9,284.9 322.2,286.0 331.5,289.7 339.3,292.3" fill="none" stroke="#4a4a4a" stroke-width="5.6" /><polyline points="312.9,284.9 322.2,286.0 331.5,289.7 339.3,292.3" fill="none" stroke="#8c8c8c" stroke-width="4.2" /><polyline points="312.9,284.9 322.2,286.0 331.5,289.7 339.3,292.3" fill="none" stroke="#3a3a3a" stroke-width="4.2" stroke-dasharray=".7 1.800"/><polygon points="290.6,263.1 297.1,262.2 298.0,275.2 292.4,277.4" fill="#9a9a9a" stroke="#555" stroke-width="0.5" stroke-linejoin="round" /><polygon points="304.5,241.7 310.1,242.7 311.4,288.2 306.4,288.2" fill="#5a3a22" stroke="#2a1a0c" stroke-width="0.5" stroke-linejoin="round" /><polygon points="293.4,232.4 298.0,228.7 312.9,231.5 318.1,236.2 310.1,243.6 294.3,238.9" fill="#3a2416" stroke="#1a0e06" stroke-width="0.6" stroke-linejoin="round" /><g font-family="Liberation Sans,sans-serif" font-size="16" fill="#000" stroke="#000" stroke-width=".3"><text x="23.500" y="336">Z</text><text x="5.500" y="354">Y</text><text x="41.500" y="354">X</text></g><path d="M28.500,355.500V340M28.500,355.500L16,351.500M28.500,355.500L41,351.500" stroke="#000" stroke-width="1" fill="none"/><path d="M26,345l2.500,-8 2.500,8z" fill="#1010d8"/><path d="M15,351l5,-1.500 2.500,3.500 -3.500,3z" fill="#18c018"/><path d="M42,351l-5,-1.500 -2.500,3.500 3.500,2.500z" fill="#c81010"/></svg><div class="abs" style="left:1px;top:1px;width:732px;height:236px;border:1px solid #f00"></div></div>
<div class="vp" style="left:2px;top:386px;width:366px;height:238px"><svg width="366" height="238" viewBox="2 386 366 238"><clipPath id="cf"><rect x="2" y="386" width="366" height="238"/></clipPath><g clip-path="url(#cf)"><g fill="none" stroke="#8c8c8c" stroke-width="0.9" opacity="0.17"><ellipse cx="81.9" cy="545.9" rx="3.3" ry="0.4"/><ellipse cx="79.2" cy="547.1" rx="3.4" ry="0.4"/><ellipse cx="76.2" cy="548.3" rx="3.5" ry="0.4"/><ellipse cx="73.1" cy="549.6" rx="3.6" ry="0.4"/><ellipse cx="69.8" cy="550.9" rx="3.7" ry="0.5"/><ellipse cx="93.5" cy="545.9" rx="3.3" ry="0.4"/><ellipse cx="91.0" cy="547.1" rx="3.4" ry="0.4"/><ellipse cx="88.4" cy="548.3" rx="3.5" ry="0.4"/><ellipse cx="85.6" cy="549.6" rx="3.6" ry="0.4"/><ellipse cx="82.7" cy="550.9" rx="3.7" ry="0.5"/><ellipse cx="105.0" cy="545.9" rx="3.3" ry="0.4"/><ellipse cx="102.8" cy="547.1" rx="3.4" ry="0.4"/><ellipse cx="100.5" cy="548.3" rx="3.4" ry="0.4"/><ellipse cx="98.1" cy="549.6" rx="3.6" ry="0.4"/><ellipse cx="95.6" cy="550.9" rx="3.7" ry="0.5"/><ellipse cx="116.5" cy="545.9" rx="3.3" ry="0.4"/><ellipse cx="114.7" cy="547.1" rx="3.3" ry="0.4"/><ellipse cx="112.7" cy="548.3" rx="3.4" ry="0.4"/><ellipse cx="110.6" cy="549.6" rx="3.5" ry="0.4"/><ellipse cx="108.5" cy="550.9" rx="3.6" ry="0.5"/><ellipse cx="128.1" cy="545.9" rx="3.2" ry="0.4"/><ellipse cx="126.5" cy="547.1" rx="3.3" ry="0.4"/><ellipse cx="124.9" cy="548.3" rx="3.4" ry="0.4"/><ellipse cx="123.1" cy="549.6" rx="3.5" ry="0.4"/><ellipse cx="121.3" cy="550.9" rx="3.6" ry="0.5"/><ellipse cx="139.6" cy="545.9" rx="3.2" ry="0.4"/><ellipse cx="138.3" cy="547.1" rx="3.3" ry="0.4"/><ellipse cx="137.0" cy="548.3" rx="3.4" ry="0.4"/><ellipse cx="135.7" cy="549.6" rx="3.5" ry="0.4"/><ellipse cx="134.2" cy="550.9" rx="3.6" ry="0.5"/><ellipse cx="151.1" cy="545.9" rx="3.2" ry="0.4"/><ellipse cx="150.2" cy="547.1" rx="3.3" ry="0.4"/><ellipse cx="149.2" cy="548.3" rx="3.4" ry="0.4"/><ellipse cx="148.2" cy="549.6" rx="3.5" ry="0.5"/><ellipse cx="147.0" cy="550.9" rx="3.6" ry="0.5"/><ellipse cx="162.6" cy="545.9" rx="3.2" ry="0.4"/><ellipse cx="162.0" cy="547.1" rx="3.3" ry="0.4"/><ellipse cx="161.4" cy="548.3" rx="3.4" ry="0.4"/><ellipse cx="160.7" cy="549.6" rx="3.5" ry="0.5"/><ellipse cx="159.9" cy="550.9" rx="3.6" ry="0.5"/><ellipse cx="174.2" cy="545.9" rx="3.2" ry="0.4"/><ellipse cx="173.9" cy="547.1" rx="3.3" ry="0.4"/><ellipse cx="173.5" cy="548.3" rx="3.4" ry="0.4"/><ellipse cx="173.2" cy="549.6" rx="3.5" ry="0.5"/><ellipse cx="172.8" cy="550.9" rx="3.6" ry="0.5"/><ellipse cx="185.7" cy="545.9" rx="3.2" ry="0.4"/><ellipse cx="185.7" cy="547.1" rx="3.3" ry="0.4"/><ellipse cx="185.7" cy="548.3" rx="3.4" ry="0.4"/><ellipse cx="185.7" cy="549.6" rx="3.5" ry="0.5"/><ellipse cx="185.6" cy="550.9" rx="3.6" ry="0.5"/><ellipse cx="197.2" cy="545.9" rx="3.2" ry="0.4"/><ellipse cx="197.5" cy="547.1" rx="3.3" ry="0.4"/><ellipse cx="197.8" cy="548.3" rx="3.4" ry="0.4"/><ellipse cx="198.1" cy="549.6" rx="3.5" ry="0.5"/><ellipse cx="198.5" cy="550.9" rx="3.6" ry="0.5"/><ellipse cx="208.7" cy="545.9" rx="3.2" ry="0.4"/><ellipse cx="209.3" cy="547.1" rx="3.3" ry="0.4"/><ellipse cx="210.0" cy="548.3" rx="3.4" ry="0.4"/><ellipse cx="210.6" cy="549.6" rx="3.5" ry="0.5"/><ellipse cx="211.3" cy="550.9" rx="3.6" ry="0.5"/><ellipse cx="220.3" cy="545.9" rx="3.2" ry="0.4"/><ellipse cx="221.2" cy="547.1" rx="3.3" ry="0.4"/><ellipse cx="222.1" cy="548.3" rx="3.4" ry="0.4"/><ellipse cx="223.1" cy="549.6" rx="3.5" ry="0.5"/><ellipse cx="224.2" cy="550.9" rx="3.6" ry="0.5"/><ellipse cx="231.8" cy="545.9" rx="3.2" ry="0.4"/><ellipse cx="233.0" cy="547.1" rx="3.3" ry="0.4"/><ellipse cx="234.3" cy="548.3" rx="3.4" ry="0.4"/><ellipse cx="235.6" cy="549.6" rx="3.5" ry="0.4"/><ellipse cx="237.1" cy="550.9" rx="3.6" ry="0.5"/><ellipse cx="243.3" cy="545.9" rx="3.2" ry="0.4"/><ellipse cx="244.8" cy="547.1" rx="3.3" ry="0.4"/><ellipse cx="246.4" cy="548.3" rx="3.4" ry="0.4"/><ellipse cx="248.1" cy="549.6" rx="3.5" ry="0.4"/><ellipse cx="249.9" cy="550.9" rx="3.6" ry="0.5"/><ellipse cx="254.8" cy="545.9" rx="3.2" ry="0.4"/><ellipse cx="256.6" cy="547.1" rx="3.3" ry="0.4"/><ellipse cx="258.6" cy="548.3" rx="3.4" ry="0.4"/><ellipse cx="260.6" cy="549.6" rx="3.5" ry="0.4"/><ellipse cx="262.8" cy="550.9" rx="3.6" ry="0.5"/><ellipse cx="266.3" cy="545.9" rx="3.3" ry="0.4"/><ellipse cx="268.5" cy="547.1" rx="3.3" ry="0.4"/><ellipse cx="270.7" cy="548.3" rx="3.4" ry="0.4"/><ellipse cx="273.1" cy="549.6" rx="3.5" ry="0.4"/><ellipse cx="275.6" cy="550.9" rx="3.6" ry="0.5"/><ellipse cx="277.8" cy="545.9" rx="3.3" ry="0.4"/><ellipse cx="280.3" cy="547.1" rx="3.4" ry="0.4"/><ellipse cx="282.9" cy="548.3" rx="3.5" ry="0.4"/><ellipse cx="285.6" cy="549.6" rx="3.6" ry="0.4"/><ellipse cx="288.5" cy="550.9" rx="3.7" ry="0.5"/><ellipse cx="289.4" cy="545.9" rx="3.3" ry="0.4"/><ellipse cx="292.1" cy="547.1" rx="3.4" ry="0.4"/><ellipse cx="295.0" cy="548.3" rx="3.5" ry="0.4"/><ellipse cx="298.1" cy="549.6" rx="3.6" ry="0.4"/><ellipse cx="301.3" cy="550.9" rx="3.7" ry="0.5"/><ellipse cx="300.9" cy="545.9" rx="3.3" ry="0.4"/><ellipse cx="303.9" cy="547.1" rx="3.4" ry="0.4"/><ellipse cx="307.1" cy="548.3" rx="3.5" ry="0.4"/><ellipse cx="310.5" cy="549.6" rx="3.6" ry="0.4"/><ellipse cx="314.1" cy="551.0" rx="3.7" ry="0.5"/></g><g fill="none" stroke="#8c8c8c" stroke-width="0.9" opacity="0.33"><ellipse cx="66.4" cy="552.4" rx="3.8" ry="0.5"/><ellipse cx="62.7" cy="553.9" rx="4.0" ry="0.5"/><ellipse cx="58.7" cy="555.5" rx="4.1" ry="0.6"/><ellipse cx="54.6" cy="557.3" rx="4.2" ry="0.6"/><ellipse cx="50.1" cy="559.1" rx="4.4" ry="0.6"/><ellipse cx="79.6" cy="552.4" rx="3.8" ry="0.5"/><ellipse cx="76.3" cy="553.9" rx="3.9" ry="0.5"/><ellipse cx="72.8" cy="555.5" rx="4.1" ry="0.6"/><ellipse cx="69.1" cy="557.3" rx="4.2" ry="0.6"/><ellipse cx="65.2" cy="559.1" rx="4.3" ry="0.6"/><ellipse cx="92.9" cy="552.4" rx="3.8" ry="0.5"/><ellipse cx="90.0" cy="553.9" rx="3.9" ry="0.5"/><ellipse cx="86.9" cy="555.5" rx="4.0" ry="0.6"/><ellipse cx="83.7" cy="557.3" rx="4.2" ry="0.6"/><ellipse cx="80.2" cy="559.1" rx="4.3" ry="0.6"/><ellipse cx="106.1" cy="552.4" rx="3.7" ry="0.5"/><ellipse cx="103.7" cy="553.9" rx="3.9" ry="0.5"/><ellipse cx="101.0" cy="555.5" rx="4.0" ry="0.6"/><ellipse cx="98.2" cy="557.3" rx="4.1" ry="0.6"/><ellipse cx="95.3" cy="559.1" rx="4.3" ry="0.6"/><ellipse cx="119.4" cy="552.4" rx="3.7" ry="0.5"/><ellipse cx="117.3" cy="553.9" rx="3.8" ry="0.5"/><ellipse cx="115.1" cy="555.5" rx="4.0" ry="0.6"/><ellipse cx="112.8" cy="557.3" rx="4.1" ry="0.6"/><ellipse cx="110.3" cy="559.1" rx="4.3" ry="0.6"/><ellipse cx="132.6" cy="552.4" rx="3.7" ry="0.5"/><ellipse cx="131.0" cy="553.9" rx="3.8" ry="0.5"/><ellipse cx="129.2" cy="555.5" rx="4.0" ry="0.6"/><ellipse cx="127.4" cy="557.3" rx="4.1" ry="0.6"/><ellipse cx="125.4" cy="559.1" rx="4.2" ry="0.6"/><ellipse cx="145.9" cy="552.4" rx="3.7" ry="0.5"/><ellipse cx="144.6" cy="553.9" rx="3.8" ry="0.5"/><ellipse cx="143.3" cy="555.5" rx="3.9" ry="0.6"/><ellipse cx="141.9" cy="557.3" rx="4.1" ry="0.6"/><ellipse cx="140.4" cy="559.1" rx="4.2" ry="0.7"/><ellipse cx="159.1" cy="552.4" rx="3.7" ry="0.5"/><ellipse cx="158.3" cy="553.9" rx="3.8" ry="0.5"/><ellipse cx="157.4" cy="555.5" rx="3.9" ry="0.6"/><ellipse cx="156.5" cy="557.3" rx="4.1" ry="0.6"/><ellipse cx="155.4" cy="559.1" rx="4.2" ry="0.7"/><ellipse cx="172.4" cy="552.4" rx="3.7" ry="0.5"/><ellipse cx="171.9" cy="553.9" rx="3.8" ry="0.5"/><ellipse cx="171.5" cy="555.5" rx="3.9" ry="0.6"/><ellipse cx="171.0" cy="557.3" rx="4.1" ry="0.6"/><ellipse cx="170.5" cy="559.1" rx="4.2" ry="0.7"/><ellipse cx="185.6" cy="552.4" rx="3.7" ry="0.5"/><ellipse cx="185.6" cy="553.9" rx="3.8" ry="0.5"/><ellipse cx="185.6" cy="555.5" rx="3.9" ry="0.6"/><ellipse cx="185.6" cy="557.3" rx="4.0" ry="0.6"/><ellipse cx="185.5" cy="559.1" rx="4.2" ry="0.7"/><ellipse cx="198.9" cy="552.4" rx="3.7" ry="0.5"/><ellipse cx="199.2" cy="553.9" rx="3.8" ry="0.5"/><ellipse cx="199.7" cy="555.5" rx="3.9" ry="0.6"/><ellipse cx="200.1" cy="557.3" rx="4.1" ry="0.6"/><ellipse cx="200.6" cy="559.1" rx="4.2" ry="0.7"/><ellipse cx="212.1" cy="552.4" rx="3.7" ry="0.5"/><ellipse cx="212.9" cy="553.9" rx="3.8" ry="0.5"/><ellipse cx="213.7" cy="555.5" rx="3.9" ry="0.6"/><ellipse cx="214.6" cy="557.3" rx="4.1" ry="0.6"/><ellipse cx="215.6" cy="559.1" rx="4.2" ry="0.7"/><ellipse cx="225.3" cy="552.4" rx="3.7" ry="0.5"/><ellipse cx="226.5" cy="553.9" rx="3.8" ry="0.5"/><ellipse cx="227.8" cy="555.5" rx="3.9" ry="0.6"/><ellipse cx="229.2" cy="557.3" rx="4.1" ry="0.6"/><ellipse cx="230.6" cy="559.1" rx="4.2" ry="0.7"/><ellipse cx="238.6" cy="552.4" rx="3.7" ry="0.5"/><ellipse cx="240.2" cy="553.9" rx="3.8" ry="0.5"/><ellipse cx="241.9" cy="555.5" rx="4.0" ry="0.6"/><ellipse cx="243.7" cy="557.3" rx="4.1" ry="0.6"/><ellipse cx="245.7" cy="559.1" rx="4.2" ry="0.6"/><ellipse cx="251.8" cy="552.4" rx="3.7" ry="0.5"/><ellipse cx="253.8" cy="553.9" rx="3.8" ry="0.5"/><ellipse cx="256.0" cy="555.5" rx="4.0" ry="0.6"/><ellipse cx="258.3" cy="557.3" rx="4.1" ry="0.6"/><ellipse cx="260.7" cy="559.1" rx="4.2" ry="0.6"/><ellipse cx="265.0" cy="552.4" rx="3.7" ry="0.5"/><ellipse cx="267.5" cy="553.9" rx="3.9" ry="0.5"/><ellipse cx="270.0" cy="555.5" rx="4.0" ry="0.6"/><ellipse cx="272.8" cy="557.3" rx="4.1" ry="0.6"/><ellipse cx="275.7" cy="559.1" rx="4.3" ry="0.6"/><ellipse cx="278.3" cy="552.4" rx="3.8" ry="0.5"/><ellipse cx="281.1" cy="553.9" rx="3.9" ry="0.5"/><ellipse cx="284.1" cy="555.5" rx="4.0" ry="0.6"/><ellipse cx="287.3" cy="557.3" rx="4.2" ry="0.6"/><ellipse cx="290.7" cy="559.1" rx="4.3" ry="0.6"/><ellipse cx="291.5" cy="552.4" rx="3.8" ry="0.5"/><ellipse cx="294.7" cy="553.9" rx="3.9" ry="0.5"/><ellipse cx="298.2" cy="555.5" rx="4.0" ry="0.6"/><ellipse cx="301.9" cy="557.3" rx="4.2" ry="0.6"/><ellipse cx="305.8" cy="559.1" rx="4.3" ry="0.6"/><ellipse cx="304.7" cy="552.4" rx="3.8" ry="0.5"/><ellipse cx="308.4" cy="553.9" rx="3.9" ry="0.5"/><ellipse cx="312.3" cy="555.5" rx="4.1" ry="0.6"/><ellipse cx="316.4" cy="557.3" rx="4.2" ry="0.6"/><ellipse cx="320.8" cy="559.1" rx="4.4" ry="0.6"/><ellipse cx="318.0" cy="552.4" rx="3.8" ry="0.5"/><ellipse cx="322.0" cy="553.9" rx="4.0" ry="0.5"/><ellipse cx="326.3" cy="555.5" rx="4.1" ry="0.5"/><ellipse cx="330.9" cy="557.3" rx="4.3" ry="0.6"/><ellipse cx="335.8" cy="559.1" rx="4.4" ry="0.6"/></g><g fill="none" stroke="#8c8c8c" stroke-width="0.9" opacity="0.50"><ellipse cx="45.3" cy="561.1" rx="4.6" ry="0.7"/><ellipse cx="40.2" cy="563.2" rx="4.7" ry="0.7"/><ellipse cx="34.7" cy="565.5" rx="4.9" ry="0.8"/><ellipse cx="60.9" cy="561.1" rx="4.5" ry="0.7"/><ellipse cx="56.4" cy="563.2" rx="4.7" ry="0.7"/><ellipse cx="51.4" cy="565.5" rx="4.9" ry="0.8"/><ellipse cx="76.5" cy="561.1" rx="4.5" ry="0.7"/><ellipse cx="72.5" cy="563.2" rx="4.6" ry="0.7"/><ellipse cx="68.2" cy="565.5" rx="4.8" ry="0.8"/><ellipse cx="92.1" cy="561.1" rx="4.4" ry="0.7"/><ellipse cx="88.6" cy="563.2" rx="4.6" ry="0.7"/><ellipse cx="85.0" cy="565.5" rx="4.8" ry="0.8"/><ellipse cx="107.6" cy="561.1" rx="4.4" ry="0.7"/><ellipse cx="104.8" cy="563.2" rx="4.6" ry="0.7"/><ellipse cx="101.7" cy="565.5" rx="4.7" ry="0.8"/><ellipse cx="123.2" cy="561.1" rx="4.4" ry="0.7"/><ellipse cx="120.9" cy="563.2" rx="4.5" ry="0.7"/><ellipse cx="118.5" cy="565.5" rx="4.7" ry="0.8"/><ellipse cx="138.8" cy="561.1" rx="4.4" ry="0.7"/><ellipse cx="137.1" cy="563.2" rx="4.5" ry="0.7"/><ellipse cx="135.2" cy="565.5" rx="4.7" ry="0.8"/><ellipse cx="154.4" cy="561.1" rx="4.3" ry="0.7"/><ellipse cx="153.2" cy="563.2" rx="4.5" ry="0.8"/><ellipse cx="152.0" cy="565.5" rx="4.7" ry="0.8"/><ellipse cx="169.9" cy="561.1" rx="4.3" ry="0.7"/><ellipse cx="169.3" cy="563.2" rx="4.5" ry="0.8"/><ellipse cx="168.7" cy="565.5" rx="4.7" ry="0.8"/><ellipse cx="185.5" cy="561.1" rx="4.3" ry="0.7"/><ellipse cx="185.5" cy="563.2" rx="4.5" ry="0.8"/><ellipse cx="185.4" cy="565.5" rx="4.7" ry="0.8"/><ellipse cx="201.1" cy="561.1" rx="4.3" ry="0.7"/><ellipse cx="201.6" cy="563.2" rx="4.5" ry="0.8"/><ellipse cx="202.2" cy="565.5" rx="4.7" ry="0.8"/><ellipse cx="216.6" cy="561.1" rx="4.3" ry="0.7"/><ellipse cx="217.7" cy="563.2" rx="4.5" ry="0.8"/><ellipse cx="218.9" cy="565.5" rx="4.7" ry="0.8"/><ellipse cx="232.2" cy="561.1" rx="4.4" ry="0.7"/><ellipse cx="233.9" cy="563.2" rx="4.5" ry="0.7"/><ellipse cx="235.7" cy="565.5" rx="4.7" ry="0.8"/><ellipse cx="247.7" cy="561.1" rx="4.4" ry="0.7"/><ellipse cx="250.0" cy="563.2" rx="4.5" ry="0.7"/><ellipse cx="252.4" cy="565.5" rx="4.7" ry="0.8"/><ellipse cx="263.3" cy="561.1" rx="4.4" ry="0.7"/><ellipse cx="266.1" cy="563.2" rx="4.6" ry="0.7"/><ellipse cx="269.1" cy="565.5" rx="4.7" ry="0.8"/><ellipse cx="278.9" cy="561.1" rx="4.4" ry="0.7"/><ellipse cx="282.2" cy="563.2" rx="4.6" ry="0.7"/><ellipse cx="285.8" cy="565.5" rx="4.8" ry="0.8"/><ellipse cx="294.4" cy="561.1" rx="4.5" ry="0.7"/><ellipse cx="298.3" cy="563.2" rx="4.6" ry="0.7"/><ellipse cx="302.6" cy="565.5" rx="4.8" ry="0.8"/><ellipse cx="310.0" cy="561.1" rx="4.5" ry="0.7"/><ellipse cx="314.4" cy="563.2" rx="4.7" ry="0.7"/><ellipse cx="319.3" cy="565.5" rx="4.9" ry="0.8"/><ellipse cx="325.5" cy="561.1" rx="4.5" ry="0.7"/><ellipse cx="330.6" cy="563.2" rx="4.7" ry="0.7"/><ellipse cx="336.0" cy="565.5" rx="4.9" ry="0.8"/><ellipse cx="341.0" cy="561.1" rx="4.6" ry="0.7"/><ellipse cx="346.7" cy="563.2" rx="4.8" ry="0.7"/><ellipse cx="352.7" cy="565.5" rx="5.0" ry="0.8"/></g><g fill="none" stroke="#8c8c8c" stroke-width="0.9" opacity="0.67"><ellipse cx="28.7" cy="568.0" rx="5.2" ry="0.8"/><ellipse cx="22.3" cy="570.6" rx="5.4" ry="0.9"/><ellipse cx="46.2" cy="568.0" rx="5.1" ry="0.8"/><ellipse cx="40.4" cy="570.6" rx="5.3" ry="0.9"/><ellipse cx="63.6" cy="568.0" rx="5.0" ry="0.8"/><ellipse cx="58.6" cy="570.6" rx="5.3" ry="0.9"/><ellipse cx="81.0" cy="568.0" rx="5.0" ry="0.9"/><ellipse cx="76.7" cy="570.6" rx="5.2" ry="0.9"/><ellipse cx="98.4" cy="568.0" rx="4.9" ry="0.9"/><ellipse cx="94.8" cy="570.6" rx="5.2" ry="0.9"/><ellipse cx="115.8" cy="568.0" rx="4.9" ry="0.9"/><ellipse cx="112.9" cy="570.6" rx="5.1" ry="0.9"/><ellipse cx="133.2" cy="568.0" rx="4.9" ry="0.9"/><ellipse cx="131.1" cy="570.6" rx="5.1" ry="0.9"/><ellipse cx="150.6" cy="568.0" rx="4.9" ry="0.9"/><ellipse cx="149.2" cy="570.6" rx="5.1" ry="0.9"/><ellipse cx="168.0" cy="568.0" rx="4.8" ry="0.9"/><ellipse cx="167.3" cy="570.6" rx="5.0" ry="0.9"/><ellipse cx="185.4" cy="568.0" rx="4.8" ry="0.9"/><ellipse cx="185.4" cy="570.6" rx="5.0" ry="0.9"/><ellipse cx="202.8" cy="568.0" rx="4.8" ry="0.9"/><ellipse cx="203.5" cy="570.6" rx="5.0" ry="0.9"/><ellipse cx="220.2" cy="568.0" rx="4.9" ry="0.9"/><ellipse cx="221.6" cy="570.6" rx="5.1" ry="0.9"/><ellipse cx="237.6" cy="568.0" rx="4.9" ry="0.9"/><ellipse cx="239.7" cy="570.6" rx="5.1" ry="0.9"/><ellipse cx="255.0" cy="568.0" rx="4.9" ry="0.9"/><ellipse cx="257.8" cy="570.6" rx="5.1" ry="0.9"/><ellipse cx="272.4" cy="568.0" rx="4.9" ry="0.9"/><ellipse cx="275.9" cy="570.6" rx="5.1" ry="0.9"/><ellipse cx="289.7" cy="568.0" rx="5.0" ry="0.9"/><ellipse cx="294.0" cy="570.6" rx="5.2" ry="0.9"/><ellipse cx="307.1" cy="568.0" rx="5.0" ry="0.8"/><ellipse cx="312.0" cy="570.6" rx="5.2" ry="0.9"/><ellipse cx="324.5" cy="568.0" rx="5.1" ry="0.8"/><ellipse cx="330.1" cy="570.6" rx="5.3" ry="0.9"/><ellipse cx="341.9" cy="568.0" rx="5.1" ry="0.8"/><ellipse cx="348.2" cy="570.6" rx="5.4" ry="0.9"/><ellipse cx="359.2" cy="568.0" rx="5.2" ry="0.8"/><ellipse cx="366.3" cy="570.6" rx="5.4" ry="0.9"/></g><g fill="none" stroke="#8c8c8c" stroke-width="0.9" opacity="0.83"><ellipse cx="15.3" cy="573.5" rx="5.6" ry="1.0"/><ellipse cx="7.7" cy="576.7" rx="5.9" ry="1.0"/><ellipse cx="34.2" cy="573.5" rx="5.6" ry="1.0"/><ellipse cx="27.5" cy="576.7" rx="5.8" ry="1.1"/><ellipse cx="53.1" cy="573.5" rx="5.5" ry="1.0"/><ellipse cx="47.2" cy="576.7" rx="5.8" ry="1.1"/><ellipse cx="72.0" cy="573.5" rx="5.4" ry="1.0"/><ellipse cx="67.0" cy="576.7" rx="5.7" ry="1.1"/><ellipse cx="90.9" cy="573.5" rx="5.4" ry="1.0"/><ellipse cx="86.7" cy="576.7" rx="5.6" ry="1.1"/><ellipse cx="109.8" cy="573.5" rx="5.3" ry="1.0"/><ellipse cx="106.4" cy="576.7" rx="5.6" ry="1.1"/><ellipse cx="128.7" cy="573.5" rx="5.3" ry="1.0"/><ellipse cx="126.1" cy="576.7" rx="5.5" ry="1.1"/><ellipse cx="147.6" cy="573.5" rx="5.3" ry="1.0"/><ellipse cx="145.9" cy="576.7" rx="5.5" ry="1.1"/><ellipse cx="166.5" cy="573.5" rx="5.3" ry="1.0"/><ellipse cx="165.6" cy="576.7" rx="5.5" ry="1.1"/><ellipse cx="185.3" cy="573.5" rx="5.3" ry="1.0"/><ellipse cx="185.3" cy="576.7" rx="5.5" ry="1.1"/><ellipse cx="204.2" cy="573.5" rx="5.3" ry="1.0"/><ellipse cx="205.0" cy="576.7" rx="5.5" ry="1.1"/><ellipse cx="223.1" cy="573.5" rx="5.3" ry="1.0"/><ellipse cx="224.7" cy="576.7" rx="5.5" ry="1.1"/><ellipse cx="242.0" cy="573.5" rx="5.3" ry="1.0"/><ellipse cx="244.4" cy="576.7" rx="5.5" ry="1.1"/><ellipse cx="260.8" cy="573.5" rx="5.3" ry="1.0"/><ellipse cx="264.1" cy="576.7" rx="5.6" ry="1.1"/><ellipse cx="279.7" cy="573.5" rx="5.4" ry="1.0"/><ellipse cx="283.8" cy="576.7" rx="5.6" ry="1.1"/><ellipse cx="298.5" cy="573.5" rx="5.4" ry="1.0"/><ellipse cx="303.5" cy="576.7" rx="5.7" ry="1.1"/><ellipse cx="317.4" cy="573.5" rx="5.5" ry="1.0"/><ellipse cx="323.2" cy="576.7" rx="5.7" ry="1.1"/><ellipse cx="336.2" cy="573.5" rx="5.5" ry="1.0"/><ellipse cx="342.9" cy="576.7" rx="5.8" ry="1.1"/><ellipse cx="355.1" cy="573.5" rx="5.6" ry="1.0"/><ellipse cx="362.6" cy="576.7" rx="5.9" ry="1.0"/><ellipse cx="373.9" cy="573.5" rx="5.7" ry="0.9"/></g><g fill="none" stroke="#8c8c8c" stroke-width="0.9" opacity="1.00"><ellipse cx="-0.6" cy="580.1" rx="6.3" ry="1.1"/><ellipse cx="20.1" cy="580.1" rx="6.2" ry="1.2"/><ellipse cx="12.0" cy="583.9" rx="6.5" ry="1.3"/><ellipse cx="3.0" cy="588.1" rx="6.9" ry="1.4"/><ellipse cx="-6.9" cy="592.7" rx="7.3" ry="1.5" transform="rotate(176 -6.9 592.7)"/><ellipse cx="40.8" cy="580.1" rx="6.1" ry="1.2"/><ellipse cx="33.7" cy="583.9" rx="6.4" ry="1.3"/><ellipse cx="25.8" cy="588.1" rx="6.8" ry="1.4"/><ellipse cx="17.2" cy="592.7" rx="7.2" ry="1.6"/><ellipse cx="7.5" cy="597.8" rx="7.6" ry="1.7" transform="rotate(176 7.5 597.8)"/><ellipse cx="-3.3" cy="603.6" rx="8.2" ry="1.9" transform="rotate(175 -3.3 603.6)"/><ellipse cx="61.4" cy="580.1" rx="6.0" ry="1.2"/><ellipse cx="55.3" cy="583.9" rx="6.3" ry="1.3"/><ellipse cx="48.6" cy="588.1" rx="6.6" ry="1.4"/><ellipse cx="41.2" cy="592.7" rx="7.0" ry="1.6"/><ellipse cx="32.9" cy="597.8" rx="7.5" ry="1.8"/><ellipse cx="23.6" cy="603.6" rx="8.0" ry="2.0" transform="rotate(176 23.6 603.6)"/><ellipse cx="13.1" cy="610.1" rx="8.6" ry="2.2" transform="rotate(175 13.1 610.1)"/><ellipse cx="1.1" cy="617.5" rx="9.3" ry="2.5" transform="rotate(174 1.1 617.5)"/><ellipse cx="82.1" cy="580.1" rx="5.9" ry="1.2"/><ellipse cx="77.0" cy="583.9" rx="6.2" ry="1.3"/><ellipse cx="71.4" cy="588.1" rx="6.6" ry="1.4"/><ellipse cx="65.2" cy="592.7" rx="6.9" ry="1.6"/><ellipse cx="58.3" cy="597.8" rx="7.4" ry="1.8"/><ellipse cx="50.5" cy="603.6" rx="7.9" ry="2.0"/><ellipse cx="41.7" cy="610.1" rx="8.4" ry="2.2" transform="rotate(176 41.7 610.1)"/><ellipse cx="31.8" cy="617.5" rx="9.1" ry="2.6" transform="rotate(175 31.8 617.5)"/><ellipse cx="20.3" cy="626.0" rx="9.8" ry="2.9" transform="rotate(174 20.3 626.0)"/><ellipse cx="102.7" cy="580.1" rx="5.9" ry="1.2"/><ellipse cx="98.6" cy="583.9" rx="6.1" ry="1.3"/><ellipse cx="94.1" cy="588.1" rx="6.5" ry="1.5"/><ellipse cx="89.2" cy="592.7" rx="6.8" ry="1.6"/><ellipse cx="83.6" cy="597.8" rx="7.3" ry="1.8"/><ellipse cx="77.4" cy="603.6" rx="7.7" ry="2.0"/><ellipse cx="70.4" cy="610.1" rx="8.3" ry="2.3"/><ellipse cx="62.4" cy="617.5" rx="8.9" ry="2.6" transform="rotate(176 62.4 617.5)"/><ellipse cx="53.2" cy="626.0" rx="9.6" ry="3.0" transform="rotate(175 53.2 626.0)"/><ellipse cx="123.4" cy="580.1" rx="5.8" ry="1.2"/><ellipse cx="120.3" cy="583.9" rx="6.1" ry="1.3"/><ellipse cx="116.9" cy="588.1" rx="6.4" ry="1.5"/><ellipse cx="113.2" cy="592.7" rx="6.8" ry="1.6"/><ellipse cx="109.0" cy="597.8" rx="7.2" ry="1.8"/><ellipse cx="104.3" cy="603.6" rx="7.6" ry="2.1"/><ellipse cx="99.0" cy="610.1" rx="8.1" ry="2.3"/><ellipse cx="93.0" cy="617.5" rx="8.7" ry="2.6"/><ellipse cx="86.1" cy="626.0" rx="9.4" ry="3.0"/><ellipse cx="144.0" cy="580.1" rx="5.8" ry="1.2"/><ellipse cx="141.9" cy="583.9" rx="6.1" ry="1.3"/><ellipse cx="139.7" cy="588.1" rx="6.4" ry="1.5"/><ellipse cx="137.1" cy="592.7" rx="6.7" ry="1.7"/><ellipse cx="134.3" cy="597.8" rx="7.1" ry="1.8"/><ellipse cx="131.2" cy="603.6" rx="7.5" ry="2.1"/><ellipse cx="127.6" cy="610.1" rx="8.0" ry="2.3"/><ellipse cx="123.6" cy="617.5" rx="8.6" ry="2.7"/><ellipse cx="119.0" cy="626.0" rx="9.3" ry="3.1"/><ellipse cx="164.6" cy="580.1" rx="5.8" ry="1.2"/><ellipse cx="163.6" cy="583.9" rx="6.0" ry="1.4"/><ellipse cx="162.4" cy="588.1" rx="6.3" ry="1.5"/><ellipse cx="161.1" cy="592.7" rx="6.7" ry="1.7"/><ellipse cx="159.7" cy="597.8" rx="7.1" ry="1.9"/><ellipse cx="158.1" cy="603.6" rx="7.5" ry="2.1"/><ellipse cx="156.3" cy="610.1" rx="8.0" ry="2.4"/><ellipse cx="154.2" cy="617.5" rx="8.5" ry="2.7"/><ellipse cx="151.8" cy="626.0" rx="9.2" ry="3.1"/><ellipse cx="185.3" cy="580.1" rx="5.7" ry="1.2"/><ellipse cx="185.2" cy="583.9" rx="6.0" ry="1.4"/><ellipse cx="185.2" cy="588.0" rx="6.3" ry="1.5"/><ellipse cx="185.1" cy="592.7" rx="6.7" ry="1.7"/><ellipse cx="185.0" cy="597.8" rx="7.1" ry="1.9"/><ellipse cx="185.0" cy="603.6" rx="7.5" ry="2.1"/><ellipse cx="184.9" cy="610.1" rx="8.0" ry="2.4"/><ellipse cx="184.8" cy="617.5" rx="8.5" ry="2.7"/><ellipse cx="184.7" cy="626.0" rx="9.1" ry="3.1"/><ellipse cx="205.9" cy="580.1" rx="5.7" ry="1.2"/><ellipse cx="206.9" cy="583.9" rx="6.0" ry="1.4"/><ellipse cx="207.9" cy="588.0" rx="6.3" ry="1.5"/><ellipse cx="209.1" cy="592.7" rx="6.7" ry="1.7"/><ellipse cx="210.4" cy="597.8" rx="7.1" ry="1.9"/><ellipse cx="211.8" cy="603.6" rx="7.5" ry="2.1"/><ellipse cx="213.5" cy="610.1" rx="8.0" ry="2.4"/><ellipse cx="215.4" cy="617.5" rx="8.5" ry="2.7"/><ellipse cx="217.5" cy="626.0" rx="9.2" ry="3.1"/><ellipse cx="226.5" cy="580.1" rx="5.8" ry="1.2"/><ellipse cx="228.5" cy="583.9" rx="6.0" ry="1.3"/><ellipse cx="230.6" cy="588.0" rx="6.4" ry="1.5"/><ellipse cx="233.0" cy="592.7" rx="6.7" ry="1.7"/><ellipse cx="235.7" cy="597.8" rx="7.1" ry="1.8"/><ellipse cx="238.7" cy="603.6" rx="7.5" ry="2.1"/><ellipse cx="242.1" cy="610.1" rx="8.0" ry="2.4"/><ellipse cx="245.9" cy="617.5" rx="8.6" ry="2.7"/><ellipse cx="250.4" cy="626.0" rx="9.2" ry="3.1"/><ellipse cx="247.1" cy="580.1" rx="5.8" ry="1.2"/><ellipse cx="250.1" cy="583.9" rx="6.1" ry="1.3"/><ellipse cx="253.4" cy="588.0" rx="6.4" ry="1.5"/><ellipse cx="257.0" cy="592.7" rx="6.8" ry="1.6"/><ellipse cx="261.0" cy="597.8" rx="7.2" ry="1.8"/><ellipse cx="265.6" cy="603.6" rx="7.6" ry="2.1"/><ellipse cx="270.7" cy="610.1" rx="8.1" ry="2.3"/><ellipse cx="276.5" cy="617.5" rx="8.7" ry="2.6"/><ellipse cx="283.2" cy="625.9" rx="9.4" ry="3.0"/><ellipse cx="267.8" cy="580.1" rx="5.8" ry="1.2"/><ellipse cx="271.7" cy="583.9" rx="6.1" ry="1.3"/><ellipse cx="276.1" cy="588.0" rx="6.5" ry="1.5"/><ellipse cx="281.0" cy="592.7" rx="6.8" ry="1.6"/><ellipse cx="286.4" cy="597.8" rx="7.2" ry="1.8"/><ellipse cx="292.4" cy="603.5" rx="7.7" ry="2.0"/><ellipse cx="299.3" cy="610.1" rx="8.2" ry="2.3"/><ellipse cx="307.1" cy="617.4" rx="8.8" ry="2.6"/><ellipse cx="316.0" cy="625.9" rx="9.5" ry="3.0" transform="rotate(-175 316.0 625.9)"/><ellipse cx="288.4" cy="580.1" rx="5.9" ry="1.2"/><ellipse cx="293.3" cy="583.9" rx="6.2" ry="1.3"/><ellipse cx="298.8" cy="588.0" rx="6.5" ry="1.4"/><ellipse cx="304.9" cy="592.7" rx="6.9" ry="1.6"/><ellipse cx="311.7" cy="597.8" rx="7.3" ry="1.8"/><ellipse cx="319.3" cy="603.5" rx="7.8" ry="2.0"/><ellipse cx="327.8" cy="610.0" rx="8.4" ry="2.3" transform="rotate(-176 327.8 610.0)"/><ellipse cx="337.6" cy="617.4" rx="9.0" ry="2.6" transform="rotate(-175 337.6 617.4)"/><ellipse cx="348.8" cy="625.9" rx="9.8" ry="2.9" transform="rotate(-175 348.8 625.9)"/><ellipse cx="309.0" cy="580.1" rx="6.0" ry="1.2"/><ellipse cx="315.0" cy="583.9" rx="6.3" ry="1.3"/><ellipse cx="321.5" cy="588.0" rx="6.6" ry="1.4"/><ellipse cx="328.9" cy="592.7" rx="7.0" ry="1.6"/><ellipse cx="337.0" cy="597.8" rx="7.5" ry="1.8"/><ellipse cx="346.1" cy="603.5" rx="8.0" ry="2.0" transform="rotate(-176 346.1 603.5)"/><ellipse cx="356.4" cy="610.0" rx="8.5" ry="2.2" transform="rotate(-175 356.4 610.0)"/><ellipse cx="368.1" cy="617.4" rx="9.2" ry="2.5" transform="rotate(-175 368.1 617.4)"/><ellipse cx="329.6" cy="580.1" rx="6.0" ry="1.2"/><ellipse cx="336.6" cy="583.9" rx="6.4" ry="1.3"/><ellipse cx="344.3" cy="588.0" rx="6.7" ry="1.4"/><ellipse cx="352.8" cy="592.6" rx="7.1" ry="1.6"/><ellipse cx="362.3" cy="597.8" rx="7.6" ry="1.7" transform="rotate(-176 362.3 597.8)"/><ellipse cx="372.9" cy="603.5" rx="8.1" ry="1.9" transform="rotate(-175 372.9 603.5)"/><ellipse cx="350.2" cy="580.1" rx="6.1" ry="1.2"/><ellipse cx="358.2" cy="583.9" rx="6.5" ry="1.3"/><ellipse cx="367.0" cy="588.0" rx="6.8" ry="1.4"/><ellipse cx="376.7" cy="592.6" rx="7.3" ry="1.5" transform="rotate(-176 376.7 592.6)"/><ellipse cx="370.8" cy="580.1" rx="6.2" ry="1.1"/></g><path d="M77.6,545.4L-285.0,687.8M134.5,545.4L-37.9,687.7M191.4,545.4L208.5,687.5M248.3,545.4L454.4,687.4M305.1,545.4L699.8,687.3M77.6,545.4L305.1,545.4M61.6,551.6L322.5,551.7M40.1,560.1L346.0,560.1M9.6,572.0L379.3,572.0M-36.9,590.3L430.0,590.3M-116.6,621.6L516.8,621.5M-285.0,687.8L699.8,687.3" stroke="#000" stroke-width="1.0" fill="none" shape-rendering="crispEdges"/></g><polygon points="130.9,483.6 138.7,481.8 138.7,494.8 133.7,494.8" fill="#3a2416" stroke="none" stroke-width="0.7" stroke-linejoin="round" /><polygon points="231.7,478.0 237.8,477.1 236.9,490.1 232.2,495.7" fill="#151515" stroke="none" stroke-width="0.7" stroke-linejoin="round" /><polygon points="244.3,547.4 256.4,549.3 258.3,559.5 244.3,559.5" fill="#8f9392" stroke="#444" stroke-width="0.5" stroke-linejoin="round" /><polygon points="102.6,559.9 110.5,559.1 110.5,574.4 103.9,574.4" fill="#151a1c" stroke="none" stroke-width="0.7" stroke-linejoin="round" /><polygon points="250.3,561.4 257.3,562.3 257.3,576.2 250.3,576.6" fill="#151a1c" stroke="none" stroke-width="0.7" stroke-linejoin="round" /><polygon points="258.3,568.4 263.9,569.7 264.8,574.4 258.3,574.0" fill="#1a50b4" stroke="none" stroke-width="0.7" stroke-linejoin="round" /><polygon points="143.0,426.0 156.0,425.4 156.9,429.1 143.0,429.1" fill="#f2c530" stroke="#1c1c1c" stroke-width="0.5" stroke-linejoin="round" /><polygon points="159.7,413.9 209.0,413.9 209.0,429.1 159.7,429.1" fill="#f2c530" stroke="#1c1c1c" stroke-width="0.5" stroke-linejoin="round" /><ellipse cx="218.9" cy="417.6" rx="8.4" ry="2.6" fill="#e2b52c" stroke="#9a7a18" stroke-width="0.5" /><ellipse cx="218.9" cy="421.0" rx="8.9" ry="2.6" fill="#e8c040" stroke="#9a7a18" stroke-width="0.5" /><ellipse cx="218.9" cy="424.1" rx="8.2" ry="1.9" fill="#f4e6b0" stroke="#9a7a18" stroke-width="0.5" /><polygon points="136.1,429.1 233.5,429.1 233.5,438.4 136.1,438.4" fill="#f2c530" stroke="#1c1c1c" stroke-width="0.6" stroke-linejoin="round" /><polyline points="138.0,434.3 169.0,434.3" fill="none" stroke="#6a60e0" stroke-width="1" /><polyline points="201.2,434.3 232.2,434.3" fill="none" stroke="#6a60e0" stroke-width="1" /><polygon points="136.1,438.4 233.5,438.4 233.5,473.4 230.4,490.1 230.4,527.3 139.3,524.5 139.3,490.1 136.1,473.4" fill="#8690e4" stroke="#5a5ae0" stroke-width="0.8" stroke-linejoin="round" fill-opacity=".93"/><polygon points="151.4,457.6 218.3,457.6 218.3,490.1 151.4,490.1" fill="none" stroke="#7078c8" stroke-width="0.6" stroke-linejoin="round" /><polygon points="145.8,452.9 223.9,452.9 223.9,497.6 145.8,497.6" fill="none" stroke="#7a82d4" stroke-width="0.5" stroke-linejoin="round" /><polyline points="138.7,439.9 143.9,447.4 143.9,505.9" fill="none" stroke="#7a82d4" stroke-width="0.6" /><polyline points="232.2,439.9 226.7,447.4 226.7,505.9" fill="none" stroke="#7a82d4" stroke-width="0.6" /><polyline points="166.2,492.0 203.4,492.0 203.4,497.6 166.2,497.6 166.2,492.0" fill="none" stroke="#7078c8" stroke-width="0.5" /><ellipse cx="184.8" cy="508.4" rx="13.9" ry="7.8" fill="none" stroke="#7a82d4" stroke-width="0.7" /><polyline points="136.1,441.8 136.1,473.4" fill="none" stroke="#5548e0" stroke-width="1.2" /><polyline points="233.5,441.8 233.5,473.4" fill="none" stroke="#5548e0" stroke-width="1.2" /><polygon points="172.4,409.2 197.8,409.2 197.8,413.9 172.4,413.9" fill="#fff" stroke="#1c1c1c" stroke-width="0.6" stroke-linejoin="round" /><polygon points="170.0,413.5 200.3,413.5 197.8,441.8 172.4,441.8" fill="#f0d060" stroke="#8a6a10" stroke-width="0.6" stroke-linejoin="round" /><polygon points="177.4,419.5 192.6,419.5 192.6,434.7 177.4,434.7" fill="#d9a820" stroke="#a07c14" stroke-width="0.6" stroke-linejoin="round" /><polygon points="182.0,393.4 187.1,393.4 187.1,448.3 182.0,448.3" fill="#0a0ac8" stroke="none" stroke-width="0.7" stroke-linejoin="round" /><polygon points="184.8,385.1 187.1,387.9 189.9,399.0 187.4,403.1 184.8,409.8 182.2,403.1 180.4,399.0 182.4,387.9" fill="#c81414" stroke="none" stroke-width="0.7" stroke-linejoin="round" /><polygon points="183.0,384.5 186.7,384.5 187.4,389.7 182.2,389.7" fill="#0a0ac8" stroke="none" stroke-width="0.7" stroke-linejoin="round" /><polygon points="186.7,444.0 230.9,444.0 230.4,441.8 259.2,446.4 230.4,451.5 230.9,449.2 186.7,449.2" fill="#d01414" stroke="none" stroke-width="0.7" stroke-linejoin="round" /><polygon points="228.5,454.4 236.9,450.2 236.9,452.0 249.0,449.2 251.0,453.3 249.0,457.6 236.9,456.7 236.9,458.9" fill="#0a0ac8" stroke="none" stroke-width="0.7" stroke-linejoin="round" /><ellipse cx="184.8" cy="451.5" rx="4.1" ry="4.1" fill="#14c81e" stroke="none" stroke-width="0" /><polygon points="134.6,514.1 149.1,514.1 149.1,518.6 134.6,518.6" fill="#f2c530" stroke="#1c1c1c" stroke-width="0.6" stroke-linejoin="round" /><polygon points="159.7,514.1 174.2,514.1 174.2,518.6 159.7,518.6" fill="#f2c530" stroke="#1c1c1c" stroke-width="0.6" stroke-linejoin="round" /><polygon points="185.2,514.1 199.7,514.1 199.7,518.6 185.2,518.6" fill="#f2c530" stroke="#1c1c1c" stroke-width="0.6" stroke-linejoin="round" /><polygon points="210.9,514.1 225.4,514.1 225.4,518.6 210.9,518.6" fill="#f2c530" stroke="#1c1c1c" stroke-width="0.6" stroke-linejoin="round" /><polygon points="113.2,518.6 245.8,518.6 245.8,527.9 244.3,527.9 244.3,555.8 119.8,555.8 119.8,530.7 113.2,530.7" fill="#f2c530" stroke="#1c1c1c" stroke-width="0.7" stroke-linejoin="round" /><polyline points="117.9,527.9 238.8,527.9 238.8,553.9" fill="none" stroke="#1c1c1c" stroke-width="0.6" /><polygon points="109.5,555.8 113.2,551.1 121.6,551.1 121.6,580.0 113.2,580.0 109.5,574.4" fill="#f2c530" stroke="#1c1c1c" stroke-width="0.6" stroke-linejoin="round" /><polygon points="238.8,546.5 247.1,546.5 250.8,555.8 250.8,581.8 238.8,581.8" fill="#f2c530" stroke="#1c1c1c" stroke-width="0.6" stroke-linejoin="round" /><polyline points="203.4,553.9 233.2,553.9 233.2,541.8" fill="none" stroke="#6a60e0" stroke-width="1.2" /><rect x="119.8" y="553.9" width="119.0" height="27.9" fill="#5b9bd5"/><path d="M137.1,540.0v9.7M160.9,541.4v6.7M122.5,545.0v8.6M136.9,547.7v10.7M176.0,538.8v12.4M131.4,541.5v14.7M155.7,543.4v12.7M125.8,543.6v11.9M141.2,531.2v14.7M152.4,543.0v14.8M168.1,546.4v9.9M173.7,538.3v15.4M178.8,532.3v7.4M135.7,547.2v10.4M162.4,535.8v11.1M146.7,536.7v11.9M159.6,546.1v12.8M182.1,545.3v15.9M165.3,533.5v14.6M184.4,546.2v11.7M168.1,534.3v14.3M158.9,535.6v6.6M177.2,547.6v6.9M173.7,537.7v7.5M140.7,543.8v14.7M124.5,541.2v6.4M168.4,536.3v14.8M185.4,539.3v16.0M141.8,532.0v12.0M123.7,534.1v10.1M161.3,533.4v6.4M178.1,536.0v15.6M180.0,537.1v10.6M155.5,541.7v12.0M158.0,541.3v15.4M154.6,538.1v13.2M137.1,535.8v15.8M155.5,540.1v6.1M148.6,540.6v6.2M161.7,541.5v6.6M162.4,538.7v12.8M144.6,542.8v13.4M123.1,531.7v12.8M184.3,535.0v10.6M160.2,536.2v9.6M142.0,537.0v12.0M141.2,537.1v13.7M123.4,540.4v13.4M141.8,534.5v14.0M137.1,533.9v10.4M167.0,532.4v9.2M143.3,544.9v10.4M177.3,533.6v9.4M163.9,545.8v10.5M136.3,532.7v11.3M134.0,544.5v14.4M133.6,535.4v14.1M163.4,544.5v9.5M130.1,535.7v13.9M139.3,536.6v10.2M148.9,537.7v15.2M131.8,530.8v15.4M178.9,547.6v10.3M183.4,546.5v8.2M170.1,545.0v12.6M155.4,535.6v9.4M136.4,531.8v11.9M140.3,544.5v6.5M180.4,542.5v15.2M180.0,546.1v11.8M122.5,543.4v7.7M141.1,542.0v11.2M148.5,546.7v12.1M143.8,535.0v14.6M152.7,544.1v9.5M134.5,539.8v14.2M132.8,544.2v15.2M174.1,544.8v6.1M162.5,545.4v6.5M139.3,535.3v11.3M149.1,538.8v13.8M121.7,531.6v7.3M129.7,531.9v15.7M177.2,532.2v11.0M142.2,536.1v9.5M163.7,540.7v9.6M134.0,536.3v7.2M157.8,542.9v9.8M126.8,533.7v9.7M160.9,544.1v9.8M173.7,541.3v10.3M145.8,539.2v13.0M149.0,542.6v10.6M137.6,539.8v13.0M126.3,537.9v10.3M178.9,546.7v9.7M180.0,544.2v8.6M151.8,532.8v14.1M164.7,545.9v13.9M165.1,543.2v11.6M128.3,540.7v6.0M131.0,543.9v6.4M127.6,532.4v14.8M133.3,531.1v14.4M129.5,545.1v12.7M176.0,547.0v11.8M173.6,531.3v13.7M154.9,542.9v7.1M170.4,546.7v6.6M142.7,540.3v14.3M137.4,533.8v8.5M161.7,543.6v9.9M145.5,537.5v9.5M148.8,532.1v11.0M184.9,537.7v13.5M132.1,542.5v13.6M165.5,539.5v10.8M163.5,546.0v7.5M127.8,543.5v15.2M155.3,538.3v13.2M133.7,535.3v8.0M159.7,536.1v8.3M166.6,547.0v9.0M167.5,537.7v14.5M159.7,535.2v8.2M123.1,538.9v9.8M132.8,536.8v9.2M172.0,533.1v15.9M152.8,540.9v10.7M175.9,544.7v11.6M152.9,543.0v14.6M147.7,543.2v15.6M152.0,534.6v8.3M168.3,542.2v15.6M177.2,534.8v7.9M138.4,533.9v13.0M177.5,546.1v8.6M177.9,536.0v10.2M169.1,532.2v6.9M175.9,535.7v9.6M159.4,542.2v6.1M143.4,538.1v10.9M135.3,540.7v15.6M147.1,540.0v7.2M139.5,542.1v7.1M179.3,546.2v7.0M182.9,537.1v13.7M170.9,535.7v12.8M164.2,544.5v8.7M170.7,547.1v12.7M156.5,532.6v10.9M144.5,543.0v12.8M158.5,533.8v12.5M162.7,533.7v14.9M164.3,532.8v15.3M130.8,536.4v13.2M160.5,540.2v12.5M151.4,536.0v7.8M126.1,542.9v13.5M157.0,543.3v9.6M138.9,537.2v14.7M124.4,539.3v8.5M171.7,536.7v9.3M147.9,539.9v13.7M144.6,545.2v7.1M139.2,532.4v7.1M172.3,543.1v7.8M133.9,537.8v13.4M174.7,543.5v11.9M131.1,537.5v7.9" stroke="#5b9bd5" stroke-width="1.3" fill="none"/><path d="M134.1,578.2v8.6M128.6,577.7v8.6M181.0,586.3v11.9M133.2,583.3v7.5M129.8,578.2v6.9M181.7,586.7v12.3M173.0,579.2v7.8M161.0,585.5v12.7M178.4,578.0v10.5M164.1,582.9v6.6M150.5,578.0v13.4M177.4,583.4v7.7M180.4,583.7v12.9M176.2,582.9v8.7M159.1,582.0v6.5M138.9,586.5v5.4M121.1,584.3v7.5M154.7,582.5v8.1M186.5,579.3v8.7M131.8,584.4v7.5M142.4,585.7v7.9M156.3,587.6v5.9M122.1,579.6v11.9M160.2,579.7v8.0M130.1,582.3v5.4M165.9,587.5v13.6M168.5,588.2v5.2M137.8,588.3v12.0M146.1,588.0v10.6M174.2,580.4v6.7M148.4,578.6v8.4M184.1,580.8v5.1M121.0,578.9v12.1M142.8,580.4v5.9M185.4,581.9v6.9M122.0,577.6v6.5M164.5,578.7v5.4M151.6,579.9v14.0M126.3,583.2v12.0M146.1,588.5v9.3M134.5,581.8v5.3M146.9,579.9v13.0M175.1,582.8v5.3M135.4,579.8v6.9M133.8,587.2v6.3M121.4,587.8v10.1M186.0,581.7v13.1M162.9,586.2v11.7M151.9,578.0v6.9M178.0,587.5v13.3M141.0,584.7v12.2M162.1,586.5v9.8M162.9,585.0v7.4M181.4,588.2v5.7M184.7,588.2v11.0M121.0,587.5v6.1M184.5,584.8v5.5M129.4,584.4v10.1M169.2,587.8v7.0M118.1,587.8v5.1M178.2,578.3v12.3M171.8,587.3v10.0M178.3,579.3v11.0M140.6,587.4v12.0M150.3,583.1v5.2M120.2,583.9v9.4M177.4,584.1v6.2M142.8,586.0v9.7M118.6,586.8v12.4M123.7,583.3v8.4M172.1,580.6v7.1M151.4,588.3v5.9M125.8,584.2v13.0M153.1,582.0v12.7M171.3,577.7v12.9M131.4,580.5v12.5M147.0,586.3v6.5M178.0,579.0v6.3M151.9,580.9v9.9M180.1,585.3v5.1M139.3,583.4v9.4M167.1,582.6v5.7M134.8,586.9v8.2M170.6,588.5v10.6M164.4,584.1v7.8M180.7,582.4v13.2M138.9,587.1v12.1M160.1,582.1v6.3M170.9,581.2v11.0M127.1,577.9v6.3M173.6,579.0v13.1M143.5,583.7v8.2M160.6,578.1v8.6M182.3,579.1v10.9M140.4,580.5v5.2M119.3,588.1v12.5M173.0,586.4v13.6M128.8,583.8v9.5M157.4,588.0v11.8M184.5,578.3v10.9M164.4,585.7v10.6M175.1,580.5v13.4M145.8,584.0v13.1M166.3,580.6v7.1M140.4,584.3v14.0M179.7,581.7v8.6M174.1,580.3v8.7M118.8,579.1v9.9M165.6,584.2v8.3M183.3,584.3v6.4M122.6,588.4v13.9M181.2,584.0v7.8M124.2,580.0v7.0M181.8,587.4v12.0M128.1,579.8v7.7M183.1,578.9v12.1M164.7,583.4v13.6M135.9,583.1v6.4M124.5,577.3v7.8M126.3,577.7v13.9M137.8,587.4v11.3M168.2,584.6v13.6M178.3,585.4v10.0M165.6,585.4v10.0M152.5,578.8v12.6M151.2,577.8v6.5M178.1,580.0v8.5M164.8,587.1v8.0M144.5,581.9v5.3M178.2,577.2v13.6M128.4,578.8v12.6M174.5,579.7v10.0M150.7,585.4v6.7M174.7,588.6v11.4M181.3,588.0v8.4M176.2,586.7v10.3M125.3,584.2v13.2M138.9,584.5v13.1M159.2,577.4v10.7M135.5,587.0v11.0" stroke="#5b9bd5" stroke-width="1.2" fill="none"/><path d="M160.7,595.3v8.8M182.7,595.3v9.5M119.9,588.5v9.7M162.5,599.2v4.7M150.2,583.1v7.3M157.4,577.3v5.3M137.1,599.6v8.6M128.9,596.7v4.8M160.4,580.1v4.0M177.8,582.1v5.3M185.5,598.5v5.7M184.0,590.3v8.1M132.0,600.2v8.1M184.4,599.1v5.8M142.7,581.1v4.9M122.4,584.4v7.6M118.1,593.7v6.0M139.2,597.2v6.9M139.6,588.9v8.2M121.8,601.1v4.1M169.5,597.9v4.1M172.1,586.0v7.5M118.5,578.1v5.1M183.6,581.8v8.5M181.9,600.3v6.1M142.3,589.9v8.7M125.3,595.5v8.8M177.0,577.9v9.7M124.2,585.4v7.7M181.1,585.4v9.5M155.4,584.7v5.9M130.1,578.9v4.9M165.3,601.6v5.0M121.2,601.4v7.2M145.8,582.8v7.6M174.7,588.2v6.5M121.7,599.6v4.2M151.8,597.7v4.8M168.2,600.4v7.8M172.1,579.6v6.6M128.2,597.8v5.8M149.1,601.7v9.1M185.0,588.2v6.9M168.1,588.8v5.7M145.7,580.6v6.3M185.9,600.7v7.8M152.2,585.3v4.5M136.6,596.3v9.2M142.8,596.4v8.6M165.7,593.4v8.6" stroke="#5b9bd5" stroke-width="0.8" fill="none"/><path d="M186.7,532.8V555.8M188.3,538.1V555.8M186.7,581.8V608.7M188.3,581.8V597.9M191.8,530.7V555.8M193.4,536.7V555.8M191.8,581.8V603.0M193.4,581.8V599.3M196.9,533.3V555.8M198.5,540.0V555.8M196.9,581.8V609.4M198.5,581.8V603.0M202.0,534.0V555.8M203.6,539.7V555.8M202.0,581.8V604.3M203.6,581.8V599.9M207.1,531.8V555.8M208.7,535.5V555.8M207.1,581.8V605.9M208.7,581.8V594.6M212.2,533.4V555.8M213.8,541.1V555.8M212.2,581.8V606.9M213.8,581.8V597.1M217.3,531.2V555.8M218.9,535.9V555.8M217.3,581.8V604.7M218.9,581.8V595.2M222.4,532.6V555.8M224.0,536.2V555.8M222.4,581.8V607.7M224.0,581.8V602.8M227.5,532.0V555.8M229.1,539.8V555.8M227.5,581.8V608.2M229.1,581.8V597.2M232.6,534.8V555.8M234.2,538.1V555.8M232.6,581.8V606.9M234.2,581.8V599.5M237.7,530.8V555.8M239.3,536.3V555.8M237.7,581.8V603.0M239.3,581.8V599.0" stroke="#5b9bd5" stroke-width="1.100" fill="none"/><path d="M213.6,576.3v1M177.5,561.7v1M120.7,572.1v1M175.8,574.6v1M164.4,574.9v1M152.6,575.7v1M206.2,565.6v1M183.7,572.6v1M143.3,569.3v1M215.0,561.8v1M214.8,572.7v1M219.6,563.6v1M131.6,575.7v1M215.0,566.4v1M131.7,560.0v1M195.1,562.4v1M232.1,570.2v1M144.2,571.9v1M162.9,579.1v1M227.2,568.3v1M196.2,573.0v1M215.0,580.3v1M124.0,564.3v1M191.2,562.8v1M189.7,557.2v1M223.8,568.5v1M134.4,572.1v1M157.3,560.0v1M177.3,558.4v1M145.3,577.4v1M202.5,555.2v1M211.8,555.3v1M159.7,578.4v1M193.3,562.8v1M164.9,565.0v1M135.5,580.9v1M127.0,565.9v1M208.1,565.2v1M235.6,561.2v1M235.4,578.1v1M199.2,578.0v1M173.1,576.5v1M213.9,568.3v1M175.8,573.2v1M168.6,557.1v1M208.1,561.8v1M177.8,575.3v1M140.8,555.4v1M135.1,570.2v1M163.0,561.5v1M173.6,579.0v1M150.5,565.5v1M223.7,570.8v1M152.1,567.2v1M176.7,558.6v1M164.9,562.8v1M215.0,563.3v1M197.9,580.1v1M228.8,564.6v1M191.3,563.2v1M167.3,567.6v1M213.6,579.2v1M154.7,555.0v1M173.3,556.3v1M124.2,575.0v1M133.8,573.6v1M163.1,579.3v1M220.7,556.5v1M143.2,579.5v1M192.5,565.8v1M212.3,576.0v1M178.3,567.1v1M132.4,564.3v1M137.7,571.1v1M191.7,558.6v1M194.2,557.4v1M133.0,571.7v1M174.9,578.3v1M194.4,573.1v1M135.6,576.5v1M130.5,570.9v1M227.4,578.5v1M225.3,566.6v1M202.0,575.5v1M136.7,579.4v1M227.1,566.3v1M211.9,566.5v1M153.1,573.4v1M128.1,575.7v1M235.3,562.3v1M230.8,557.0v1M221.2,562.1v1M233.9,566.1v1M228.7,555.7v1M130.7,576.1v1M195.5,568.8v1M124.5,559.4v1M164.1,556.2v1M237.0,574.8v1M231.9,573.1v1M160.9,556.9v1M206.4,557.8v1M184.8,566.9v1M178.6,556.8v1M129.3,568.4v1M124.3,568.5v1M138.3,562.2v1M138.4,569.7v1M166.2,560.7v1M146.6,569.5v1M227.3,565.8v1M139.8,563.1v1M148.8,569.8v1M212.8,569.7v1M142.7,563.3v1M165.3,566.3v1M167.2,580.8v1M185.2,572.1v1M204.6,571.6v1M215.0,564.5v1M198.8,580.2v1M139.9,571.1v1M165.7,556.4v1M125.4,574.6v1M134.1,573.4v1M132.4,564.4v1M124.5,569.0v1M212.8,560.7v1M186.9,578.9v1M155.1,567.1v1M205.5,577.4v1M140.4,572.1v1M134.7,557.8v1M235.9,556.2v1M228.4,574.4v1M199.9,573.8v1M196.9,562.3v1M172.6,560.1v1M221.3,575.1v1M212.9,560.4v1M190.1,561.5v1M213.3,574.2v1M237.3,573.3v1M200.8,575.1v1M131.7,570.4v1M124.5,564.4v1M134.4,579.5v1M124.0,578.8v1M231.7,566.2v1M218.2,556.2v1M137.0,555.1v1M128.7,554.9v1M217.7,557.1v1M189.9,562.0v1M136.2,565.8v1M142.0,580.3v1M165.7,570.3v1M186.7,571.2v1M177.0,561.9v1M136.7,578.0v1M143.2,566.5v1M215.4,569.8v1M231.7,575.9v1M180.8,558.0v1M190.1,567.2v1M221.6,568.7v1M202.0,576.0v1M175.8,576.8v1M226.0,558.9v1M228.4,577.5v1M220.8,563.6v1M150.2,558.3v1M164.1,577.1v1M163.2,555.0v1M156.4,557.0v1M193.6,574.9v1M229.2,557.2v1M165.2,558.1v1M227.3,576.6v1M181.6,579.7v1M181.6,575.1v1M177.9,564.3v1M237.2,576.8v1M190.0,577.4v1M196.8,575.6v1M128.5,558.3v1M133.5,570.6v1M205.0,558.9v1M179.9,557.8v1M201.2,575.1v1M130.8,580.4v1M198.6,558.1v1M161.8,559.0v1M206.0,578.7v1M141.2,559.6v1M194.4,577.2v1M207.2,566.8v1M133.6,570.8v1M174.0,575.8v1M187.7,574.0v1M234.4,571.1v1M227.5,562.0v1M120.9,577.8v1M124.2,580.7v1M174.1,556.4v1M152.9,573.6v1M165.7,571.1v1M132.6,576.6v1M164.4,576.5v1M137.9,572.2v1M175.6,565.4v1M122.9,568.7v1M218.9,557.6v1M172.9,555.2v1M237.1,580.1v1M200.2,567.4v1M128.9,558.0v1M203.3,575.5v1M236.5,577.3v1M172.0,561.5v1M184.2,563.9v1M184.5,577.9v1M173.7,580.4v1M204.8,556.0v1M208.2,572.1v1M193.5,554.9v1M223.6,567.7v1M183.6,559.3v1M124.8,555.2v1M145.3,562.8v1M138.7,556.4v1M205.9,573.1v1M224.0,560.5v1M206.0,570.3v1M131.2,577.6v1M162.5,559.7v1M142.2,578.9v1M146.5,564.9v1M184.8,564.2v1M197.5,557.1v1M171.0,570.1v1M193.2,570.7v1M152.2,571.5v1M234.6,567.4v1M196.1,576.6v1M150.2,561.8v1M234.3,562.7v1M170.6,564.5v1M237.0,569.0v1M225.7,559.1v1M153.2,571.8v1M158.0,572.1v1M180.2,556.9v1M133.8,566.3v1M183.2,559.4v1M151.5,554.9v1M151.8,562.9v1M166.2,570.3v1M220.6,573.5v1M207.5,562.2v1M178.7,573.8v1M225.4,561.1v1M122.4,556.2v1M181.1,577.6v1M138.6,575.3v1M195.8,577.3v1M226.2,557.6v1M213.7,558.4v1M134.6,565.2v1M177.9,556.7v1M153.0,559.4v1M136.5,557.4v1M123.5,560.5v1M159.0,565.8v1M202.0,570.8v1M177.8,563.3v1M192.7,559.9v1M141.5,557.8v1M199.1,558.5v1M146.8,564.0v1M186.7,571.7v1M190.1,570.4v1M143.2,578.6v1M207.0,565.4v1M167.1,569.9v1M134.7,571.6v1M226.5,564.3v1M179.1,561.4v1M227.2,564.7v1M162.9,573.4v1M164.3,578.4v1M168.9,570.2v1M156.4,570.2v1M176.0,557.6v1M224.8,559.0v1M188.1,572.5v1M175.6,563.4v1M173.8,580.9v1M122.1,577.9v1M191.8,567.4v1M195.4,571.5v1M217.9,580.3v1M181.0,564.0v1M163.1,578.6v1M176.9,556.7v1M189.4,557.8v1M161.3,571.8v1M192.4,568.8v1M217.9,570.7v1M234.3,576.0v1M151.6,575.2v1M163.0,579.5v1M193.2,565.7v1M141.2,576.9v1M162.0,555.3v1M214.8,555.0v1M125.9,555.6v1M196.2,569.5v1M177.3,579.2v1M175.8,560.2v1M237.4,557.7v1M126.5,560.7v1M235.1,565.7v1M162.5,564.5v1M164.1,574.5v1M195.4,562.1v1M143.0,576.1v1M186.5,567.9v1M144.2,580.3v1M182.6,578.8v1" stroke="#111" stroke-width="0.9" fill="none"/><path d="M159.2,535.0v1M197.3,533.2v1M183.9,539.8v1M128.4,542.9v1M126.0,541.3v1M129.7,533.6v1M170.9,550.1v1M136.0,536.6v1M194.5,552.8v1M188.7,540.5v1M235.1,532.6v1M221.4,538.1v1M138.4,534.2v1M157.5,549.8v1M142.6,544.6v1M195.9,539.9v1M185.3,533.0v1M128.5,536.2v1M200.7,541.2v1M158.1,544.7v1M174.3,538.3v1M213.9,547.2v1M150.0,544.4v1M182.6,551.1v1M206.4,538.0v1M235.5,534.2v1M170.2,548.5v1M139.3,542.5v1M126.2,546.5v1M210.5,544.4v1M223.4,538.6v1M202.4,544.9v1M189.0,541.8v1M219.2,552.7v1M176.7,546.4v1M128.7,547.3v1M196.8,553.8v1M217.1,538.0v1M166.4,546.5v1M124.2,541.9v1M141.1,534.2v1M128.5,548.8v1M136.6,537.1v1M167.0,551.1v1M131.0,541.6v1M185.5,551.3v1M216.8,550.9v1M154.0,540.9v1M163.3,551.3v1M232.9,535.0v1M142.1,536.8v1M148.7,542.4v1M190.1,537.5v1M122.1,541.0v1M164.5,544.2v1M232.4,547.0v1M181.5,545.4v1M200.2,532.8v1M226.1,549.0v1M223.2,549.4v1M167.2,540.5v1M133.6,545.8v1M128.8,533.1v1M145.9,535.2v1M161.1,532.8v1M121.6,535.0v1M133.4,539.7v1M124.6,551.1v1M193.0,534.9v1M150.9,539.4v1M163.9,534.4v1M220.3,553.8v1M175.8,542.4v1M131.6,533.9v1M161.4,537.5v1M217.9,535.2v1M124.3,552.8v1M183.0,534.9v1M184.7,532.2v1M183.0,553.4v1M221.9,547.1v1M152.0,539.8v1M141.0,548.8v1M183.5,549.0v1M159.9,536.6v1M215.9,553.6v1M220.7,549.6v1M216.7,548.1v1M148.0,543.2v1M162.9,532.3v1M124.9,537.8v1M151.7,547.1v1M232.8,541.6v1M230.5,553.7v1M232.6,539.7v1M147.2,536.7v1M144.5,536.2v1M194.1,551.7v1M219.3,542.3v1M197.5,549.5v1M131.5,546.3v1M227.3,549.1v1M208.8,542.3v1M142.4,549.2v1M160.3,549.5v1M234.5,540.4v1M168.3,552.7v1M205.8,535.4v1M136.4,535.0v1M226.8,549.6v1" stroke="#111" stroke-width="0.9" fill="none"/><path d="M144.9,607.8v1M132.9,600.8v1M128.0,588.5v1M236.8,587.5v1M194.3,594.2v1M171.8,595.2v1M140.8,604.2v1M128.6,588.1v1M120.3,589.0v1M166.4,606.1v1M163.0,584.9v1M148.6,608.6v1M125.4,598.5v1M162.8,599.6v1M158.2,600.5v1M177.1,599.3v1M225.2,597.5v1M134.8,583.6v1M230.5,595.0v1M141.0,607.3v1M186.8,601.5v1M222.7,589.5v1M160.3,605.5v1M134.0,602.4v1M129.5,600.4v1M201.4,607.4v1M218.3,595.4v1M141.4,585.9v1M180.8,595.6v1M126.4,606.2v1M178.3,600.7v1M144.1,588.4v1M119.3,591.1v1M149.6,593.2v1M162.7,604.3v1M224.0,586.5v1M165.0,586.3v1M196.8,608.1v1M141.9,602.5v1M153.6,582.2v1M208.8,591.0v1M138.1,593.6v1M145.5,592.9v1M171.0,593.1v1M187.9,589.6v1M129.2,584.1v1M130.6,595.9v1M160.8,603.6v1M178.0,600.9v1M234.5,583.5v1M119.9,585.6v1M163.9,597.3v1M206.4,591.3v1M232.7,581.9v1M217.3,587.5v1M222.0,582.7v1M232.7,602.3v1M235.8,597.5v1M139.0,608.0v1M170.4,584.1v1M189.9,595.2v1M174.2,586.0v1M132.4,597.5v1M171.8,585.2v1M170.2,601.4v1M203.0,594.5v1M164.7,591.5v1M144.7,587.1v1M171.0,584.7v1M204.2,600.9v1M190.7,582.4v1M161.2,593.5v1M129.0,607.9v1M207.8,595.4v1M201.8,587.2v1M145.2,596.0v1M206.4,599.3v1M118.7,598.3v1M226.0,601.9v1M228.3,608.3v1" stroke="#111" stroke-width="0.9" fill="none"/><polyline points="177.4,555.8 177.4,580.0" fill="none" stroke="#222" stroke-width="0.9" /><g font-family="Liberation Sans,sans-serif" font-size="16" fill="#000" stroke="#000" stroke-width=".3"><text x="24" y="576">Z</text><text x="49" y="601">X</text></g><path d="M28.500,597V582M28.500,596.500H42M24,589l4.500,8 4.500,-8" stroke="#000" stroke-width="1" fill="none"/><path d="M25.500,584.500l3,-7.500 3,7.500z" fill="#1010d8"/><path d="M40,594l8,3 -8,3z" fill="#c81010"/><rect x="25.500" y="594" width="6" height="6" rx="2" fill="#14b814"/></svg></div>
<div class="vp" style="left:372px;top:386px;width:365px;height:238px"><svg width="365" height="238" viewBox="372 386 365 238"><clipPath id="cs"><rect x="372" y="386" width="365" height="238"/></clipPath><g clip-path="url(#cs)"><g fill="none" stroke="#8c8c8c" stroke-width="0.9" opacity="0.33"><ellipse cx="362.4" cy="557.8" rx="4.5" ry="0.6"/><ellipse cx="377.4" cy="557.8" rx="4.5" ry="0.6"/><ellipse cx="392.4" cy="557.8" rx="4.4" ry="0.6"/><ellipse cx="407.4" cy="557.9" rx="4.4" ry="0.6"/><ellipse cx="422.3" cy="557.9" rx="4.3" ry="0.6"/><ellipse cx="437.2" cy="557.9" rx="4.3" ry="0.6"/><ellipse cx="452.1" cy="557.9" rx="4.3" ry="0.6"/><ellipse cx="467.0" cy="557.9" rx="4.2" ry="0.6"/><ellipse cx="481.9" cy="557.9" rx="4.2" ry="0.6"/><ellipse cx="496.7" cy="557.9" rx="4.2" ry="0.6"/><ellipse cx="511.5" cy="557.9" rx="4.1" ry="0.6"/><ellipse cx="526.3" cy="558.0" rx="4.1" ry="0.6"/><ellipse cx="541.1" cy="558.0" rx="4.1" ry="0.6"/><ellipse cx="555.9" cy="558.0" rx="4.1" ry="0.6"/><ellipse cx="570.6" cy="558.0" rx="4.1" ry="0.6"/><ellipse cx="585.3" cy="558.0" rx="4.1" ry="0.6"/><ellipse cx="600.0" cy="558.0" rx="4.1" ry="0.6"/><ellipse cx="614.7" cy="558.0" rx="4.1" ry="0.6"/><ellipse cx="629.4" cy="558.0" rx="4.1" ry="0.6"/><ellipse cx="644.0" cy="558.1" rx="4.2" ry="0.6"/><ellipse cx="658.6" cy="558.1" rx="4.2" ry="0.6"/><ellipse cx="673.2" cy="558.1" rx="4.2" ry="0.6"/><ellipse cx="687.8" cy="558.1" rx="4.3" ry="0.6"/><ellipse cx="702.4" cy="558.1" rx="4.3" ry="0.6"/><ellipse cx="716.9" cy="558.1" rx="4.3" ry="0.6"/><ellipse cx="731.5" cy="558.1" rx="4.4" ry="0.6"/><ellipse cx="746.0" cy="558.1" rx="4.4" ry="0.6"/></g><g fill="none" stroke="#8c8c8c" stroke-width="0.9" opacity="0.50"><ellipse cx="371.3" cy="559.7" rx="4.7" ry="0.6"/><ellipse cx="364.8" cy="561.8" rx="4.9" ry="0.7"/><ellipse cx="386.8" cy="559.7" rx="4.6" ry="0.6"/><ellipse cx="380.9" cy="561.8" rx="4.8" ry="0.7"/><ellipse cx="374.5" cy="564.0" rx="5.0" ry="0.7"/><ellipse cx="402.3" cy="559.7" rx="4.6" ry="0.6"/><ellipse cx="396.9" cy="561.8" rx="4.7" ry="0.7"/><ellipse cx="391.1" cy="564.0" rx="4.9" ry="0.7"/><ellipse cx="417.8" cy="559.8" rx="4.5" ry="0.6"/><ellipse cx="413.0" cy="561.8" rx="4.7" ry="0.7"/><ellipse cx="407.7" cy="564.0" rx="4.9" ry="0.7"/><ellipse cx="433.2" cy="559.8" rx="4.5" ry="0.6"/><ellipse cx="429.0" cy="561.8" rx="4.6" ry="0.7"/><ellipse cx="424.4" cy="564.0" rx="4.8" ry="0.7"/><ellipse cx="448.7" cy="559.8" rx="4.4" ry="0.7"/><ellipse cx="444.9" cy="561.8" rx="4.6" ry="0.7"/><ellipse cx="440.9" cy="564.0" rx="4.8" ry="0.8"/><ellipse cx="464.1" cy="559.8" rx="4.4" ry="0.7"/><ellipse cx="460.9" cy="561.8" rx="4.5" ry="0.7"/><ellipse cx="457.5" cy="564.0" rx="4.7" ry="0.8"/><ellipse cx="479.4" cy="559.8" rx="4.3" ry="0.7"/><ellipse cx="476.8" cy="561.8" rx="4.5" ry="0.7"/><ellipse cx="474.0" cy="564.0" rx="4.7" ry="0.8"/><ellipse cx="494.8" cy="559.8" rx="4.3" ry="0.7"/><ellipse cx="492.7" cy="561.8" rx="4.5" ry="0.7"/><ellipse cx="490.5" cy="564.0" rx="4.6" ry="0.8"/><ellipse cx="510.1" cy="559.8" rx="4.3" ry="0.7"/><ellipse cx="508.6" cy="561.9" rx="4.4" ry="0.7"/><ellipse cx="507.0" cy="564.0" rx="4.6" ry="0.8"/><ellipse cx="525.4" cy="559.8" rx="4.3" ry="0.7"/><ellipse cx="524.5" cy="561.9" rx="4.4" ry="0.7"/><ellipse cx="523.5" cy="564.0" rx="4.6" ry="0.8"/><ellipse cx="540.7" cy="559.9" rx="4.3" ry="0.7"/><ellipse cx="540.3" cy="561.9" rx="4.4" ry="0.7"/><ellipse cx="539.9" cy="564.1" rx="4.6" ry="0.8"/><ellipse cx="556.0" cy="559.9" rx="4.2" ry="0.7"/><ellipse cx="556.2" cy="561.9" rx="4.4" ry="0.7"/><ellipse cx="556.3" cy="564.1" rx="4.6" ry="0.8"/><ellipse cx="571.3" cy="559.9" rx="4.2" ry="0.7"/><ellipse cx="572.0" cy="561.9" rx="4.4" ry="0.7"/><ellipse cx="572.7" cy="564.1" rx="4.6" ry="0.8"/><ellipse cx="586.5" cy="559.9" rx="4.3" ry="0.7"/><ellipse cx="587.7" cy="561.9" rx="4.4" ry="0.7"/><ellipse cx="589.1" cy="564.1" rx="4.6" ry="0.8"/><ellipse cx="601.7" cy="559.9" rx="4.3" ry="0.7"/><ellipse cx="603.5" cy="561.9" rx="4.4" ry="0.7"/><ellipse cx="605.4" cy="564.1" rx="4.6" ry="0.8"/><ellipse cx="616.9" cy="559.9" rx="4.3" ry="0.7"/><ellipse cx="619.2" cy="561.9" rx="4.4" ry="0.7"/><ellipse cx="621.7" cy="564.1" rx="4.6" ry="0.8"/><ellipse cx="632.1" cy="559.9" rx="4.3" ry="0.7"/><ellipse cx="634.9" cy="561.9" rx="4.4" ry="0.7"/><ellipse cx="638.0" cy="564.1" rx="4.6" ry="0.8"/><ellipse cx="647.2" cy="559.9" rx="4.3" ry="0.7"/><ellipse cx="650.6" cy="562.0" rx="4.5" ry="0.7"/><ellipse cx="654.3" cy="564.1" rx="4.6" ry="0.7"/><ellipse cx="662.3" cy="559.9" rx="4.3" ry="0.6"/><ellipse cx="666.3" cy="562.0" rx="4.5" ry="0.7"/><ellipse cx="670.5" cy="564.1" rx="4.7" ry="0.7"/><ellipse cx="677.4" cy="560.0" rx="4.4" ry="0.6"/><ellipse cx="681.9" cy="562.0" rx="4.5" ry="0.7"/><ellipse cx="686.7" cy="564.1" rx="4.7" ry="0.7"/><ellipse cx="692.5" cy="560.0" rx="4.4" ry="0.6"/><ellipse cx="697.5" cy="562.0" rx="4.6" ry="0.7"/><ellipse cx="702.9" cy="564.1" rx="4.8" ry="0.7"/><ellipse cx="707.6" cy="560.0" rx="4.5" ry="0.6"/><ellipse cx="713.1" cy="562.0" rx="4.6" ry="0.7"/><ellipse cx="719.1" cy="564.2" rx="4.8" ry="0.7"/><ellipse cx="722.6" cy="560.0" rx="4.5" ry="0.6"/><ellipse cx="728.7" cy="562.0" rx="4.7" ry="0.7"/><ellipse cx="735.2" cy="564.2" rx="4.9" ry="0.7"/><ellipse cx="737.6" cy="560.0" rx="4.5" ry="0.6"/><ellipse cx="744.2" cy="562.0" rx="4.7" ry="0.7"/></g><g fill="none" stroke="#8c8c8c" stroke-width="0.9" opacity="0.67"><ellipse cx="367.5" cy="566.3" rx="5.2" ry="0.8"/><ellipse cx="384.8" cy="566.3" rx="5.2" ry="0.8"/><ellipse cx="378.1" cy="568.9" rx="5.4" ry="0.8"/><ellipse cx="402.1" cy="566.3" rx="5.1" ry="0.8"/><ellipse cx="396.1" cy="568.9" rx="5.3" ry="0.9"/><ellipse cx="419.4" cy="566.3" rx="5.0" ry="0.8"/><ellipse cx="414.0" cy="568.9" rx="5.2" ry="0.9"/><ellipse cx="436.6" cy="566.3" rx="5.0" ry="0.8"/><ellipse cx="432.0" cy="568.9" rx="5.2" ry="0.9"/><ellipse cx="453.8" cy="566.4" rx="4.9" ry="0.8"/><ellipse cx="449.9" cy="568.9" rx="5.1" ry="0.9"/><ellipse cx="445.6" cy="571.7" rx="5.3" ry="1.0"/><ellipse cx="471.0" cy="566.4" rx="4.9" ry="0.8"/><ellipse cx="467.7" cy="568.9" rx="5.1" ry="0.9"/><ellipse cx="464.2" cy="571.7" rx="5.3" ry="1.0"/><ellipse cx="488.2" cy="566.4" rx="4.8" ry="0.8"/><ellipse cx="485.6" cy="568.9" rx="5.0" ry="0.9"/><ellipse cx="482.8" cy="571.7" rx="5.2" ry="1.0"/><ellipse cx="505.3" cy="566.4" rx="4.8" ry="0.8"/><ellipse cx="503.4" cy="568.9" rx="5.0" ry="0.9"/><ellipse cx="501.4" cy="571.7" rx="5.2" ry="1.0"/><ellipse cx="522.4" cy="566.4" rx="4.8" ry="0.8"/><ellipse cx="521.2" cy="568.9" rx="5.0" ry="0.9"/><ellipse cx="519.9" cy="571.7" rx="5.2" ry="1.0"/><ellipse cx="539.4" cy="566.4" rx="4.8" ry="0.8"/><ellipse cx="539.0" cy="568.9" rx="4.9" ry="0.9"/><ellipse cx="538.4" cy="571.7" rx="5.2" ry="1.0"/><ellipse cx="556.5" cy="566.4" rx="4.7" ry="0.8"/><ellipse cx="556.7" cy="568.9" rx="4.9" ry="0.9"/><ellipse cx="556.9" cy="571.7" rx="5.1" ry="1.0"/><ellipse cx="573.5" cy="566.4" rx="4.7" ry="0.8"/><ellipse cx="574.4" cy="568.9" rx="4.9" ry="0.9"/><ellipse cx="575.3" cy="571.7" rx="5.1" ry="1.0"/><ellipse cx="590.5" cy="566.4" rx="4.7" ry="0.8"/><ellipse cx="592.1" cy="568.9" rx="4.9" ry="0.9"/><ellipse cx="593.7" cy="571.7" rx="5.1" ry="1.0"/><ellipse cx="607.5" cy="566.4" rx="4.8" ry="0.8"/><ellipse cx="609.7" cy="569.0" rx="5.0" ry="0.9"/><ellipse cx="612.1" cy="571.7" rx="5.2" ry="1.0"/><ellipse cx="624.4" cy="566.4" rx="4.8" ry="0.8"/><ellipse cx="627.3" cy="569.0" rx="5.0" ry="0.9"/><ellipse cx="630.5" cy="571.7" rx="5.2" ry="1.0"/><ellipse cx="641.3" cy="566.4" rx="4.8" ry="0.8"/><ellipse cx="644.9" cy="569.0" rx="5.0" ry="0.9"/><ellipse cx="648.8" cy="571.7" rx="5.2" ry="1.0"/><ellipse cx="658.2" cy="566.5" rx="4.8" ry="0.8"/><ellipse cx="662.5" cy="569.0" rx="5.0" ry="0.9"/><ellipse cx="667.1" cy="571.7" rx="5.3" ry="0.9"/><ellipse cx="675.1" cy="566.5" rx="4.9" ry="0.8"/><ellipse cx="680.0" cy="569.0" rx="5.1" ry="0.9"/><ellipse cx="685.4" cy="571.7" rx="5.3" ry="0.9"/><ellipse cx="691.9" cy="566.5" rx="4.9" ry="0.8"/><ellipse cx="697.5" cy="569.0" rx="5.1" ry="0.8"/><ellipse cx="703.6" cy="571.7" rx="5.4" ry="0.9"/><ellipse cx="708.7" cy="566.5" rx="5.0" ry="0.8"/><ellipse cx="715.0" cy="569.0" rx="5.2" ry="0.8"/><ellipse cx="721.8" cy="571.7" rx="5.4" ry="0.9"/><ellipse cx="725.5" cy="566.5" rx="5.0" ry="0.8"/><ellipse cx="732.4" cy="569.0" rx="5.3" ry="0.8"/><ellipse cx="740.0" cy="571.7" rx="5.5" ry="0.9"/><ellipse cx="742.3" cy="566.5" rx="5.1" ry="0.8"/></g><g fill="none" stroke="#8c8c8c" stroke-width="0.9" opacity="0.83"><ellipse cx="370.7" cy="571.6" rx="5.7" ry="0.9"/><ellipse cx="362.7" cy="574.6" rx="5.9" ry="1.0"/><ellipse cx="389.5" cy="571.6" rx="5.6" ry="0.9"/><ellipse cx="382.3" cy="574.6" rx="5.8" ry="1.0"/><ellipse cx="408.2" cy="571.6" rx="5.5" ry="0.9"/><ellipse cx="401.9" cy="574.7" rx="5.8" ry="1.0"/><ellipse cx="426.9" cy="571.7" rx="5.4" ry="0.9"/><ellipse cx="421.4" cy="574.7" rx="5.7" ry="1.0"/><ellipse cx="440.9" cy="574.7" rx="5.6" ry="1.0"/><ellipse cx="460.3" cy="574.7" rx="5.5" ry="1.0"/><ellipse cx="479.8" cy="574.7" rx="5.5" ry="1.1"/><ellipse cx="499.1" cy="574.7" rx="5.4" ry="1.1"/><ellipse cx="518.5" cy="574.7" rx="5.4" ry="1.1"/><ellipse cx="537.8" cy="574.7" rx="5.4" ry="1.1"/><ellipse cx="537.2" cy="577.9" rx="5.6" ry="1.2"/><ellipse cx="557.1" cy="574.7" rx="5.4" ry="1.1"/><ellipse cx="557.3" cy="577.9" rx="5.6" ry="1.2"/><ellipse cx="576.4" cy="574.7" rx="5.4" ry="1.1"/><ellipse cx="577.5" cy="577.9" rx="5.6" ry="1.2"/><ellipse cx="595.6" cy="574.7" rx="5.4" ry="1.1"/><ellipse cx="597.6" cy="577.9" rx="5.6" ry="1.2"/><ellipse cx="614.8" cy="574.7" rx="5.4" ry="1.1"/><ellipse cx="617.6" cy="577.9" rx="5.6" ry="1.1"/><ellipse cx="633.9" cy="574.7" rx="5.4" ry="1.0"/><ellipse cx="637.7" cy="577.9" rx="5.7" ry="1.1"/><ellipse cx="653.0" cy="574.7" rx="5.5" ry="1.0"/><ellipse cx="657.6" cy="577.9" rx="5.7" ry="1.1"/><ellipse cx="672.1" cy="574.7" rx="5.5" ry="1.0"/><ellipse cx="677.6" cy="577.9" rx="5.8" ry="1.1"/><ellipse cx="691.2" cy="574.7" rx="5.6" ry="1.0"/><ellipse cx="697.5" cy="577.9" rx="5.8" ry="1.1"/><ellipse cx="710.2" cy="574.7" rx="5.6" ry="1.0"/><ellipse cx="717.4" cy="577.9" rx="5.9" ry="1.1"/><ellipse cx="729.2" cy="574.7" rx="5.7" ry="1.0"/><ellipse cx="737.2" cy="577.9" rx="6.0" ry="1.1"/></g><g fill="none" stroke="#8c8c8c" stroke-width="0.9" opacity="1.00"><ellipse cx="374.5" cy="577.9" rx="6.2" ry="1.1"/><ellipse cx="365.9" cy="581.5" rx="6.5" ry="1.2"/><ellipse cx="395.0" cy="577.9" rx="6.0" ry="1.1"/><ellipse cx="387.4" cy="581.5" rx="6.4" ry="1.2"/><ellipse cx="379.0" cy="585.5" rx="6.7" ry="1.3"/><ellipse cx="369.8" cy="589.9" rx="7.2" ry="1.5" transform="rotate(176 369.8 589.9)"/><ellipse cx="415.4" cy="577.9" rx="6.0" ry="1.1"/><ellipse cx="408.8" cy="581.5" rx="6.3" ry="1.2"/><ellipse cx="401.5" cy="585.5" rx="6.6" ry="1.3"/><ellipse cx="393.5" cy="589.9" rx="7.0" ry="1.5"/><ellipse cx="384.6" cy="594.7" rx="7.5" ry="1.6" transform="rotate(176 384.6 594.7)"/><ellipse cx="374.5" cy="600.2" rx="8.0" ry="1.8" transform="rotate(175 374.5 600.2)"/><ellipse cx="363.3" cy="606.4" rx="8.6" ry="2.1" transform="rotate(175 363.3 606.4)"/><ellipse cx="435.8" cy="577.9" rx="5.9" ry="1.1"/><ellipse cx="430.2" cy="581.5" rx="6.2" ry="1.2"/><ellipse cx="424.0" cy="585.5" rx="6.5" ry="1.4"/><ellipse cx="417.2" cy="589.9" rx="6.9" ry="1.5"/><ellipse cx="409.6" cy="594.7" rx="7.3" ry="1.7"/><ellipse cx="401.1" cy="600.2" rx="7.8" ry="1.9" transform="rotate(176 401.1 600.2)"/><ellipse cx="391.5" cy="606.3" rx="8.4" ry="2.1" transform="rotate(176 391.5 606.3)"/><ellipse cx="380.6" cy="613.3" rx="9.0" ry="2.4" transform="rotate(175 380.6 613.3)"/><ellipse cx="368.1" cy="621.3" rx="9.8" ry="2.7" transform="rotate(174 368.1 621.3)"/><ellipse cx="456.1" cy="577.9" rx="5.8" ry="1.1"/><ellipse cx="451.5" cy="581.5" rx="6.1" ry="1.3"/><ellipse cx="446.4" cy="585.5" rx="6.4" ry="1.4"/><ellipse cx="440.8" cy="589.8" rx="6.8" ry="1.5"/><ellipse cx="434.6" cy="594.7" rx="7.2" ry="1.7"/><ellipse cx="427.6" cy="600.1" rx="7.7" ry="1.9"/><ellipse cx="419.7" cy="606.3" rx="8.2" ry="2.1"/><ellipse cx="410.7" cy="613.3" rx="8.8" ry="2.4" transform="rotate(176 410.7 613.3)"/><ellipse cx="400.4" cy="621.2" rx="9.5" ry="2.8" transform="rotate(175 400.4 621.2)"/><ellipse cx="388.5" cy="630.5" rx="10.4" ry="3.2" transform="rotate(174 388.5 630.5)"/><ellipse cx="476.5" cy="577.9" rx="5.7" ry="1.2"/><ellipse cx="472.8" cy="581.5" rx="6.0" ry="1.3"/><ellipse cx="468.8" cy="585.5" rx="6.3" ry="1.4"/><ellipse cx="464.4" cy="589.8" rx="6.7" ry="1.5"/><ellipse cx="459.5" cy="594.7" rx="7.1" ry="1.7"/><ellipse cx="454.0" cy="600.1" rx="7.5" ry="1.9"/><ellipse cx="447.8" cy="606.3" rx="8.0" ry="2.2"/><ellipse cx="440.7" cy="613.2" rx="8.6" ry="2.5"/><ellipse cx="432.6" cy="621.2" rx="9.3" ry="2.8" transform="rotate(176 432.6 621.2)"/><ellipse cx="423.3" cy="630.4" rx="10.1" ry="3.2" transform="rotate(175 423.3 630.4)"/><ellipse cx="496.7" cy="577.9" rx="5.7" ry="1.2"/><ellipse cx="494.1" cy="581.5" rx="6.0" ry="1.3"/><ellipse cx="491.2" cy="585.4" rx="6.3" ry="1.4"/><ellipse cx="487.9" cy="589.8" rx="6.6" ry="1.6"/><ellipse cx="484.3" cy="594.7" rx="7.0" ry="1.7"/><ellipse cx="480.3" cy="600.1" rx="7.4" ry="1.9"/><ellipse cx="475.8" cy="606.2" rx="7.9" ry="2.2"/><ellipse cx="470.6" cy="613.2" rx="8.5" ry="2.5"/><ellipse cx="464.8" cy="621.1" rx="9.1" ry="2.9"/><ellipse cx="457.9" cy="630.3" rx="9.9" ry="3.3"/><ellipse cx="517.0" cy="577.9" rx="5.6" ry="1.2"/><ellipse cx="515.3" cy="581.5" rx="5.9" ry="1.3"/><ellipse cx="513.5" cy="585.4" rx="6.2" ry="1.4"/><ellipse cx="511.4" cy="589.8" rx="6.6" ry="1.6"/><ellipse cx="509.1" cy="594.6" rx="6.9" ry="1.7"/><ellipse cx="506.6" cy="600.1" rx="7.4" ry="2.0"/><ellipse cx="503.7" cy="606.2" rx="7.8" ry="2.2"/><ellipse cx="500.5" cy="613.1" rx="8.4" ry="2.5"/><ellipse cx="496.8" cy="621.0" rx="9.0" ry="2.9"/><ellipse cx="492.5" cy="630.2" rx="9.7" ry="3.4"/><ellipse cx="536.5" cy="581.5" rx="5.9" ry="1.3"/><ellipse cx="535.7" cy="585.4" rx="6.2" ry="1.4"/><ellipse cx="534.8" cy="589.8" rx="6.5" ry="1.6"/><ellipse cx="533.9" cy="594.6" rx="6.9" ry="1.7"/><ellipse cx="532.8" cy="600.0" rx="7.3" ry="2.0"/><ellipse cx="531.6" cy="606.1" rx="7.8" ry="2.2"/><ellipse cx="530.3" cy="613.1" rx="8.3" ry="2.5"/><ellipse cx="528.7" cy="621.0" rx="8.9" ry="2.9"/><ellipse cx="526.9" cy="630.1" rx="9.6" ry="3.4"/><ellipse cx="557.6" cy="581.5" rx="5.9" ry="1.3"/><ellipse cx="557.9" cy="585.4" rx="6.2" ry="1.4"/><ellipse cx="558.2" cy="589.8" rx="6.5" ry="1.6"/><ellipse cx="558.6" cy="594.6" rx="6.9" ry="1.7"/><ellipse cx="559.0" cy="600.0" rx="7.3" ry="2.0"/><ellipse cx="559.4" cy="606.1" rx="7.7" ry="2.2"/><ellipse cx="560.0" cy="613.0" rx="8.3" ry="2.5"/><ellipse cx="560.5" cy="620.9" rx="8.9" ry="2.9"/><ellipse cx="561.2" cy="630.1" rx="9.5" ry="3.4"/><ellipse cx="578.7" cy="581.5" rx="5.9" ry="1.3"/><ellipse cx="580.1" cy="585.4" rx="6.2" ry="1.4"/><ellipse cx="581.6" cy="589.8" rx="6.5" ry="1.6"/><ellipse cx="583.2" cy="594.6" rx="6.9" ry="1.7"/><ellipse cx="585.1" cy="600.0" rx="7.3" ry="2.0"/><ellipse cx="587.2" cy="606.1" rx="7.7" ry="2.2"/><ellipse cx="589.6" cy="613.0" rx="8.3" ry="2.5"/><ellipse cx="592.3" cy="620.9" rx="8.9" ry="2.9"/><ellipse cx="595.4" cy="630.0" rx="9.6" ry="3.4"/><ellipse cx="599.8" cy="581.5" rx="5.9" ry="1.3"/><ellipse cx="602.2" cy="585.4" rx="6.2" ry="1.4"/><ellipse cx="604.8" cy="589.7" rx="6.5" ry="1.6"/><ellipse cx="607.8" cy="594.6" rx="6.9" ry="1.7"/><ellipse cx="611.1" cy="600.0" rx="7.3" ry="1.9"/><ellipse cx="614.9" cy="606.0" rx="7.8" ry="2.2"/><ellipse cx="619.1" cy="612.9" rx="8.3" ry="2.5"/><ellipse cx="623.9" cy="620.8" rx="8.9" ry="2.9"/><ellipse cx="629.5" cy="629.9" rx="9.6" ry="3.3"/><ellipse cx="620.8" cy="581.5" rx="5.9" ry="1.3"/><ellipse cx="624.2" cy="585.4" rx="6.2" ry="1.4"/><ellipse cx="628.1" cy="589.7" rx="6.6" ry="1.5"/><ellipse cx="632.3" cy="594.5" rx="6.9" ry="1.7"/><ellipse cx="637.1" cy="599.9" rx="7.4" ry="1.9"/><ellipse cx="642.5" cy="606.0" rx="7.8" ry="2.2"/><ellipse cx="648.5" cy="612.9" rx="8.4" ry="2.5"/><ellipse cx="655.5" cy="620.7" rx="9.0" ry="2.8"/><ellipse cx="663.5" cy="629.8" rx="9.8" ry="3.2" transform="rotate(-176 663.5 629.8)"/><ellipse cx="641.8" cy="581.5" rx="6.0" ry="1.2"/><ellipse cx="646.3" cy="585.4" rx="6.3" ry="1.4"/><ellipse cx="651.3" cy="589.7" rx="6.6" ry="1.5"/><ellipse cx="656.8" cy="594.5" rx="7.0" ry="1.7"/><ellipse cx="663.0" cy="599.9" rx="7.4" ry="1.9"/><ellipse cx="670.0" cy="606.0" rx="7.9" ry="2.1"/><ellipse cx="677.9" cy="612.8" rx="8.5" ry="2.4"/><ellipse cx="687.0" cy="620.7" rx="9.2" ry="2.8" transform="rotate(-176 687.0 620.7)"/><ellipse cx="697.4" cy="629.7" rx="10.0" ry="3.2" transform="rotate(-175 697.4 629.7)"/><ellipse cx="662.7" cy="581.5" rx="6.0" ry="1.2"/><ellipse cx="668.3" cy="585.4" rx="6.3" ry="1.4"/><ellipse cx="674.4" cy="589.7" rx="6.7" ry="1.5"/><ellipse cx="681.2" cy="594.5" rx="7.1" ry="1.7"/><ellipse cx="688.9" cy="599.9" rx="7.5" ry="1.9"/><ellipse cx="697.5" cy="605.9" rx="8.1" ry="2.1" transform="rotate(-176 697.5 605.9)"/><ellipse cx="707.2" cy="612.8" rx="8.7" ry="2.4" transform="rotate(-175 707.2 612.8)"/><ellipse cx="718.3" cy="620.6" rx="9.4" ry="2.7" transform="rotate(-175 718.3 620.6)"/><ellipse cx="731.2" cy="629.6" rx="10.2" ry="3.1" transform="rotate(-174 731.2 629.6)"/><ellipse cx="683.6" cy="581.5" rx="6.1" ry="1.2"/><ellipse cx="690.2" cy="585.4" rx="6.4" ry="1.3"/><ellipse cx="697.5" cy="589.7" rx="6.8" ry="1.5"/><ellipse cx="705.6" cy="594.5" rx="7.2" ry="1.6"/><ellipse cx="714.7" cy="599.8" rx="7.7" ry="1.8" transform="rotate(-176 714.7 599.8)"/><ellipse cx="724.9" cy="605.9" rx="8.2" ry="2.0" transform="rotate(-175 724.9 605.9)"/><ellipse cx="736.4" cy="612.7" rx="8.9" ry="2.3" transform="rotate(-175 736.4 612.7)"/><ellipse cx="704.4" cy="581.5" rx="6.2" ry="1.2"/><ellipse cx="712.1" cy="585.4" rx="6.5" ry="1.3"/><ellipse cx="720.5" cy="589.7" rx="6.9" ry="1.4"/><ellipse cx="729.9" cy="594.5" rx="7.3" ry="1.6" transform="rotate(-176 729.9 594.5)"/><ellipse cx="740.4" cy="599.8" rx="7.8" ry="1.8" transform="rotate(-175 740.4 599.8)"/><ellipse cx="725.3" cy="581.5" rx="6.2" ry="1.2"/><ellipse cx="733.9" cy="585.4" rx="6.6" ry="1.3"/><ellipse cx="743.5" cy="589.7" rx="7.0" ry="1.4" transform="rotate(-176 743.5 589.7)"/><ellipse cx="746.0" cy="581.5" rx="6.3" ry="1.2"/></g><path d="M358.2,556.9L-26.3,662.9M431.8,557.0L195.8,662.1M504.9,557.0L413.6,661.2M577.5,557.1L627.1,660.4M649.7,557.2L836.6,659.6M721.4,557.2L1042.1,658.8M792.6,557.3L1243.7,658.0M358.2,556.9L792.6,557.3M319.6,567.5L839.5,567.8M261.7,583.5L909.0,583.3M165.5,610.0L1023.0,608.8M-26.3,662.9L1243.7,658.0" stroke="#000" stroke-width="1.0" fill="none" shape-rendering="crispEdges"/></g><path d="M410.4,567.6l-7.2,1.2M411.1,566.5l-5.4,0.6M424.6,582.0l-2.0,4.8M426.1,552.7l-1.7,-3.2M432.0,588.0l0.0,5.5M437.5,590.2l0.9,4.2M413.0,552.4l-2.5,-1.6M438.1,582.6l0.7,2.2M425.9,577.8l-0.9,2.0M412.3,566.5l-6.8,0.9M408.7,562.4l-4.9,-0.3M415.6,553.3l-3.0,-2.0M441.9,538.6l1.5,-3.8M419.7,552.5l-2.4,-2.3M422.8,572.8l-4.4,4.2M407.0,573.2l-4.0,1.5M437.0,539.9l0.4,-2.0M419.6,587.0l-2.1,3.9M437.2,547.3l0.7,-2.3M409.3,552.8l-3.2,-1.6M432.3,580.3l0.1,6.8M424.2,553.2l-1.9,-2.7M431.5,575.9l-0.3,6.0M424.8,582.9l-1.5,4.0M422.7,585.1l-1.1,2.5M419.9,557.3l-3.8,-2.2M424.4,577.7l-3.4,6.1M425.1,549.4l-2.8,-5.9M423.5,579.5l-3.1,5.6M420.1,557.5l-6.5,-3.6M424.5,577.5l-2.9,5.2M418.3,573.6l-2.1,1.4M432.1,584.3l0.0,3.2M414.8,557.6l-4.3,-1.6M435.9,545.6l1.0,-4.8M429.5,550.3l-0.5,-2.7M431.9,539.9l-0.0,-3.2M422.7,585.2l-2.7,6.2M420.6,588.1l-2.1,4.4M414.0,557.1l-2.6,-1.0M437.8,589.9l0.7,3.1M420.2,553.3l-4.8,-4.3M415.9,558.3l-3.0,-1.0M423.2,554.9l-2.3,-2.4M405.6,558.4l-5.4,-1.1M413.2,583.2l-2.2,2.3M436.7,578.7l1.3,4.1M433.8,577.7l0.5,3.8M418.1,560.4l-4.0,-1.0M430.0,537.4l-0.3,-4.3M415.4,550.4l-2.2,-1.8M434.6,575.0l1.5,6.4M411.2,545.6l-1.7,-1.5M414.2,554.7l-5.4,-2.8M409.2,581.3l-2.0,1.5M407.3,560.0l-7.0,-1.1M417.0,546.4l-4.0,-4.7M432.4,547.4l0.1,-5.4M431.1,539.1l-0.1,-4.1M420.0,541.7l-2.4,-4.4M415.3,556.1l-4.8,-2.3M419.7,559.0l-5.2,-2.1M440.8,540.2l2.0,-5.3M409.2,573.5l-4.9,2.0M405.8,569.5l-2.6,0.5M424.8,554.6l-3.2,-4.1M415.9,565.1l-6.0,0.4M409.1,564.2l-7.3,0.1M424.7,573.0l-2.3,2.8M419.9,555.0l-2.4,-1.8M431.7,542.4l-0.1,-4.2M430.8,547.8l-0.4,-5.3M424.1,580.4l-2.7,5.5M432.5,538.9l0.1,-3.9M415.2,559.0l-2.8,-0.8M405.2,564.3l-6.9,0.1M412.1,545.0l-2.6,-2.5M426.1,581.4l-1.1,3.2M423.2,579.7l-2.6,4.6M414.4,564.4l-6.8,0.1M437.5,546.5l0.7,-2.3M438.2,588.3l0.5,2.2M416.6,549.5l-2.7,-2.5M426.6,553.8l-1.3,-2.4M419.7,566.0l-6.7,1.1M424.2,575.2l-1.3,1.9M414.4,555.4l-5.0,-2.5M410.2,550.6l-6.2,-3.8M420.1,554.8l-3.7,-2.8M427.9,574.5l-1.6,4.1M421.6,553.8l-2.5,-2.5M411.8,576.4l-4.2,2.6M409.0,554.2l-3.9,-1.7M419.8,541.0l-1.2,-2.2M434.2,541.5l0.3,-2.6M409.3,567.7l-7.1,1.2M412.3,573.2l-6.3,2.9M420.0,540.3l-2.0,-3.9M418.9,556.2l-5.2,-3.1M424.0,544.0l-2.1,-5.3M419.3,586.6l-2.8,5.0M437.6,545.1l1.7,-5.8M410.3,580.3l-4.6,3.5M420.7,570.8l-3.9,2.3M406.9,559.5l-4.8,-0.9M438.3,587.3l0.6,2.3M425.8,551.4l-1.6,-3.4M425.5,552.2l-1.4,-2.5M407.2,562.6l-6.8,-0.4M410.5,546.6l-3.7,-3.0M434.1,551.8l0.5,-3.1M414.9,562.4l-6.2,-0.6M413.7,554.2l-5.9,-3.2M414.9,560.4l-4.2,-0.9M425.2,539.4l-0.8,-3.0M425.5,538.2l-1.1,-4.4M417.0,560.1l-4.9,-1.3M409.2,563.7l-2.4,-0.0M436.9,545.3l1.0,-3.9M423.1,545.7l-2.0,-4.1M422.1,555.9l-3.8,-3.1M404.6,572.6l-4.9,1.5M419.1,578.4l-1.8,2.0M406.4,570.1l-6.9,1.6M414.4,565.4l-3.2,0.3M406.5,552.7l-2.6,-1.2M426.0,554.0l-1.6,-2.6M419.9,583.0l-2.0,3.1M412.5,575.0l-2.4,1.3M423.0,554.0l-3.2,-3.5M423.0,575.6l-2.9,3.8M413.8,568.1l-4.3,1.0M417.2,562.5l-3.3,-0.3M411.6,553.8l-4.5,-2.2M427.0,543.7l-1.5,-6.1M419.0,583.6l-3.4,5.2M431.6,548.0l-0.1,-3.6M432.8,549.5l0.4,-7.0M430.8,550.9l-0.3,-3.2M421.3,552.4l-1.8,-1.9M426.3,547.0l-1.9,-5.7M429.4,581.3l-0.8,5.4M436.3,577.7l1.7,5.2M432.3,537.5l0.0,-2.6M406.6,563.5l-5.0,-0.1M420.3,554.8l-2.0,-1.5M431.3,575.6l-0.3,4.8M409.9,562.9l-3.0,-0.2M426.5,577.4l-2.4,5.8M440.7,539.4l0.8,-2.4M435.2,590.1l0.5,4.3M422.6,550.2l-2.5,-3.7M412.4,563.0l-5.5,-0.3M439.2,585.2l2.0,5.9M425.2,581.2l-2.1,5.4M417.5,569.0l-2.9,1.0M419.6,563.5l-7.1,-0.3M422.2,543.6l-2.8,-5.8M415.1,555.7l-4.8,-2.4M402.6,563.6l-4.7,-0.1M415.1,584.5l-3.6,4.3M419.2,542.9l-2.1,-3.5M430.7,539.0l-0.3,-5.5M418.8,544.1l-2.3,-3.4M423.2,554.8l-2.7,-2.8M419.8,565.3l-4.1,0.5M412.1,553.3l-3.0,-1.6M435.2,542.5l0.6,-3.7M413.9,552.4l-4.2,-2.7M404.9,575.1l-4.0,1.6M413.7,547.8l-5.4,-4.8M437.9,584.1l1.6,5.5M420.6,578.0l-1.5,1.8M424.7,579.7l-1.1,2.3M415.8,584.8l-3.0,3.9M402.9,563.2l-5.0,-0.1M439.6,543.9l2.2,-5.7M433.3,584.5l0.4,5.8M437.0,589.5l0.5,2.8M417.0,565.5l-4.9,0.5M420.0,559.1l-6.7,-2.8M411.6,569.8l-5.2,1.5M417.1,571.7l-5.0,2.6M415.4,560.4l-6.0,-1.3M423.3,571.9l-2.5,2.3M434.7,577.3l1.2,5.7M406.6,574.4l-5.7,2.3M436.6,590.5l0.7,4.1M433.9,589.4l0.3,4.1M402.9,566.3l-3.5,0.3M403.5,561.7l-5.5,-0.4M402.9,567.2l-4.7,0.5M419.0,559.0l-5.2,-2.0M416.5,566.4l-2.5,0.4M417.8,562.6l-4.6,-0.5M415.9,553.0l-2.9,-2.0M413.5,558.5l-6.2,-1.8M402.5,560.8l-4.4,-0.5M421.9,552.4l-1.8,-2.0M430.4,540.5l-0.4,-5.1M417.5,571.9l-5.1,2.8M410.2,559.0l-5.5,-1.3M423.3,552.4l-2.0,-2.7M439.6,539.3l1.6,-5.2M434.6,575.7l0.7,3.3M409.9,569.9l-2.7,0.7M418.8,562.1l-2.6,-0.4M415.0,551.6l-4.4,-3.2M413.9,572.7l-3.0,1.4M411.2,576.9l-5.6,3.5M432.9,576.9l0.4,6.0M409.2,553.3l-3.0,-1.4M416.1,568.3l-6.4,1.7M411.3,574.3l-6.7,3.3M415.0,576.3l-4.9,3.6M432.9,546.2l0.2,-3.8M431.4,589.0l-0.1,2.4M432.7,584.0l0.1,4.4M418.9,553.7l-4.9,-3.8M432.9,578.4l0.3,5.3M432.6,579.9l0.2,5.6M419.4,553.5l-2.2,-1.8M410.7,575.7l-3.6,2.0M429.5,586.2l-0.5,4.8M433.0,538.0l0.2,-5.0M406.5,569.6l-3.8,0.8M417.4,575.2l-5.6,4.3M431.1,549.0l-0.2,-3.8M415.9,572.3l-3.8,2.0M417.9,569.9l-4.8,2.0M423.0,546.1l-2.8,-5.6M417.2,560.7l-6.2,-1.4M430.2,548.6l-0.3,-2.1M410.4,562.8l-5.3,-0.3M437.1,543.1l1.4,-5.9M434.2,583.6l0.7,5.9M432.4,576.3l0.2,5.7M431.5,551.7l-0.2,-5.2M426.9,586.5l-1.2,5.1M423.1,576.0l-3.6,4.8M406.5,562.1l-4.4,-0.3M408.3,579.5l-4.0,2.6M410.4,564.5l-6.2,0.1M412.3,545.6l-3.1,-2.9M424.5,543.4l-2.2,-6.0M421.7,541.5l-2.7,-5.9M436.3,543.1l0.9,-4.5M413.9,546.8l-3.1,-3.0M418.0,568.0l-6.0,1.7M437.8,547.8l1.0,-2.7M423.7,580.1l-1.6,3.1M435.0,552.4l0.9,-3.4M429.8,585.3l-0.6,5.9M427.6,575.3l-1.6,4.0M405.3,555.9l-2.3,-0.7M431.0,577.9l-0.2,3.1M419.0,583.1l-2.9,4.2M424.5,576.2l-1.8,3.0M424.2,586.0l-1.2,3.4M406.0,559.6l-4.8,-0.8M415.2,584.0l-3.9,4.6M414.1,575.3l-6.1,3.9M416.0,565.0l-2.5,0.1M435.9,540.4l0.6,-3.9M410.9,562.0l-3.7,-0.4M439.3,543.5l1.1,-3.0M438.2,581.7l1.3,3.7M421.7,543.6l-2.3,-4.6M428.3,577.1l-1.0,3.5M415.5,583.9l-3.0,3.7M406.4,550.5l-3.2,-1.7M417.4,562.2l-6.4,-0.8M441.0,586.7l2.3,5.9M427.6,552.4l-1.2,-3.2M422.7,554.7l-3.3,-3.3M403.3,567.2l-5.1,0.6M428.6,548.5l-1.3,-5.8M405.2,572.0l-2.6,0.8M427.1,550.4l-1.6,-4.5M417.2,562.7l-6.7,-0.6M418.8,574.6l-2.0,1.6M417.1,576.5l-4.5,3.8M411.2,575.3l-2.4,1.3M413.4,571.3l-6.9,2.7M424.9,543.5l-0.7,-2.0M410.1,574.2l-3.1,1.4M412.4,559.5l-2.2,-0.5M440.2,541.4l1.0,-2.9M416.5,557.3l-3.9,-1.7M414.9,561.6l-4.0,-0.6M410.2,572.7l-3.3,1.3M421.8,584.7l-1.6,3.3M435.0,544.2l0.9,-5.6M410.7,578.6l-2.2,1.5M429.4,576.3l-1.1,5.3M421.4,554.0l-3.1,-2.9M425.8,544.3l-0.7,-2.4M424.6,575.7l-1.4,2.3M419.5,568.3l-6.8,2.3M411.7,569.3l-5.5,1.4M418.2,543.4l-2.2,-3.4M416.6,574.6l-1.8,1.3M409.3,572.3l-7.1,2.6M421.5,544.7l-2.5,-4.5M436.9,579.7l1.1,3.6M420.3,557.1l-3.6,-2.1M406.0,563.2l-6.7,-0.2M418.5,558.4l-5.8,-2.4M431.5,544.2l-0.1,-3.8M417.4,564.0l-6.1,-0.0M438.2,545.6l1.8,-5.3M427.7,550.4l-2.1,-6.5M418.2,557.4l-2.3,-1.1M419.6,580.8l-3.4,4.6M409.5,579.8l-3.3,2.3M417.9,565.8l-7.5,1.0M427.2,589.1l-0.9,4.6M410.6,559.4l-3.6,-0.8M432.0,537.1l0.0,-4.1M418.8,559.1l-6.2,-2.3M412.8,582.4l-2.4,2.3M406.3,557.2l-3.1,-0.8M418.8,561.8l-2.3,-0.4M422.1,589.2l-1.6,4.0M417.6,554.9l-4.8,-3.1M420.5,550.5l-3.3,-3.9M427.1,553.6l-1.3,-2.8M417.5,565.6l-4.3,0.5M417.4,560.4l-4.9,-1.2M418.4,579.8l-2.5,2.9M421.1,558.0l-5.0,-2.8M426.1,589.8l-1.1,4.6M412.8,566.0l-5.6,0.6M413.0,548.6l-4.7,-3.8M402.4,565.5l-4.5,0.2M428.0,546.8l-0.9,-4.1M404.9,557.6l-4.9,-1.2M412.4,562.3l-7.1,-0.6M421.9,571.5l-4.8,3.6M431.1,541.3l-0.2,-5.0M422.1,550.9l-3.1,-4.1M433.2,576.9l0.4,4.2M412.9,563.8l-2.5,-0.0M416.3,550.8l-2.6,-2.2M418.0,575.7l-2.6,2.2M434.4,589.5l0.5,5.4M410.0,549.2l-3.6,-2.4M425.8,550.6l-2.4,-5.3M404.9,557.5l-2.7,-0.6M425.8,552.3l-2.2,-4.2M433.9,553.1l0.6,-3.2M419.2,575.3l-1.8,1.6M430.6,540.0l-0.2,-4.0M412.9,574.7l-2.1,1.2M438.4,588.7l0.9,3.4M403.5,564.2l-5.6,0.0M416.4,565.5l-3.8,0.4M433.5,538.7l0.2,-3.0M427.1,548.0l-1.3,-4.2M423.6,587.9l-2.0,5.6M422.4,583.2l-1.3,2.7M430.6,552.3l-0.3,-2.5M420.6,551.8l-4.6,-5.0M428.3,541.8l-0.4,-2.6M411.1,546.2l-3.4,-2.9M432.7,578.6l0.2,3.5M421.3,553.8l-2.2,-2.1M419.5,582.4l-3.5,5.1M411.0,574.2l-6.2,3.0M416.8,559.0l-3.6,-1.2M433.6,542.4l0.3,-3.4M420.2,557.6l-6.5,-3.5M411.2,568.4l-5.0,1.1M435.9,584.3l0.7,3.4M416.9,583.5l-1.5,2.0M414.8,581.0l-2.4,2.4M417.6,578.8l-2.1,2.2M430.6,537.2l-0.1,-2.2M407.0,567.4l-4.3,0.6M433.6,545.1l0.2,-2.9M409.1,559.5l-4.1,-0.8M410.8,550.6l-4.1,-2.6M405.0,563.5l-6.0,-0.1M403.2,561.9l-3.1,-0.2M424.8,552.0l-2.6,-4.4M421.5,579.3l-3.4,5.0M420.2,542.9l-1.6,-2.8M416.0,564.6l-5.4,0.2M419.3,564.0l-5.5,0.0M416.9,549.2l-4.8,-4.7M427.0,576.7l-0.8,2.0M412.3,564.3l-4.6,0.1M416.0,582.8l-1.6,1.9M431.8,543.9l-0.0,-4.7M424.9,550.7l-1.3,-2.5M422.4,571.7l-2.9,2.4M412.9,555.3l-3.3,-1.5M419.1,559.9l-6.3,-2.0M426.9,578.4l-0.9,2.7M412.1,547.8l-4.9,-4.0M434.2,581.5l0.5,3.8M418.5,587.5l-1.1,2.0M406.5,564.9l-7.6,0.3M427.9,581.9l-1.3,5.6M435.2,578.6l1.4,6.3M428.3,581.0l-0.7,3.4M419.1,567.5l-2.3,0.6M440.4,542.1l2.0,-5.4M423.6,577.0l-2.7,4.1M420.9,579.4l-4.0,5.6M416.4,572.2l-6.6,3.4M420.3,559.2l-4.0,-1.7M421.0,557.5l-3.4,-2.0M412.0,547.1l-4.0,-3.4M430.2,545.7l-0.4,-3.9M427.3,547.4l-1.6,-5.7M423.6,578.7l-1.5,2.6M417.3,561.4l-3.3,-0.6M422.7,580.4l-1.8,3.2M403.0,569.4l-4.4,0.8M429.2,550.0l-0.8,-3.9M433.7,586.0l0.3,3.8M423.9,572.6l-2.1,2.2M420.4,577.7l-4.5,5.2M420.6,552.7l-2.8,-2.8M425.2,589.2l-1.0,3.7M419.0,544.8l-3.8,-5.6M436.8,579.6l1.2,3.8M432.8,589.1l0.1,3.6M421.2,547.4l-1.3,-2.0M417.0,569.9l-2.2,0.9M426.8,584.0l-0.5,2.1M417.3,575.7l-3.9,3.1M427.8,586.0l-0.6,3.3M416.6,547.5l-2.0,-2.1M424.8,578.0l-2.6,5.0M414.3,570.1l-6.5,2.3M423.5,577.6l-2.0,3.2M426.1,574.3l-1.1,1.9M412.6,554.4l-5.8,-2.9M436.4,548.7l1.5,-5.2M432.6,549.6l0.2,-5.4M408.8,548.3l-4.2,-2.8M419.8,582.0l-1.4,2.1M413.7,568.7l-2.4,0.6M415.9,571.0l-4.4,1.9M422.1,574.1l-2.9,3.0M417.0,565.3l-5.8,0.5M424.6,574.5l-2.2,3.1M417.9,567.9l-5.2,1.4M416.4,550.1l-4.3,-3.8M436.9,580.7l1.1,3.7M434.1,581.4l0.3,2.3M409.6,564.3l-4.8,0.1M419.0,573.3l-1.8,1.3M408.9,578.0l-4.4,2.7M417.4,581.2l-2.0,2.3M409.2,566.5l-7.4,0.8M412.8,574.2l-6.4,3.4M420.3,545.8l-2.8,-4.4M413.7,569.9l-3.5,1.1M423.7,540.1l-1.3,-3.7M432.0,552.4l0.0,-2.7M414.5,563.6l-4.2,-0.1M435.8,551.1l0.8,-2.9M419.9,582.9l-1.8,2.7M439.3,582.5l1.5,3.7M420.8,579.9l-3.1,4.4M409.3,560.1l-5.2,-0.9M423.4,538.7l-1.2,-3.5M409.0,578.0l-3.3,2.0M415.6,547.7l-4.0,-4.0M437.6,540.3l0.6,-2.7M413.5,555.5l-4.7,-2.2M417.0,571.5l-5.5,2.8M415.9,562.1l-3.5,-0.4M420.1,572.6l-3.9,2.8M430.2,575.9l-0.3,2.3M430.9,586.3l-0.1,2.6M406.8,568.3l-4.8,0.8M424.6,587.9l-1.8,5.9M434.4,578.9l0.7,4.5M424.0,548.3l-2.6,-5.1M417.7,582.3l-2.3,3.0M411.5,577.8l-5.5,3.7M425.3,544.9l-1.4,-3.9M415.8,549.0l-4.7,-4.4M426.2,552.1l-1.7,-3.6M419.1,555.1l-2.6,-1.8M438.5,583.5l2.2,6.4M435.4,551.2l1.4,-5.3M409.9,570.4l-4.2,1.2M434.7,537.3l0.2,-2.2M422.3,554.6l-1.7,-1.6M415.0,580.6l-5.2,5.1M430.0,580.2l-0.3,2.1M411.7,561.0l-4.2,-0.6M412.5,579.9l-5.1,4.1M419.2,576.7l-3.8,3.8M416.6,541.3l-2.3,-3.4M416.0,550.6l-4.9,-4.1M428.8,577.5l-0.6,2.5M433.5,549.0l0.5,-4.4M430.0,580.1l-0.3,2.1M417.8,560.7l-5.5,-1.3M421.6,575.2l-3.1,3.4M417.5,571.5l-2.2,1.1M434.8,589.2l0.4,3.5M432.7,577.9l0.2,4.4M437.2,550.6l2.3,-6.0M412.6,565.1l-6.6,0.4M419.9,568.6l-4.8,1.8M413.0,552.1l-3.1,-1.9M435.1,539.3l0.8,-6.1M405.9,569.3l-6.0,1.2M428.0,574.8l-1.0,2.7M430.6,576.1l-0.4,3.8M422.1,550.8l-2.8,-3.8M436.8,577.7l2.3,6.5M438.5,582.5l2.0,5.8" stroke="#5b9bd5" stroke-width=".8" fill="none"/><polygon points="420.5,531.6 437.2,527.9 449.3,550.2 427.9,553.9 420.5,561.4 413.0,546.5" fill="#5b9bd5" stroke="none" stroke-width="0" stroke-linejoin="round" opacity=".75"/><polygon points="430,577 470,575 498,570 480,584 452,590 436,588" fill="#5b9bd5" opacity=".8"/><path d="M437.9,587.5v6.2M453.0,583.7v7.0M468.8,586.1v5.5M441.3,582.0v4.9M458.1,582.6v7.0M441.1,583.9v3.2M477.9,587.9v7.4M459.6,582.3v4.6M453.9,582.9v7.8M447.7,583.2v7.1M436.0,589.4v5.3M456.5,584.7v5.4M439.0,582.3v7.3M441.3,588.2v4.0M476.5,589.2v6.8M466.6,586.6v6.6M435.9,585.8v7.1M439.7,589.4v7.4M449.7,584.9v5.3M448.5,590.0v4.9M431.3,582.7v6.6M477.7,586.0v5.5M456.4,588.0v4.1M459.2,586.5v6.1M438.7,583.4v4.7M474.5,584.8v6.0M444.7,582.8v3.3M469.1,588.2v4.9M462.8,587.4v7.5M476.0,585.3v7.9M476.1,586.7v7.4M453.6,585.0v4.2M472.1,583.3v3.3M468.7,588.2v5.4M470.2,582.4v4.3M443.9,585.4v3.9M433.3,584.7v7.5M477.2,588.0v5.4M442.1,589.7v5.6M465.0,582.2v4.1M470.2,588.4v7.4M458.9,585.4v5.9M470.8,584.5v5.7M443.2,588.1v3.1M462.9,589.6v3.1M458.5,587.2v7.3M458.0,584.1v5.0M476.0,589.2v3.7M434.6,582.8v3.1M451.4,583.1v7.3M461.5,583.0v5.7M445.6,586.0v4.1M438.0,583.5v4.9M464.1,586.4v3.2M464.1,589.0v6.9M468.0,582.1v5.3M433.0,588.1v3.9M464.2,584.0v6.5M445.1,582.3v4.9M444.9,589.2v4.5" stroke="#5b9bd5" stroke-width="0.8" fill="none"/><polygon points="678.1,544.6 690.2,543.7 701.3,545.6 708.8,547.4 709.7,557.6 705.0,561.4 706.0,574.4 697.6,576.2 688.3,572.5 688.3,566.9 679.0,567.9" fill="#959998" stroke="#555" stroke-width="0.5" stroke-linejoin="round" /><polygon points="661.3,483.1 682.7,483.1 682.7,487.9 661.3,487.9" fill="#f2c530" stroke="#1c1c1c" stroke-width="0.5" stroke-linejoin="round" /><polygon points="604.6,484.5 691.1,487.9 694.8,492.0 697.6,502.2 697.6,516.2 604.6,516.2" fill="#f2c530" stroke="#1c1c1c" stroke-width="0.6" stroke-linejoin="round" /><polygon points="576.7,500.0 697.6,500.0 697.6,542.8 673.4,542.8 673.4,565.1 664.1,565.1 649.3,550.2 634.4,555.8 625.1,580.0 580.5,580.0 576.7,561.4" fill="#f2c530" stroke="#1c1c1c" stroke-width="0.6" stroke-linejoin="round" /><polygon points="580.5,524.2 697.6,524.2 697.6,534.4 580.5,534.4" fill="#c81e10" stroke="none" stroke-width="0.7" stroke-linejoin="round" /><polygon points="674.4,525.1 697.6,525.1 697.6,533.8 674.4,533.8" fill="#d8401c" stroke="#c03018" stroke-width="0.5" stroke-linejoin="round" /><polygon points="691.1,525.7 697.6,525.7 697.6,533.5 691.1,533.5" fill="#e0584a" stroke="none" stroke-width="0.7" stroke-linejoin="round" /><polyline points="604.6,500.0 604.6,524.2" fill="none" stroke="#1c1c1c" stroke-width="0.6" /><polyline points="580.5,500.0 580.5,580.0" fill="none" stroke="#1c1c1c" stroke-width="0.6" /><polyline points="627.9,534.4 627.9,543.7 673.4,543.7" fill="none" stroke="#1c1c1c" stroke-width="0.5" /><polyline points="633.4,535.3 651.1,535.3 651.1,543.7 633.4,543.7 633.4,535.3" fill="none" stroke="#1c1c1c" stroke-width="0.5" /><polyline points="576.7,518.6 578.6,520.5 578.6,533.5 576.7,534.4" fill="none" stroke="#c81e10" stroke-width="1.5" /><polygon points="606.5,478.0 627.9,478.0 627.9,484.5 606.5,484.5" fill="#4a2c18" stroke="#2a1608" stroke-width="0.4" stroke-linejoin="round" /><polygon points="618.6,484.5 623.2,484.5 623.2,487.5 618.6,487.5" fill="#5a3a22" stroke="none" stroke-width="0.7" stroke-linejoin="round" /><polygon points="580.5,430.6 604.6,430.6 604.6,516.2 580.5,516.2" fill="#f2c530" stroke="#1c1c1c" stroke-width="0.6" stroke-linejoin="round" /><polygon points="575.8,451.1 580.5,451.1 580.5,516.2 575.8,516.2" fill="#d9a91f" stroke="#1c1c1c" stroke-width="0.5" stroke-linejoin="round" /><polyline points="580.5,496.6 604.6,496.6" fill="none" stroke="#1c1c1c" stroke-width="0.5" /><polygon points="546.9,430.6 580.0,421.9 582.2,423.2 582.2,430.6" fill="#bfeaf0" stroke="#6cbcc6" stroke-width="0.5" stroke-linejoin="round" /><polygon points="558.1,430.6 558.1,427.3 578.6,422.3 579.7,426.0 577.7,430.6" fill="#bfeaf0" stroke="#6cbcc6" stroke-width="0.5" stroke-linejoin="round" /><polygon points="468.8,426.5 492.0,426.5 492.0,431.0 468.8,431.0" fill="#f2c530" stroke="#1c1c1c" stroke-width="0.5" stroke-linejoin="round" /><polygon points="475.3,422.8 487.4,422.8 487.4,426.5 475.3,426.5" fill="#f2c530" stroke="#1c1c1c" stroke-width="0.5" stroke-linejoin="round" /><polygon points="493.0,428.0 507.8,428.0 507.8,431.0 493.0,431.0" fill="#f2c530" stroke="#1c1c1c" stroke-width="0.5" stroke-linejoin="round" /><polygon points="464.2,431.0 606.4,431.0 606.4,440.3 464.2,440.3" fill="#f2c530" stroke="#1c1c1c" stroke-width="0.6" stroke-linejoin="round" /><polygon points="534.8,440.3 604.5,440.3 604.5,441.8 534.8,441.8" fill="#2a2a2a" stroke="none" stroke-width="0.7" stroke-linejoin="round" /><polygon points="537.6,441.8 596.2,441.8 596.2,451.1 537.6,451.1" fill="#f4cf48" stroke="none" stroke-width="0.7" stroke-linejoin="round" /><polyline points="537.6,451.1 596.2,451.1" fill="none" stroke="#1c1c1c" stroke-width="0.8" /><polygon points="576.6,451.1 596.2,451.1 596.2,516.2 576.6,516.2" fill="#f2c530" stroke="none" stroke-width="0.7" stroke-linejoin="round" /><ellipse cx="523.7" cy="427.3" rx="11.2" ry="1.9" fill="#fff" stroke="#333" stroke-width="0.6" /><ellipse cx="523.7" cy="424.7" rx="11.2" ry="1.9" fill="#fff" stroke="#333" stroke-width="0.6" /><ellipse cx="523.7" cy="419.5" rx="11.5" ry="2.4" fill="#dcae28" stroke="#8a6a10" stroke-width="0.5" /><ellipse cx="523.7" cy="415.8" rx="11.2" ry="2.4" fill="#e6be3c" stroke="#8a6a10" stroke-width="0.5" /><ellipse cx="523.7" cy="412.0" rx="7.8" ry="2.2" fill="#ecc850" stroke="#8a6a10" stroke-width="0.5" /><polygon points="442.8,428.4 449.3,424.1 463.2,443.6 455.8,449.2" fill="#fff" stroke="#1c1c1c" stroke-width="0.6" stroke-linejoin="round" /><polygon points="434.0,432.5 442.8,428.4 455.8,449.2 448.7,453.3" fill="#e2b830" stroke="#8a6a10" stroke-width="0.6" stroke-linejoin="round" /><ellipse cx="458.6" cy="428.4" rx="5.2" ry="5.2" fill="#e8c040" stroke="#6a5008" stroke-width="0.7" /><ellipse cx="458.0" cy="427.3" rx="3.3" ry="3.0" fill="#f0d060" stroke="#8a6a10" stroke-width="0.4" /><polygon points="430.7,513.9 463.2,511.5 464.2,514.9 441.8,517.7" fill="#f2c530" stroke="#1c1c1c" stroke-width="0.6" stroke-linejoin="round" /><polygon points="418.6,519.5 441.8,517.7 464.2,514.9 476.2,515.8 502.3,540.0 507.8,547.4 507.8,563.2 474.4,572.5 449.3,550.2 437.2,527.9 418.6,527.9" fill="#f2c530" stroke="#1c1c1c" stroke-width="0.6" stroke-linejoin="round" /><polyline points="441.8,517.7 473.4,544.6 502.3,540.0" fill="none" stroke="#1c1c1c" stroke-width="0.6" /><polyline points="473.4,544.6 474.4,572.5" fill="none" stroke="#1c1c1c" stroke-width="0.6" /><polyline points="481.8,541.8 488.3,541.8 488.3,547.4 481.8,547.4 481.8,541.8" fill="none" stroke="#1c1c1c" stroke-width="0.5" /><polyline points="483.7,561.4 489.3,561.4 489.3,567.3 483.7,567.3 483.7,561.4" fill="none" stroke="#1c1c1c" stroke-width="0.5" /><polyline points="489.3,559.5 504.1,555.8" fill="none" stroke="#1c1c1c" stroke-width="0.5" /><path d="M472.5,549.2L432.2,551.2A12.9,12.9 0 0 0 432.2,577.0L472.5,573.0Z" fill="#f2c530" stroke="#1c1c1c" stroke-width=".6"/><polygon points="424.7,557.3 432.0,557.3 432.0,561.0 436.8,561.0 436.8,567.7 432.0,567.7 432.0,572.1 424.7,572.1 424.7,567.7 420.8,567.7 420.8,561.0 424.7,561.0" fill="#111" stroke="none" stroke-width="0.7" stroke-linejoin="round" /><polygon points="464.2,440.3 537.6,440.3 537.6,553.0 511.6,553.0" fill="#8690e4" fill-opacity=".93" stroke="#6a60e0" stroke-width=".7"/><polygon points="515.3,511.2 533.9,511.2 533.9,550.2 515.3,550.2" fill="#8088d8" stroke="none" stroke-width="0" stroke-linejoin="round" opacity=".6"/><polyline points="464.2,435.8 486.5,435.8" fill="none" stroke="#5548e0" stroke-width="1.1" /><polyline points="464.2,435.8 464.2,473.4" fill="none" stroke="#5548e0" stroke-width="1.1" /><polyline points="511.6,435.8 534.3,435.8 534.3,473.4" fill="none" stroke="#5548e0" stroke-width="1.1" /><polyline points="480.0,451.1 480.0,479.0" fill="none" stroke="#5548e0" stroke-width="1.1" /><polyline points="538.5,451.1 538.5,478.0" fill="none" stroke="#5548e0" stroke-width="1.1" /><polyline points="534.3,488.8 534.3,553.0 511.6,553.0" fill="none" stroke="#5548e0" stroke-width="1.1" /><polyline points="538.5,513.0 538.5,536.3" fill="none" stroke="#5548e0" stroke-width="1.1" /><polyline points="464.2,514.9 464.2,534.4" fill="none" stroke="#5548e0" stroke-width="1.1" /><polyline points="480.0,512.1 480.0,524.2" fill="none" stroke="#5548e0" stroke-width="1.1" /><polyline points="476.2,553.0 487.0,553.0" fill="none" stroke="#5548e0" stroke-width="1.1" /><polygon points="511.6,553.0 534.3,553.0 534.3,562.8 511.6,562.8" fill="#f2c530" stroke="#1c1c1c" stroke-width="0.5" stroke-linejoin="round" /><polygon points="511.6,562.8 534.3,562.8 534.3,570.7 511.6,570.7" fill="#0c1418" stroke="none" stroke-width="0.7" stroke-linejoin="round" /><polygon points="541.3,533.1 555.3,533.1 555.3,536.6 541.3,536.6" fill="#f2c530" stroke="#1c1c1c" stroke-width="0.5" stroke-linejoin="round" /><polygon points="560.8,533.1 574.8,533.1 574.8,536.6 560.8,536.6" fill="#f2c530" stroke="#1c1c1c" stroke-width="0.5" stroke-linejoin="round" /><polygon points="534.3,536.6 580.0,536.6 580.0,578.1 534.3,578.1" fill="#f2c530" stroke="#1c1c1c" stroke-width="0.6" stroke-linejoin="round" /><polyline points="534.3,543.1 580.0,543.1" fill="none" stroke="#1c1c1c" stroke-width="0.5" /><polyline points="536.7,563.2 548.8,549.8 567.3,549.8 580.0,561.4" fill="none" stroke="#1c1c1c" stroke-width="0.6" /><ellipse cx="521.2" cy="440.3" rx="4.1" ry="4.5" fill="#d81414" stroke="none" stroke-width="0" /><polygon points="523.1,448.3 523.1,401.8 520.9,401.8 521.8,393.4 525.7,382.3 529.6,393.4 530.5,401.8 528.3,401.8 528.3,448.3" fill="#0a0ac8" stroke="none" stroke-width="0.7" stroke-linejoin="round" /><polygon points="525.7,444.0 572.0,444.0 572.0,448.8 525.7,448.8" fill="#14c81e" stroke="none" stroke-width="0.7" stroke-linejoin="round" /><polygon points="570.2,441.8 599.0,446.4 570.2,451.5" fill="#14c81e" stroke="none" stroke-width="0.7" stroke-linejoin="round" /><polygon points="580.8,435.8 591.6,430.6 591.6,433.4 603.7,431.6 608.0,437.1 603.7,442.7 591.6,439.9 591.6,441.8" fill="#0a0ac8" stroke="none" stroke-width="0.7" stroke-linejoin="round" /><ellipse cx="558.1" cy="576.2" rx="19.0" ry="19.0" fill="#3a3a3a" stroke="#2a2a2a" stroke-width="3.2" stroke-dasharray="2.200 1.600"/><ellipse cx="558.1" cy="576.2" rx="17.9" ry="17.9" fill="#3c3c3c" stroke="#4a4a4a" stroke-width="0.6" /><ellipse cx="558.1" cy="576.2" rx="11.6" ry="11.6" fill="#e8bc2c" stroke="#5a4500" stroke-width="0.8" /><path d="M548.0,576.2H568.1M558.1,566.2V586.3" stroke="#f4d050" stroke-width="2.400"/><path d="M551.0,569.2L565.1,583.3M565.1,569.2L551.0,583.3" stroke="#7a5c10" stroke-width=".8"/><ellipse cx="558.1" cy="576.2" rx="3.2" ry="3.2" fill="#f4d050" stroke="#7a5c10" stroke-width="0.5" /><ellipse cx="651.1" cy="576.2" rx="19.0" ry="19.0" fill="#3a3a3a" stroke="#2a2a2a" stroke-width="3.2" stroke-dasharray="2.200 1.600"/><ellipse cx="651.1" cy="576.2" rx="17.9" ry="17.9" fill="#3c3c3c" stroke="#4a4a4a" stroke-width="0.6" /><ellipse cx="651.1" cy="576.2" rx="11.6" ry="11.6" fill="#e8bc2c" stroke="#5a4500" stroke-width="0.8" /><path d="M641.1,576.2H661.2M651.1,566.2V586.3" stroke="#f4d050" stroke-width="2.400"/><path d="M644.1,569.2L658.1,583.3M658.1,569.2L644.1,583.3" stroke="#7a5c10" stroke-width=".8"/><ellipse cx="651.1" cy="576.2" rx="3.2" ry="3.2" fill="#f4d050" stroke="#7a5c10" stroke-width="0.5" /><ellipse cx="608.3" cy="597.6" rx="25.1" ry="8.6" fill="#1652b8" stroke="#0c3480" stroke-width="0.7" /><polygon points="582.3,561.4 628.8,561.4 628.8,570.3 582.3,570.3" fill="#959998" stroke="#555" stroke-width="0.5" stroke-linejoin="round" /><polygon points="600.0,555.8 611.1,554.9 621.4,559.5 623.2,581.8 619.5,587.4 600.0,587.4 597.2,581.8 597.2,563.2" fill="#9a9e9d" stroke="#555" stroke-width="0.6" stroke-linejoin="round" /><polyline points="597.2,571.6 623.2,571.6" fill="none" stroke="#555" stroke-width="0.5" /><polyline points="600.0,581.8 620.4,581.8" fill="none" stroke="#555" stroke-width="0.5" /><polyline points="601.8,563.2 615.8,563.2" fill="none" stroke="#555" stroke-width="0.5" /><polygon points="601.8,587.4 618.6,587.4 616.7,591.5 603.7,591.5" fill="#8a8e8d" stroke="#555" stroke-width="0.4" stroke-linejoin="round" /><polygon points="629.2,467.3 658.5,467.3 657.1,495.7 653.0,500.4 645.5,500.9 645.5,506.9 637.2,506.9 637.2,500.9 631.6,499.8 629.2,495.7" fill="#0c1820" stroke="#000" stroke-width="0.5" stroke-linejoin="round" /><polyline points="631.6,469.7 632.9,495.7 638.1,497.6 639.0,490.1 642.7,489.2 644.6,497.6 652.6,497.6 655.2,469.7" fill="none" stroke="#7a8288" stroke-width="0.5" /><polygon points="637.2,499.1 645.5,499.1 645.5,573.4 641.8,576.6 637.2,573.4" fill="#0c1820" stroke="none" stroke-width="0.7" stroke-linejoin="round" /><g font-family="Liberation Sans,sans-serif" font-size="16" fill="#000" stroke="#000" stroke-width=".3"><text x="393.500" y="576">Z</text><text x="417.500" y="601">Y</text></g><path d="M397.500,597V582M397.500,596.500H411" stroke="#000" stroke-width="1" fill="none"/><circle cx="397" cy="597" r="2.800" fill="#c81010"/><path d="M393,590l10,11m0,-11l-10,11" stroke="#000" stroke-width="1.300"/><path d="M394.500,584.500l3,-7.500 3,7.500z" fill="#1010d8"/><path d="M409,594l8,3 -8,3z" fill="#14c814"/></svg></div>
<div class="abs" style="left:743px;top:122px;width:225px;height:18px;background:#dadada;border:1px solid #c6c6c6"></div>
<span class="tx" style="left:747px;top:125.2px;font-size:11.3px;transform:scaleX(0.9612);">Properties</span>
<svg class="ic" style="left:934px;top:124px" width="32" height="14" viewBox="0 0 32 14"><path d="M5.500,2.500h5v5h-5zM3.500,5.500h5v5h-5z" fill="#dadada" stroke="#000" stroke-width="1.200"/><path d="M20.500,3l7,7m0,-7l-7,7" stroke="#000" stroke-width="1.500"/></svg>
<div class="abs" style="left:743px;top:142px;width:224px;height:463px;background:#fff;border:1px solid #828790;border-right:0"></div>
<div class="row h" style="top:143px"><svg class="ic" style="left:4px;top:5px" width="10" height="8" viewBox="0 0 10 8"><path d="M.8,1.200l4.200,4.300 4.200,-4.300" fill="none" stroke="#1a1a1a" stroke-width="1.700"/></svg><span class="tx" style="left:23px;top:3px;transform:scaleX(0.9262);">Position</span></div>
<div class="row a" style="top:162px"><i></i><span class="tx" style="left:23px;top:3px;">X</span><span class="tx" style="left:67px;top:3px;transform:scaleX(0.9404);">-10</span></div>
<div class="row b" style="top:181px"><i></i><span class="tx" style="left:23px;top:3px;">Y</span><span class="tx" style="left:67px;top:3px;transform:scaleX(0.9268);">-160</span></div>
<div class="row a" style="top:200px"><i></i><span class="tx" style="left:23px;top:3px;">Z</span><span class="tx" style="left:67px;top:3px;transform:scaleX(0.8869);">128</span></div>
<div class="row h" style="top:219px"><svg class="ic" style="left:4px;top:5px" width="10" height="8" viewBox="0 0 10 8"><path d="M.8,1.200l4.200,4.300 4.200,-4.300" fill="none" stroke="#1a1a1a" stroke-width="1.700"/></svg><span class="tx" style="left:23px;top:3px;transform:scaleX(0.9235);">Rotation</span></div>
<div class="row a" style="top:238px"><i></i><span class="tx" style="left:23px;top:3px;">X</span><span class="tx" style="left:67px;top:3px;">0</span></div>
<div class="row b" style="top:257px"><i></i><span class="tx" style="left:23px;top:3px;">Y</span><span class="tx" style="left:67px;top:3px;">0</span></div>
<div class="row a" style="top:276px"><i></i><span class="tx" style="left:23px;top:3px;">Z</span><span class="tx" style="left:67px;top:3px;">0</span></div>
<div class="row h" style="top:295px"><svg class="ic" style="left:4px;top:5px" width="10" height="8" viewBox="0 0 10 8"><path d="M.8,1.200l4.200,4.300 4.200,-4.300" fill="none" stroke="#1a1a1a" stroke-width="1.700"/></svg><span class="tx" style="left:23px;top:3px;transform:scaleX(0.9706);">Visibility</span></div>
<div class="row a" style="top:314px"><i></i><span class="tx" style="left:23px;top:3px;transform:scaleX(0.9175);">Show</span><span class="tx" style="left:67px;top:3px;">1</span></div>
<div class="row b" style="top:333px"><i></i><span class="tx" style="left:23px;top:3px;transform:scaleX(0.9565);">Hide</span><span class="tx" style="left:67px;top:3px;transform:scaleX(0.86);">4294967295</span></div>
<div class="row h" style="top:352px"><svg class="ic" style="left:4px;top:5px" width="10" height="8" viewBox="0 0 10 8"><path d="M.8,1.200l4.200,4.300 4.200,-4.300" fill="none" stroke="#1a1a1a" stroke-width="1.700"/></svg><span class="tx" style="left:23px;top:3px;transform:scaleX(0.9285);">Appearance</span></div>
<div class="row b" style="top:371px"><i></i><span class="tx" style="left:23px;top:3px;transform:scaleX(0.9607);">Color</span><div class="abs" style="left:67px;top:3px;width:15px;height:14px;background:#aee9ef"></div><span class="tx" style="left:89px;top:3px;transform:scaleX(0.9055);">Trans Light Blue</span></div>
<div class="row a" style="top:390px"><i></i><span class="tx" style="left:23px;top:3px;transform:scaleX(0.8501);">Part</span><span class="tx" style="left:67px;top:3px;transform:scaleX(0.8922);">Windscreen&nbsp; 3 x&nbsp; 4 x&nbsp; 4 Inve...</span></div>
<div class="abs" style="left:745px;top:606px;width:46px;height:18px;border:1px solid #d9d9d9;border-top:0;background:#f0f0f0"></div>
<div class="abs" style="left:790px;top:605px;width:77px;height:21px;border:1px solid #d9d9d9;border-top:0;background:#fff"></div>
<div class="abs" style="left:866px;top:606px;width:59px;height:18px;border:1px solid #d9d9d9;border-top:0;border-left:0;background:#f0f0f0"></div>
<span class="tx" style="left:754px;top:607.5px;font-size:11.3px;transform:scaleX(0.963);">Parts</span>
<span class="tx" style="left:803px;top:608.3px;font-size:11.3px;transform:scaleX(0.9534);">Properties</span>
<span class="tx" style="left:876.5px;top:607.5px;font-size:11.3px;transform:scaleX(0.8822);">Timeline</span>
<span class="tx" style="left:3.5px;top:630px;transform:scaleX(0.8973);">Windscreen&nbsp; 3 x&nbsp; 4 x&nbsp; 4 Inverted (ID: 4872)</span>
<span class="tx" style="left:666.4px;top:630px;transform:scaleX(0.8813);">X: -10.00 Y: -160.00 Z: 128.00</span>
<span class="tx" style="left:824px;top:630px;transform:scaleX(0.8753);">M: 1/2S 1F R: 30</span>
<span class="tx" style="left:915.5px;top:630px;transform:scaleX(0.8163);">Step 1</span>
<div class="abs" style="left:215px;top:628px;width:1px;height:16px;background:#d7d7d7"></div>
<div class="abs" style="left:815px;top:628px;width:1px;height:16px;background:#d7d7d7"></div>
<div class="abs" style="left:910px;top:628px;width:1px;height:16px;background:#d7d7d7"></div>
<div class="abs" style="left:947px;top:628px;width:1px;height:16px;background:#d7d7d7"></div>
<svg class="ic" style="left:955px;top:634px" width="11" height="11" viewBox="0 0 11 11"><path d="M8,1h2v2h-2zM8,4.500h2v2h-2zM8,8h2v2h-2zM4.500,4.500h2v2h-2zM4.500,8h2v2h-2zM1,8h2v2h-2z" fill="#bdbdbd"/></svg>
<div class="abs" style="left:0;top:31px;width:1px;height:616px;background:#5e5a58"></div>
<div class="abs" style="left:967px;top:31px;width:1px;height:616px;background:#5e5a58"></div>
<div class="abs" style="left:0;top:646px;width:968px;height:1px;background:#5e5a58"></div>
<div class="abs" style="left:0;top:0;width:968px;height:1px;background:#6c6866"></div>
</div>
</body></html>
